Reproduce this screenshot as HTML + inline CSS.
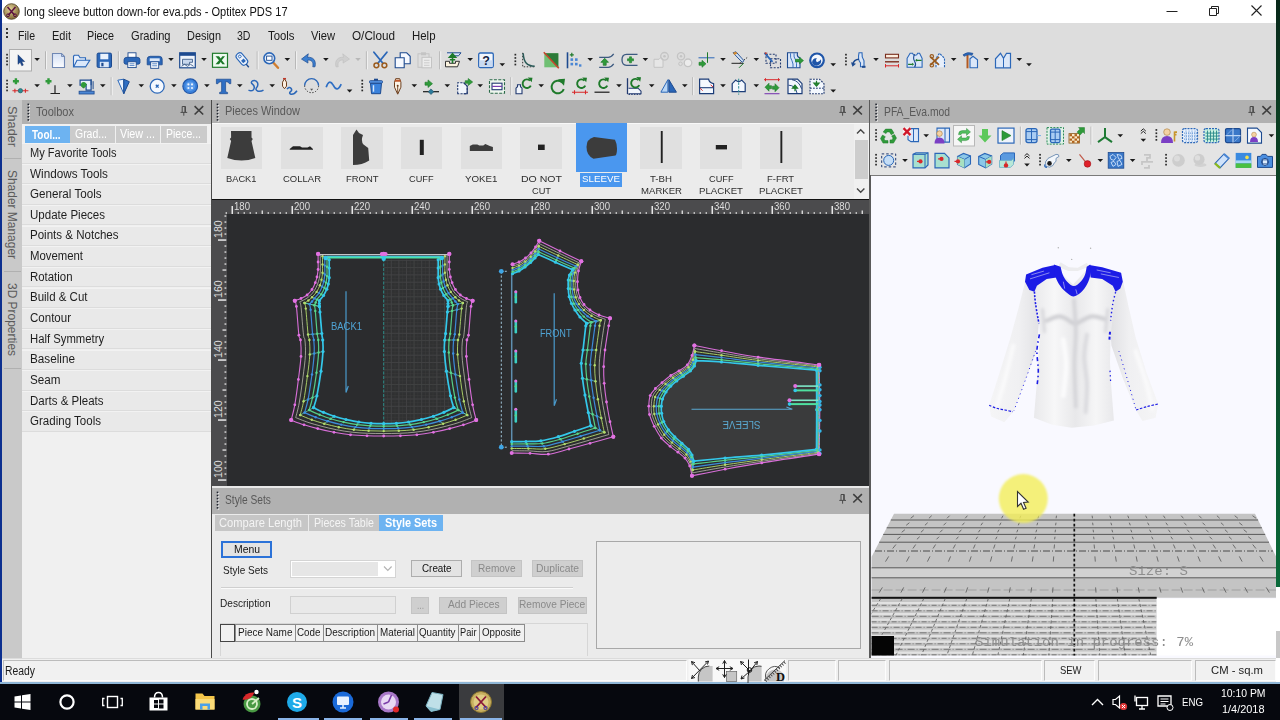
<!DOCTYPE html>
<html>
<head>
<meta charset="utf-8">
<title>Optitex PDS 17</title>
<style>
*{box-sizing:border-box;margin:0;padding:0}
html,body{width:1280px;height:720px;overflow:hidden;background:#fff}
body{font-family:"Liberation Sans",sans-serif;font-size:12px;color:#222;position:relative}
.a{position:absolute}
.t{position:absolute;white-space:nowrap;transform-origin:0 50%}
svg{position:absolute;left:0;top:0;overflow:visible}
</style>
</head>
<body>
<div class="a" style="left:0.0px;top:0.0px;width:1280.0px;height:23.0px;background:#ffffff;"></div>
<div class="a" style="left:0.0px;top:23.0px;width:1280.0px;height:77.0px;background:#dddddd;"></div>
<svg width="1280" height="720"><defs><radialGradient id="tg" cx=".4" cy=".35" r=".7"><stop offset="0" stop-color="#e2d29a"/><stop offset="1" stop-color="#7c6430"/></radialGradient></defs><circle cx="11.500" cy="11.500" r="7.800" fill="url(#tg)" stroke="#4a3a20" stroke-width=".8"/><path d="M7.500 7 L14.500 15 M15.500 7 L8.500 15" stroke="#5a1040" stroke-width="1.500"/><circle cx="8" cy="15.300" r="1.400" fill="none" stroke="#5a1040" stroke-width="1"/><circle cx="15" cy="15.300" r="1.400" fill="none" stroke="#5a1040" stroke-width="1"/></svg>
<span class="t" style="left:24.0px;top:5.1px;font-size:12px;line-height:14.4px;color:#111;transform:scaleX(0.921);">long sleeve button down-for eva.pds - Optitex PDS 17</span>
<svg width="1280" height="720"><path d="M1166.5 11.5 H1177.5" stroke="#222" stroke-width="1" fill="none"/><path d="M1209.5 8.5 h7 v7 h-7 z M1211.5 8.5 v-2 h7 v7 h-2" stroke="#222" stroke-width="1" fill="none"/><path d="M1251.5 5.5 l10 10 M1261.5 5.5 l-10 10" stroke="#222" stroke-width="1.1" fill="none"/></svg>
<span class="t" style="left:18.0px;top:27.7px;font-size:13px;line-height:15.6px;color:#1a1a1a;transform:scaleX(0.812);">File</span>
<span class="t" style="left:51.5px;top:27.7px;font-size:13px;line-height:15.6px;color:#1a1a1a;transform:scaleX(0.848);">Edit</span>
<span class="t" style="left:87.0px;top:27.7px;font-size:13px;line-height:15.6px;color:#1a1a1a;transform:scaleX(0.830);">Piece</span>
<span class="t" style="left:130.5px;top:27.7px;font-size:13px;line-height:15.6px;color:#1a1a1a;transform:scaleX(0.854);">Grading</span>
<span class="t" style="left:186.5px;top:27.7px;font-size:13px;line-height:15.6px;color:#1a1a1a;transform:scaleX(0.840);">Design</span>
<span class="t" style="left:237.0px;top:27.7px;font-size:13px;line-height:15.6px;color:#1a1a1a;transform:scaleX(0.812);">3D</span>
<span class="t" style="left:267.5px;top:27.7px;font-size:13px;line-height:15.6px;color:#1a1a1a;transform:scaleX(0.873);">Tools</span>
<span class="t" style="left:310.5px;top:27.7px;font-size:13px;line-height:15.6px;color:#1a1a1a;transform:scaleX(0.859);">View</span>
<span class="t" style="left:352.0px;top:27.7px;font-size:13px;line-height:15.6px;color:#1a1a1a;transform:scaleX(0.902);">O/Cloud</span>
<span class="t" style="left:411.5px;top:27.7px;font-size:13px;line-height:15.6px;color:#1a1a1a;transform:scaleX(0.879);">Help</span>
<svg width="1280" height="720"><g fill="#333"><rect x="6" y="28" width="2" height="2"/><rect x="6" y="32" width="2" height="2"/><rect x="6" y="36" width="2" height="2"/></g></svg>
<svg width="1280" height="720"><rect x="6.2" y="53.8" width="1.7" height="1.7" fill="#2a2a2a"/><rect x="6.2" y="57.1" width="1.7" height="1.7" fill="#2a2a2a"/><rect x="6.2" y="60.4" width="1.7" height="1.7" fill="#2a2a2a"/><rect x="6.2" y="63.7" width="1.7" height="1.7" fill="#2a2a2a"/><rect x="9.5" y="49.5" width="22" height="21.5" fill="#f4f4f4" stroke="#adadad"/><g transform="translate(11.5,51.3)"><path d="M6.500 3.500 L6.500 13 L8.700 10.900 L10.300 14.500 L11.800 13.800 L10.200 10.300 L13.200 10.200 Z" fill="#1d4a8f" stroke="#12306a" stroke-width=".5"/></g><path d="M34.3 58.1 h5.6 l-2.8 3 z" fill="#1a1a1a"/><path d="M45.5 51.3 v18" stroke="#b4b4b4" stroke-width="1"/><path d="M46.5 51.3 v18" stroke="#f2f2f2" stroke-width="1"/><g transform="translate(49.5,51.3)"><defs><linearGradient id="dg" x1="0" y1="0" x2="0" y2="1"><stop offset="0" stop-color="#d4e0f4"/><stop offset="1" stop-color="#fbfcff"/></linearGradient></defs><path d="M3 2.200 h9 l3 3 v11 h-12 z" fill="url(#dg)" stroke="#7088b4" stroke-width="1.100"/><path d="M12 2.200 v3 h3" fill="none" stroke="#7088b4" stroke-width=".9"/></g><g transform="translate(72.5,51.3)"><path d="M1 5 v10.5 h12 V6.5 H7.5 L6 4 H1.8 z" fill="#e8f0fc" stroke="#2b67b8" stroke-width="1.1"/><path d="M1.2 15.5 L4.5 9 H17.3 L13.2 15.5 z" fill="#dbe8fa" stroke="#2b67b8" stroke-width="1.1"/></g><g transform="translate(95.3,51.3)"><rect x="1.8" y="1.8" width="14.4" height="14.4" rx="1.3" fill="#2b67b8" stroke="#1d4a8f" stroke-width="1"/><rect x="5" y="2.5" width="8" height="5.5" fill="#eaf2fd"/><rect x="4.5" y="10.5" width="9" height="5.5" fill="#dbe7f8"/><rect x="6" y="11.5" width="2.2" height="3.5" fill="#1d4a8f"/></g><path d="M118.4 51.3 v18" stroke="#b4b4b4" stroke-width="1"/><path d="M119.4 51.3 v18" stroke="#f2f2f2" stroke-width="1"/><g transform="translate(123.0,51.3)"><rect x="5" y="1.5" width="8" height="5" fill="#fff" stroke="#1d4a8f" stroke-width=".9"/><path d="M1 8.5 q0 -2.5 3 -2.5 h10 q3 0 3 2.5 v3 q0 1.5 -3 1.5 h-10 q-3 0 -3 -1.5z" fill="#2b67b8" stroke="#1d4a8f" stroke-width=".8"/><rect x="4.8" y="10.5" width="8.4" height="5.8" fill="#fff" stroke="#1d4a8f" stroke-width=".9"/><path d="M6.5 12.5 h5 M6.5 14.3 h5" stroke="#2b67b8" stroke-width=".8"/></g><g transform="translate(145.7,52.3)"><path d="M1.5 7 q0 -3 3 -3 h9 q3 0 3 3 v5.5 h-15z" fill="#2b67b8" stroke="#1d4a8f" stroke-width=".8"/><rect x="4" y="6" width="10" height="3" fill="#dce8f8"/><rect x="5" y="9.5" width="8" height="6.5" fill="#fff" stroke="#1d4a8f" stroke-width=".9"/><path d="M6.5 11.5 h5 M6.5 13.5 h5" stroke="#2b67b8" stroke-width=".8"/></g><path d="M168.2 58.1 h5.6 l-2.8 3 z" fill="#1a1a1a"/><g transform="translate(178.5,51.3)"><rect x="1.2" y="1.5" width="15.6" height="15" fill="#eef3fb" stroke="#1d4a8f" stroke-width="1.2"/><rect x="1.2" y="1.5" width="15.6" height="3" fill="#1d4a8f"/><path d="M4 8 h10 v3 h-3 v2 h-7z" fill="#c9d8ee" stroke="#30507e" stroke-width=".8"/><path d="M3 15 l3 -2 l3 2 l3 -2 l3 2" stroke="#30507e" fill="none" stroke-width=".8"/></g><path d="M201.2 58.1 h5.6 l-2.8 3 z" fill="#1a1a1a"/><g transform="translate(211.0,51.3)"><rect x="1.5" y="2" width="15" height="14" fill="#eefaf0" stroke="#1e7a2a" stroke-width="1.2"/><path d="M4.5 5 L8 9 L4.5 13 H8 L9.7 10.8 L11.4 13 H14 L10.8 9 L14 5 H11.4 L9.7 7.2 L8 5z" fill="#1e7a2a"/></g><g transform="translate(234.0,51.3)"><g transform="rotate(-40 9 9)"><rect x="5.5" y="0.5" width="7" height="13.5" rx="3" fill="#eef4fd" stroke="#2b67b8" stroke-width="1.1"/><circle cx="9" cy="4" r="1.4" fill="none" stroke="#2b67b8" stroke-width=".9"/><rect x="7.3" y="8" width="3.4" height="3.4" fill="#2b67b8"/><path d="M9 14 v4" stroke="#1d4a8f" stroke-width="1.4"/></g></g><path d="M257.2 51.3 v18" stroke="#b4b4b4" stroke-width="1"/><path d="M258.2 51.3 v18" stroke="#f2f2f2" stroke-width="1"/><g transform="translate(262.0,51.3)"><path d="M10.5 10.5 L16 16.5" stroke="#d07d2e" stroke-width="2.4" stroke-linecap="round"/><circle cx="7.3" cy="7" r="5.4" fill="#e6effb" stroke="#2b67b8" stroke-width="1.6"/><rect x="4.6" y="4.8" width="5.4" height="4.2" fill="#fff" stroke="#1d4a8f" stroke-width=".9"/></g><path d="M284.5 58.1 h5.6 l-2.8 3 z" fill="#1a1a1a"/><path d="M295.6 51.3 v18" stroke="#b4b4b4" stroke-width="1"/><path d="M296.6 51.3 v18" stroke="#f2f2f2" stroke-width="1"/><g transform="translate(300.0,51.3)"><path d="M15 15.5 C16.5 9 13 5.5 7.5 6 L8.3 2.5 L1.5 7.8 L8 11.8 L7.7 8.8 C11.5 8.5 13.7 10.5 12.8 15.5z" fill="#3c7fd0" stroke="#1d4a8f" stroke-width=".7"/></g><path d="M323.1 58.1 h5.6 l-2.8 3 z" fill="#1a1a1a"/><g transform="translate(333.0,51.3)"><path d="M3 15.5 C1.5 9 5 5.5 10.5 6 L9.7 2.5 L16.5 7.8 L10 11.8 L10.3 8.8 C6.5 8.5 4.3 10.5 5.2 15.5z" fill="#cfcfcf" stroke="#bdbdbd" stroke-width=".6"/></g><path d="M355.2 58.1 h5.6 l-2.8 3 z" fill="#b8b8b8"/><path d="M366.4 51.3 v18" stroke="#b4b4b4" stroke-width="1"/><path d="M367.4 51.3 v18" stroke="#f2f2f2" stroke-width="1"/><g transform="translate(371.4,51.3)"><path d="M2.5 1 L11.5 12 M15.5 1 L6.5 12" stroke="#2b67b8" stroke-width="1.8" stroke-linecap="round"/><circle cx="5" cy="14" r="2.4" fill="none" stroke="#9a5a1c" stroke-width="1.5"/><circle cx="13" cy="14" r="2.4" fill="none" stroke="#9a5a1c" stroke-width="1.5"/></g><g transform="translate(393.7,51.3)"><path d="M6.5 1.5 h6.5 l3.5 3.5 v7.5 h-10z" fill="#f6f9ff" stroke="#1d4a8f" stroke-width="1.1"/><path d="M1.5 6.5 h9 v10 h-9z" fill="#f6f9ff" stroke="#1d4a8f" stroke-width="1.1"/></g><g transform="translate(416.0,51.3)"><rect x="2" y="2.5" width="11" height="13.5" fill="#dedede" stroke="#c4c4c4" stroke-width="1"/><rect x="5" y="1" width="5" height="3" fill="#c4c4c4"/><rect x="6" y="6" width="9.5" height="10.5" fill="#ececec" stroke="#c4c4c4" stroke-width="1"/><path d="M8 9 h5.5 M8 11.5 h5.5 M8 14 h5.5" stroke="#c4c4c4" stroke-width=".8"/></g><path d="M439.7 51.3 v18" stroke="#b4b4b4" stroke-width="1"/><path d="M440.7 51.3 v18" stroke="#f2f2f2" stroke-width="1"/><g transform="translate(444.0,51.3)"><path d="M3 1.5 h14 l-2.5 3 h-6 v4" fill="#dfe9f8" stroke="#1d4a8f" stroke-width="1"/><path d="M1.5 10 h4 v2 h6 v-2 h4 l-2 5.5 h-12z" fill="#fbf3df" stroke="#333" stroke-width="1"/><path d="M8.5 12 V4 M8.5 2.5 L5.5 6 h6z M5.8 8.5 h5.4" stroke="#1e7a2a" stroke-width="1.6" fill="#1e7a2a"/></g><path d="M467.4 58.1 h5.6 l-2.8 3 z" fill="#1a1a1a"/><g transform="translate(477.0,51.3)"><rect x="1.7" y="1.7" width="14.6" height="14.6" rx="1.5" fill="#f2f6fc" stroke="#2b67b8" stroke-width="1.3"/><rect x="2.5" y="9" width="13" height="6.6" fill="#c9daf2"/></g><text x="486" y="64.89999999999999" text-anchor="middle" font-family="Liberation Sans, sans-serif" font-weight="bold" font-size="12.5" fill="#14233f">?</text><path d="M499.5 63.3 h5.6 l-2.8 3 z" fill="#1a1a1a"/><rect x="514.5" y="53.8" width="1.7" height="1.7" fill="#2a2a2a"/><rect x="514.5" y="57.1" width="1.7" height="1.7" fill="#2a2a2a"/><rect x="514.5" y="60.4" width="1.7" height="1.7" fill="#2a2a2a"/><rect x="514.5" y="63.7" width="1.7" height="1.7" fill="#2a2a2a"/><g transform="translate(518.7,51.3)"><path d="M4 1.5 v14 h12" stroke="#333" stroke-width="1" stroke-dasharray="1.5 1.5" fill="none"/><path d="M4.5 2 C5 11 8 14.5 16 15" stroke="#2a5a58" stroke-width="1.5" fill="none"/></g><g transform="translate(542.3,51.3)"><rect x="2" y="2" width="14" height="14" fill="#6fbf73"/><path d="M2 2 h14 v14z" fill="#2c7a38"/><path d="M1.5 1 L16.5 17" stroke="#c8452c" stroke-width="1.6"/></g><g transform="translate(565.0,51.3)"><path d="M2.5 1 v16" stroke="#1d4a8f" stroke-width="1.6"/><g fill="#4a86d4"><rect x="5.5" y="7" width="2.6" height="2.6"/><rect x="10" y="7" width="2.6" height="2.6"/><rect x="5.5" y="11.5" width="2.6" height="2.6"/><rect x="10" y="11.5" width="2.6" height="2.6"/><rect x="14" y="13" width="2.4" height="2.4"/></g><path d="M6.8 1.5 v4 M4.8 3.5 h4" stroke="#1e7a2a" stroke-width="1.2"/></g><path d="M587.4 58.1 h5.6 l-2.8 3 z" fill="#1a1a1a"/><g transform="translate(597.7,51.3)"><path d="M1.5 6 h9 q3 0 5.5 -3.5 M1.5 16 h9 q3 0 5.5 -3.5" stroke="#3d5a80" stroke-width="1.2" fill="none"/><path d="M7 7 L3.2 11 h2.3 v3 h3 v-3 h2.3z" fill="#2f9a3a" stroke="#1e7a2a" stroke-width=".7"/></g><g transform="translate(620.5,51.3)"><path d="M17 3 h-11 q-4.5 0 -4.500 5.5 q0 5.5 4.5 5.500 h11" stroke="#3d5a80" stroke-width="1.3" fill="none"/><path d="M9 5.500 h2 v2 h2 v2 h-2 v2 h-2 v-2 h-2 v-2 h2z" fill="#2f9a3a" stroke="#1e7a2a" stroke-width=".6"/></g><path d="M642.6 58.1 h5.6 l-2.8 3 z" fill="#1a1a1a"/><g transform="translate(652.0,51.3)"><path d="M2 8 h5 l2 -2 l2 2 v8 h-9z" fill="#e6e6e6" stroke="#c4c4c4" stroke-width="1"/><circle cx="12.500" cy="5" r="3.800" fill="none" stroke="#c4c4c4" stroke-width="1.3"/><circle cx="12.500" cy="5" r="1.300" fill="#c4c4c4"/></g><g transform="translate(675.0,51.3)"><circle cx="6" cy="5" r="3.600" fill="none" stroke="#c4c4c4" stroke-width="1.300"/><circle cx="6" cy="5" r="1.200" fill="#c4c4c4"/><circle cx="13" cy="11.500" r="3.800" fill="#ececec" stroke="#c4c4c4" stroke-width="1.300"/><circle cx="5.500" cy="12.500" r="1.800" fill="none" stroke="#c4c4c4" stroke-width="1"/></g><g transform="translate(697.5,51.3)"><path d="M1 6.500 h16" stroke="#2b67b8" stroke-width="1"/><path d="M10 1 v10.500" stroke="#1e7a2a" stroke-width="1"/><path d="M1.500 11 h3 v-2 l4 3.500 l-4 3.500 v-2 h-3z" fill="#2f9a3a" stroke="#1e7a2a" stroke-width=".6"/></g><path d="M720.2 58.1 h5.6 l-2.8 3 z" fill="#1a1a1a"/><g transform="translate(730.5,51.3)"><path d="M1 12 h12" stroke="#222" stroke-width="1"/><path d="M9 12 l8 -6" stroke="#333" stroke-width=".9" stroke-dasharray="1.500 1.200"/><path d="M13 12 l-4.500 4.500" stroke="#1e7a2a" stroke-width="1"/><path d="M2.500 1.500 l3 -1 l8 9 l-1.800 1.500z" fill="#cfe0f5" stroke="#1d4a8f" stroke-width=".9"/><path d="M2.500 1.500 l3 -1 l1.200 1.800 l-2.700 1.500z" fill="#d68a2c"/></g><path d="M753.5 58.1 h5.6 l-2.8 3 z" fill="#1a1a1a"/><g transform="translate(763.5,51.3)"><rect x="2.500" y="3" width="10" height="9" fill="none" stroke="#223a70" stroke-width="1.100" stroke-dasharray="2 1.400"/><rect x="7" y="7.500" width="10" height="9" fill="none" stroke="#223a70" stroke-width="1.100" stroke-dasharray="2 1.400"/><path d="M1 1.500 l8 9" stroke="#2b67b8" stroke-width="1.800"/><path d="M1 1 l3 0.500 l-2 2z" fill="#c0392b"/></g><g transform="translate(786.0,51.3)"><path d="M1.500 1.500 h10 q-1 4 2.500 5 v10 h-12.500z" fill="#dbe7f8" stroke="#1d4a8f" stroke-width="1.100"/><path d="M4.500 2 q-0.500 5 1.500 7.500 q1.500 3 1 7 M8 2 q-0.500 4 1.500 6.500 q1.500 3 1 8" stroke="#2b67b8" stroke-width=".9" fill="none"/><path d="M9.500 8 h4 v-2 l4 3.300 l-4 3.300 v-2 h-4z" fill="#2f9a3a" stroke="#1e7a2a" stroke-width=".6"/></g><g transform="translate(808.0,51.3)"><circle cx="9" cy="9" r="6.800" fill="#f4f8fe" stroke="#1f55a8" stroke-width="2.200"/><path d="M4 11 q1 -5 5 -4 q-2 2 0 4 q3 -1 4 -3 q1 5 -4 6.500 q-4 0 -5 -3.500z" fill="#1f55a8"/></g><path d="M830.4 63.3 h5.6 l-2.8 3 z" fill="#1a1a1a"/><rect x="845.1" y="53.8" width="1.7" height="1.7" fill="#2a2a2a"/><rect x="845.1" y="57.1" width="1.7" height="1.7" fill="#2a2a2a"/><rect x="845.1" y="60.4" width="1.7" height="1.7" fill="#2a2a2a"/><rect x="845.1" y="63.7" width="1.7" height="1.7" fill="#2a2a2a"/><g transform="translate(850.0,51.3)"><path d="M9 1.500 h3 q-0.500 4 2 8 v6 h-3.500 v-4 q-3 -3 -1.500 -10z" fill="#dbe7f8" stroke="#2b67b8" stroke-width="1.100"/><path d="M9 8 q-5 0 -6.500 5.500" fill="none" stroke="#1d4a8f" stroke-width="1.600"/><path d="M1 11 l1.500 4.500 l3.500 -3z" fill="#1d4a8f"/><rect x="12" y="14.500" width="3.500" height="2" fill="#1d4a8f"/></g><path d="M873.2 58.1 h5.6 l-2.8 3 z" fill="#1a1a1a"/><g transform="translate(883.0,51.3)"><rect x="2.500" y="3" width="13" height="3.600" fill="#fbeee0" stroke="#7a2d1c" stroke-width="1.100"/><path d="M2 10.500 h14" stroke="#7a2d1c" stroke-width="1.400"/><path d="M2 14.500 h14 M2.500 12.800 v3.400 M15.500 12.800 v3.400" stroke="#d8282a" stroke-width="1"/></g><g transform="translate(905.6,51.3)"><path d="M1.500 16 v-9 l3 -5 h2.500 q0.500 2 2.500 2 q2 0 2.500 -2 h2 l2.500 5 v9z" fill="#dbe7f8" stroke="#2b67b8" stroke-width="1.100"/><path d="M9 3 q-2 4 0 7 q2 3 0 6" stroke="#1d4a8f" stroke-width="1.100" fill="none"/><path d="M2.500 13 h4 M11 9 h5" stroke="#1e7a2a" stroke-width="1.300"/><path d="M6.500 11.500 l2 1.500 l-2 1.500z M11.500 7.500 l-2 1.500 l2 1.500z" fill="#1e7a2a"/></g><g transform="translate(929.0,51.3)"><path d="M7 16 v-9 l3.500 -5 l5 5 v9" fill="#e7effb" stroke="#2b67b8" stroke-width="1.100" stroke-dasharray="2.200 1"/><path d="M1.500 5.500 L10 13.500 M1.500 13.500 L10 5.500" stroke="#9a5a1c" stroke-width="1.700"/><circle cx="2.800" cy="5" r="1.700" fill="none" stroke="#9a5a1c" stroke-width="1.200"/><circle cx="2.800" cy="14" r="1.700" fill="none" stroke="#9a5a1c" stroke-width="1.200"/></g><path d="M950.9 58.1 h5.6 l-2.8 3 z" fill="#1a1a1a"/><g transform="translate(962.0,51.3)"><path d="M8 16.500 v-9 l3 -2.500 l4.500 3.500 v8z" fill="#dbe7f8" stroke="#2b67b8" stroke-width="1.100"/><path d="M5.500 2 v15" stroke="#b35a22" stroke-width="2"/><path d="M1 3.500 q4 -3.500 10 -1.500 l-1 2 q-4 -1.500 -8 1z" fill="#2b67b8" stroke="#1d4a8f" stroke-width=".6"/></g><path d="M983.5 58.1 h5.6 l-2.8 3 z" fill="#1a1a1a"/><g transform="translate(994.0,51.3)"><path d="M1.500 16.500 v-9 l5 -5.500 l3 5 l3 -5 h4 v14.500z" fill="#dbe7f8" stroke="#2b67b8" stroke-width="1.200"/><path d="M9.500 7 v9.500" stroke="#2b67b8" stroke-width="1"/></g><path d="M1016.5 58.1 h5.6 l-2.8 3 z" fill="#1a1a1a"/><path d="M1026.2 63.3 h5.6 l-2.8 3 z" fill="#1a1a1a"/><rect x="6.2" y="79.7" width="1.7" height="1.7" fill="#2a2a2a"/><rect x="6.2" y="83.0" width="1.7" height="1.7" fill="#2a2a2a"/><rect x="6.2" y="86.3" width="1.7" height="1.7" fill="#2a2a2a"/><rect x="6.2" y="89.6" width="1.7" height="1.7" fill="#2a2a2a"/><g transform="translate(11.4,77.2)"><path d="M4.500 1 v6 M1.500 4 h6" stroke="#2f9a3a" stroke-width="2.400"/><path d="M1 13.500 h16 M3.500 11.500 v4 M14 11.500 v4" stroke="#d8282a" stroke-width="1.100"/><circle cx="9" cy="13.500" r="2.200" fill="#2d8c94" stroke="#1c5a60" stroke-width=".6"/></g><path d="M34.3 84.2 h5.6 l-2.8 3 z" fill="#1a1a1a"/><g transform="translate(44.0,77.2)"><path d="M4.500 1 v6 M1.500 4 h6" stroke="#2f9a3a" stroke-width="2.400"/><path d="M11 8 v8 M6.500 16.300 h9.500" stroke="#222" stroke-width="1.200"/></g><path d="M67.1 84.2 h5.6 l-2.8 3 z" fill="#1a1a1a"/><g transform="translate(77.6,77.2)"><path d="M2.500 3 h11 v10 h-5 v-5 h-6z" fill="#e6effb" stroke="#1d4a8f" stroke-width="1.200"/><rect x="1.500" y="14" width="15" height="2.800" fill="#4a86d4" stroke="#1d4a8f" stroke-width=".8"/><path d="M13.500 2 v6 M15.500 4 v8" stroke="#1d4a8f" stroke-width="1"/><path d="M4 9 l3 -3 l2 1 l-3 4z" fill="#2f9a3a" stroke="#1e7a2a" stroke-width=".8"/><circle cx="6" cy="7.500" r="2.600" fill="#2f9a3a"/></g><path d="M100.0 84.2 h5.6 l-2.8 3 z" fill="#1a1a1a"/><path d="M111.2 77.2 v18" stroke="#b4b4b4" stroke-width="1"/><path d="M112.2 77.2 v18" stroke="#f2f2f2" stroke-width="1"/><g transform="translate(114.8,77.2)"><path d="M3 3 L9 16.500 L9 2z" fill="#eaf2fd" stroke="#2b67b8" stroke-width="1"/><path d="M9 2 L9 16.500 L14.500 4.500z" fill="#2f6fc4" stroke="#1d4a8f" stroke-width="1"/></g><path d="M138.5 84.2 h5.6 l-2.8 3 z" fill="#1a1a1a"/><g transform="translate(148.2,77.2)"><circle cx="9" cy="9" r="7" fill="#f4f8fe" stroke="#2b67b8" stroke-width="1.300"/><path d="M7.600 7.600 l2.800 2.800 M10.400 7.600 l-2.800 2.800" stroke="#2b67b8" stroke-width="1.300"/></g><path d="M171.1 84.2 h5.6 l-2.8 3 z" fill="#1a1a1a"/><g transform="translate(181.2,77.2)"><circle cx="9" cy="9" r="7.300" fill="#3a82dc" stroke="#1f55a8" stroke-width="1.200"/><circle cx="9" cy="9" r="4.800" fill="#5b9bea"/><g fill="#e8f2ff"><circle cx="7.200" cy="7.200" r="1.100"/><circle cx="10.800" cy="7.200" r="1.100"/><circle cx="7.200" cy="10.800" r="1.100"/><circle cx="10.800" cy="10.800" r="1.100"/></g></g><path d="M204.1 84.2 h5.6 l-2.8 3 z" fill="#1a1a1a"/><g transform="translate(214.6,77.2)"><path d="M1.800 2 h14.400 v4.500 h-1.500 q-0.500 -2 -3 -2 h-0.700 v9.500 q0 1 2 1.200 v1.300 h-8 v-1.300 q2 -0.200 2 -1.200 v-9.500 h-0.700 q-2.500 0 -3 2 h-1.500z" fill="#2f6fc4" stroke="#1d4a8f" stroke-width=".7"/></g><path d="M237.0 84.2 h5.6 l-2.8 3 z" fill="#1a1a1a"/><g transform="translate(247.0,77.2)"><path d="M1.500 13 q3 1.500 5 -0.500 q2 -3 -1 -5.500 q-2.500 -2 0.500 -3.500 q3 -1 4.500 2 q1 3 -1 5 q-1.500 2.500 1.500 3.500 q3 0.500 5.500 -1" fill="none" stroke="#2b67b8" stroke-width="1.500"/></g><path d="M269.4 84.2 h5.6 l-2.8 3 z" fill="#1a1a1a"/><g transform="translate(280.0,77.2)"><path d="M4.500 1.500 l2 3.500 v4 l-2 2.500 l-2 -2.500 v-4z" fill="#fbeee0" stroke="#6b3d1c" stroke-width="1"/><path d="M3 1.500 h3" stroke="#c0392b" stroke-width="1.500"/><path d="M7 12 q2 -3 4 -1 q1.500 2 -0.500 3.500 q-2 1.500 0.500 2.500 q3 0.500 6 -3.500" fill="none" stroke="#2b67b8" stroke-width="1.500"/></g><g transform="translate(302.6,76.2)"><path d="M2 9.500 a7 7 0 0 1 14 0" fill="none" stroke="#2b67b8" stroke-width="1.300"/><path d="M2 9.500 a7 7 0 0 0 14 0" fill="none" stroke="#333" stroke-width="1" stroke-dasharray="1.300 1.600"/><path d="M7.500 12.500 h3 l-1.500 2z" fill="#555"/></g><g transform="translate(324.7,77.2)"><path d="M1.500 10 q3 -9 7 -2 q4 8 8 -1" fill="none" stroke="#2f6fc4" stroke-width="1.700"/></g><path d="M346.8 89.4 h5.6 l-2.8 3 z" fill="#1a1a1a"/><rect x="361.4" y="79.7" width="1.7" height="1.7" fill="#2a2a2a"/><rect x="361.4" y="83.0" width="1.7" height="1.7" fill="#2a2a2a"/><rect x="361.4" y="86.3" width="1.7" height="1.7" fill="#2a2a2a"/><rect x="361.4" y="89.6" width="1.7" height="1.7" fill="#2a2a2a"/><g transform="translate(367.0,77.2)"><path d="M3.500 6 h11 l-1 10.500 h-9z" fill="#3a82dc" stroke="#1d4a8f" stroke-width="1"/><rect x="2.500" y="3.500" width="13" height="2.400" rx=".8" fill="#5b9bea" stroke="#1d4a8f" stroke-width=".9"/><rect x="7" y="1.500" width="4" height="2" fill="#1d4a8f"/><path d="M6.500 8 v6.500" stroke="#d5e6fb" stroke-width="1.400"/></g><g transform="translate(388.7,77.2)"><path d="M9 17 l-3.200 -7 v-5 l1.200 -3.500 h4 l1.200 3.500 v5z" fill="#fbf3e6" stroke="#6b3d1c" stroke-width="1"/><path d="M6.500 2.500 h5 l0.500 2 h-6z" fill="#c0592b"/><path d="M9 9 v7" stroke="#6b3d1c" stroke-width=".9"/><circle cx="9" cy="8.500" r="1" fill="#6b3d1c"/></g><path d="M411.5 84.2 h5.6 l-2.8 3 z" fill="#1a1a1a"/><g transform="translate(422.0,77.2)"><path d="M1 14.500 h16" stroke="#1a1a1a" stroke-width="1.200"/><path d="M6.200 14.500 l2.800 -2.800 l2.800 2.800 l-2.800 2.800z" fill="#2d7c9c" stroke="#1c4a60" stroke-width=".6"/><path d="M3 5 h3 v-2.300 l4.500 3.800 l-4.500 3.800 v-2.300 h-3z" fill="#2f9a3a" stroke="#1e7a2a" stroke-width=".6"/></g><path d="M444.5 84.2 h5.6 l-2.8 3 z" fill="#1a1a1a"/><g transform="translate(455.7,77.2)"><path d="M2 16.500 v-11 h6 l3.500 3.500 v7.500z" fill="#f1f5fb" stroke="#223a70" stroke-width="1.100" stroke-dasharray="2.200 1.200"/><path d="M8 16.500 h3.500 v-7.500 l-3.500 -3.500" fill="none" stroke="#223a70" stroke-width="1.100"/><path d="M9.500 3.500 h3 v-2.200 l4.500 3.500 l-4.500 3.500 v-2.200 h-3z" fill="#2f9a3a" stroke="#1e7a2a" stroke-width=".6"/></g><path d="M477.4 84.2 h5.6 l-2.8 3 z" fill="#1a1a1a"/><g transform="translate(488.0,77.2)"><rect x="1.500" y="2.500" width="15" height="13.500" fill="#eef6ee" stroke="#2a6a48" stroke-width="1.100" stroke-dasharray="3 1.400"/><rect x="4" y="6" width="10" height="6.500" fill="#fff" stroke="#223a70" stroke-width="1.100"/><path d="M4 9.200 h10" stroke="#7a3db0" stroke-width="1.200"/></g><path d="M510.8 77.2 v18" stroke="#b4b4b4" stroke-width="1"/><path d="M511.8 77.2 v18" stroke="#f2f2f2" stroke-width="1"/><g transform="translate(514.0,77.2)"><path d="M2 16.500 v-5.500 l1.500 -1.500 v-2 h3 v2 l1.500 1.500 v5.500z" fill="#f1f5fb" stroke="#223a70" stroke-width="1.100"/><path d="M16.0 3.4 a4.300 4.300 0 1 0 0.800 5" fill="none" stroke="#1e7a2a" stroke-width="1.900"/><path d="M13.7 0.20000000000000018 l4.800 0.300 l-0.800 4.600z" fill="#1e7a2a"/></g><path d="M538.4 84.2 h5.6 l-2.8 3 z" fill="#1a1a1a"/><g transform="translate(548.0,77.2)"><path d="M14 5 a6.300 6.300 0 1 0 1.800 7" fill="none" stroke="#1e7a2a" stroke-width="2"/><path d="M10 2 l7 -0.500 l-1 7z" fill="#1e7a2a"/></g><g transform="translate(571.0,77.2)"><path d="M13.5 3.4 a4.300 4.300 0 1 0 0.800 5" fill="none" stroke="#1e7a2a" stroke-width="1.900"/><path d="M11.2 0.20000000000000018 l4.800 0.300 l-0.800 4.600z" fill="#1e7a2a"/><path d="M1 15 h16 M3.500 13 v4 M14.500 13 v4" stroke="#d8282a" stroke-width="1.100"/></g><g transform="translate(593.0,77.2)"><path d="M13.5 3.4 a4.300 4.300 0 1 0 0.800 5" fill="none" stroke="#1e7a2a" stroke-width="1.900"/><path d="M11.2 0.20000000000000018 l4.800 0.300 l-0.800 4.600z" fill="#1e7a2a"/><path d="M1.500 15 h15" stroke="#1a1a1a" stroke-width="1.200"/></g><path d="M616.2 84.2 h5.6 l-2.8 3 z" fill="#1a1a1a"/><g transform="translate(625.5,77.2)"><path d="M2 1 v16" stroke="#223a70" stroke-width="1.300"/><path d="M3 11 h9.500 l3 3 v2.500 h-12.500" fill="#f1f5fb" stroke="#223a70" stroke-width="1.100"/><path d="M3 17.200 h12" stroke="#223a70" stroke-width="1" stroke-dasharray="1.500 1.200"/><path d="M13.0 2.9 a4.300 4.300 0 1 0 0.800 5" fill="none" stroke="#1e7a2a" stroke-width="1.900"/><path d="M10.7 -0.2999999999999998 l4.800 0.300 l-0.800 4.600z" fill="#1e7a2a"/></g><path d="M648.9 84.2 h5.6 l-2.8 3 z" fill="#1a1a1a"/><g transform="translate(659.4,77.2)"><path d="M1.500 15 L8.500 2.500 V15z" fill="#b9d6f5" stroke="#2b67b8" stroke-width="1"/><path d="M9.500 15 V2.500 L17 15z" fill="#2a66b8" stroke="#1d4a8f" stroke-width="1"/></g><path d="M682.0 84.2 h5.6 l-2.8 3 z" fill="#1a1a1a"/><path d="M692.7 77.2 v18" stroke="#b4b4b4" stroke-width="1"/><path d="M693.7 77.2 v18" stroke="#f2f2f2" stroke-width="1"/><g transform="translate(697.6,77.2)"><path d="M2 2 h9 q0.500 3.500 5 4.500 v10 h-14z" fill="#f4f8fe" stroke="#1c3d78" stroke-width="1.200"/><path d="M2 10.500 h14" stroke="#1c3d78" stroke-width="1.100"/><path d="M2.500 11 l2.500 2.500 M15.500 10 l-2.500 -2.500" stroke="#d8282a" stroke-width="1"/></g><path d="M720.2 84.2 h5.6 l-2.8 3 z" fill="#1a1a1a"/><g transform="translate(729.7,77.2)"><path d="M2.500 14.500 v-8 l3.500 -3.500 q3 3 6 0 l3.500 3.500 v8z" fill="#f4f8fe" stroke="#1c3d78" stroke-width="1.200"/><path d="M9 1.500 v16" stroke="#2d8c94" stroke-width="1" stroke-dasharray="2.500 1.200"/></g><path d="M753.5 84.2 h5.6 l-2.8 3 z" fill="#1a1a1a"/><g transform="translate(763.0,77.2)"><path d="M1 2.500 h16 M2.500 1 v3 M15.500 1 v3" stroke="#d8282a" stroke-width="1"/><path d="M1.500 16.500 h15" stroke="#7a3db0" stroke-width="1.100"/><path d="M2 10 l4 -4 v2.500 h2.500 v3 h-2.500 v2.500z" fill="#2f9a3a" stroke="#1e7a2a" stroke-width=".6"/><path d="M16 9.500 l-4 4 v-2.500 h-2.500 v-3 h2.500 v-2.500z" fill="#2f9a3a" stroke="#1e7a2a" stroke-width=".6" transform="translate(0,1)"/></g><g transform="translate(786.0,77.2)"><path d="M2 2 h9.500 l4.500 4.500 v10 h-14z" fill="#f4f8fe" stroke="#1c3d78" stroke-width="1.200"/><path d="M2.500 8 q7 0 8.500 8 M6 2.500 q7 1 9.500 9" fill="none" stroke="#1c3d78" stroke-width=".9"/><path d="M9 14 v-4.500 M9 8 l-2.500 3 h5z" stroke="#1e7a2a" fill="#2f9a3a" stroke-width="1.200"/></g><g transform="translate(808.0,77.2)"><path d="M2 2 h9.500 l4.500 4.500 v10 h-14z" fill="#f4f8fe" stroke="#223a70" stroke-width="1.100" stroke-dasharray="1.800 1.200"/><path d="M2 11 h14" stroke="#223a70" stroke-width="1" stroke-dasharray="1.800 1.200"/><path d="M8.500 3.500 v3.500 M8.500 9 l-2.600 -3 h5.200z" stroke="#1e7a2a" fill="#2f9a3a" stroke-width="1.200"/></g><path d="M830.4 89.4 h5.6 l-2.8 3 z" fill="#1a1a1a"/></svg>
<div class="a" style="left:2.0px;top:100.0px;width:20.0px;height:558.0px;background:#c9c9c9;"></div>
<span class="t" style="left:19px;top:106px;font-size:12px;line-height:14px;color:#5a5a5a;transform-origin:0 0;transform:rotate(90deg) scaleX(1.060)">Shader</span>
<span class="t" style="left:19px;top:170px;font-size:12px;line-height:14px;color:#5a5a5a;transform-origin:0 0;transform:rotate(90deg) scaleX(0.996)">Shader Manager</span>
<span class="t" style="left:19px;top:283px;font-size:12px;line-height:14px;color:#5a5a5a;transform-origin:0 0;transform:rotate(90deg) scaleX(0.995)">3D Properties</span>
<div class="a" style="left:4.0px;top:158.0px;width:17.0px;height:1.0px;background:#b0b0b0;"></div>
<div class="a" style="left:4.0px;top:271.0px;width:17.0px;height:1.0px;background:#b0b0b0;"></div>
<div class="a" style="left:4.0px;top:368.0px;width:17.0px;height:1.0px;background:#b0b0b0;"></div>
<div class="a" style="left:22.0px;top:100.0px;width:189.0px;height:24.0px;background:#b1b1b1;"></div>
<div class="a" style="left:22.0px;top:124.0px;width:189.0px;height:534.0px;background:#f0f0f0;"></div>
<span class="t" style="left:36.3px;top:104.5px;font-size:12px;line-height:14.4px;color:#595959;transform:scaleX(0.919);">Toolbox</span>
<svg width="1280" height="720"><rect x="28.5" y="104.6" width="1.500" height="1.500" fill="#f2f2f2"/><rect x="27.5" y="103.6" width="1.600" height="1.600" fill="#20242e"/><rect x="28.5" y="107.7" width="1.500" height="1.500" fill="#f2f2f2"/><rect x="27.5" y="106.7" width="1.600" height="1.600" fill="#20242e"/><rect x="28.5" y="110.8" width="1.500" height="1.500" fill="#f2f2f2"/><rect x="27.5" y="109.8" width="1.600" height="1.600" fill="#20242e"/><rect x="28.5" y="113.9" width="1.500" height="1.500" fill="#f2f2f2"/><rect x="27.5" y="112.9" width="1.600" height="1.600" fill="#20242e"/><rect x="28.5" y="117.0" width="1.500" height="1.500" fill="#f2f2f2"/><rect x="27.5" y="116.0" width="1.600" height="1.600" fill="#20242e"/><rect x="28.5" y="120.1" width="1.500" height="1.500" fill="#f2f2f2"/><rect x="27.5" y="119.1" width="1.600" height="1.600" fill="#20242e"/><path d="M182.2 112.0 v-5.500 h3.300 v5.500 M184.9 106.7 v5.300 M180.5 112.4 h6.700 M183.8 112.4 v3.300" stroke="#4a4a4a" stroke-width="1" fill="none"/><path d="M194.6 106.1 l8.600 8.400 M203.2 106.1 l-8.600 8.400" stroke="#3e3e3e" stroke-width="1.600" fill="none"/></svg>
<div class="a" style="left:24.5px;top:126.0px;width:45.5px;height:17.0px;background:#6db3f1;"></div>
<span class="t" style="left:31.5px;top:127.5px;font-size:12px;line-height:14.4px;color:#fff;font-weight:bold;transform:scaleX(0.828);">Tool...</span>
<div class="a" style="left:70.0px;top:126.0px;width:45.0px;height:17.0px;background:#cbcbcb;"></div>
<span class="t" style="left:75.0px;top:127.3px;font-size:12px;line-height:14.4px;color:#fff;transform:scaleX(0.872);">Grad...</span>
<div class="a" style="left:115.5px;top:126.0px;width:44.5px;height:17.0px;background:#cbcbcb;"></div>
<span class="t" style="left:120.0px;top:127.3px;font-size:12px;line-height:14.4px;color:#fff;transform:scaleX(0.895);">View ...</span>
<div class="a" style="left:160.5px;top:126.0px;width:46.5px;height:17.0px;background:#cbcbcb;"></div>
<span class="t" style="left:166.0px;top:127.3px;font-size:12px;line-height:14.4px;color:#fff;transform:scaleX(0.875);">Piece...</span>
<div class="a" style="left:22.0px;top:143.0px;width:188.5px;height:20.6px;background:#e9e9e9;border-bottom:1px solid #dcdcdc;border-top:1px solid #f2f2f2;"></div>
<span class="t" style="left:30.0px;top:145.8px;font-size:12px;line-height:14.4px;color:#1e1e1e;transform:scaleX(0.922);">My Favorite Tools</span>
<div class="a" style="left:22.0px;top:163.7px;width:188.5px;height:20.6px;background:#e9e9e9;border-bottom:1px solid #dcdcdc;border-top:1px solid #f2f2f2;"></div>
<span class="t" style="left:30.0px;top:166.5px;font-size:12px;line-height:14.4px;color:#1e1e1e;transform:scaleX(0.977);">Windows Tools</span>
<div class="a" style="left:22.0px;top:184.3px;width:188.5px;height:20.6px;background:#e9e9e9;border-bottom:1px solid #dcdcdc;border-top:1px solid #f2f2f2;"></div>
<span class="t" style="left:30.0px;top:187.1px;font-size:12px;line-height:14.4px;color:#1e1e1e;transform:scaleX(0.969);">General Tools</span>
<div class="a" style="left:22.0px;top:204.9px;width:188.5px;height:20.6px;background:#e9e9e9;border-bottom:1px solid #dcdcdc;border-top:1px solid #f2f2f2;"></div>
<span class="t" style="left:30.0px;top:207.8px;font-size:12px;line-height:14.4px;color:#1e1e1e;transform:scaleX(0.961);">Update Pieces</span>
<div class="a" style="left:22.0px;top:225.6px;width:188.5px;height:20.6px;background:#e9e9e9;border-bottom:1px solid #dcdcdc;border-top:1px solid #f2f2f2;"></div>
<span class="t" style="left:30.0px;top:228.4px;font-size:12px;line-height:14.4px;color:#1e1e1e;transform:scaleX(0.962);">Points &amp; Notches</span>
<div class="a" style="left:22.0px;top:246.2px;width:188.5px;height:20.6px;background:#e9e9e9;border-bottom:1px solid #dcdcdc;border-top:1px solid #f2f2f2;"></div>
<span class="t" style="left:30.0px;top:249.1px;font-size:12px;line-height:14.4px;color:#1e1e1e;transform:scaleX(0.946);">Movement</span>
<div class="a" style="left:22.0px;top:266.9px;width:188.5px;height:20.6px;background:#e9e9e9;border-bottom:1px solid #dcdcdc;border-top:1px solid #f2f2f2;"></div>
<span class="t" style="left:30.0px;top:269.7px;font-size:12px;line-height:14.4px;color:#1e1e1e;transform:scaleX(0.951);">Rotation</span>
<div class="a" style="left:22.0px;top:287.5px;width:188.5px;height:20.6px;background:#e9e9e9;border-bottom:1px solid #dcdcdc;border-top:1px solid #f2f2f2;"></div>
<span class="t" style="left:30.0px;top:290.3px;font-size:12px;line-height:14.4px;color:#1e1e1e;transform:scaleX(0.958);">Build &amp; Cut</span>
<div class="a" style="left:22.0px;top:308.2px;width:188.5px;height:20.6px;background:#e9e9e9;border-bottom:1px solid #dcdcdc;border-top:1px solid #f2f2f2;"></div>
<span class="t" style="left:30.0px;top:311.0px;font-size:12px;line-height:14.4px;color:#1e1e1e;transform:scaleX(0.960);">Contour</span>
<div class="a" style="left:22.0px;top:328.9px;width:188.5px;height:20.6px;background:#e9e9e9;border-bottom:1px solid #dcdcdc;border-top:1px solid #f2f2f2;"></div>
<span class="t" style="left:30.0px;top:331.7px;font-size:12px;line-height:14.4px;color:#1e1e1e;transform:scaleX(0.941);">Half Symmetry</span>
<div class="a" style="left:22.0px;top:349.5px;width:188.5px;height:20.6px;background:#e9e9e9;border-bottom:1px solid #dcdcdc;border-top:1px solid #f2f2f2;"></div>
<span class="t" style="left:30.0px;top:352.3px;font-size:12px;line-height:14.4px;color:#1e1e1e;transform:scaleX(0.978);">Baseline</span>
<div class="a" style="left:22.0px;top:370.1px;width:188.5px;height:20.6px;background:#e9e9e9;border-bottom:1px solid #dcdcdc;border-top:1px solid #f2f2f2;"></div>
<span class="t" style="left:30.0px;top:372.9px;font-size:12px;line-height:14.4px;color:#1e1e1e;transform:scaleX(0.973);">Seam</span>
<div class="a" style="left:22.0px;top:390.8px;width:188.5px;height:20.6px;background:#e9e9e9;border-bottom:1px solid #dcdcdc;border-top:1px solid #f2f2f2;"></div>
<span class="t" style="left:30.0px;top:393.6px;font-size:12px;line-height:14.4px;color:#1e1e1e;transform:scaleX(0.958);">Darts &amp; Pleats</span>
<div class="a" style="left:22.0px;top:411.4px;width:188.5px;height:20.6px;background:#e9e9e9;border-bottom:1px solid #dcdcdc;border-top:1px solid #f2f2f2;"></div>
<span class="t" style="left:30.0px;top:414.2px;font-size:12px;line-height:14.4px;color:#1e1e1e;transform:scaleX(0.962);">Grading Tools</span>
<div class="a" style="left:211.0px;top:100.0px;width:1.0px;height:558.0px;background:#4a4a4a;"></div>
<div class="a" style="left:212.0px;top:100.0px;width:657.0px;height:24.0px;background:#b1b1b1;"></div>
<span class="t" style="left:225.0px;top:104.3px;font-size:12px;line-height:14.4px;color:#595959;transform:scaleX(0.914);">Pieces Window</span>
<svg width="1280" height="720"><rect x="217.7" y="104.6" width="1.500" height="1.500" fill="#f2f2f2"/><rect x="216.7" y="103.6" width="1.600" height="1.600" fill="#20242e"/><rect x="217.7" y="107.7" width="1.500" height="1.500" fill="#f2f2f2"/><rect x="216.7" y="106.7" width="1.600" height="1.600" fill="#20242e"/><rect x="217.7" y="110.8" width="1.500" height="1.500" fill="#f2f2f2"/><rect x="216.7" y="109.8" width="1.600" height="1.600" fill="#20242e"/><rect x="217.7" y="113.9" width="1.500" height="1.500" fill="#f2f2f2"/><rect x="216.7" y="112.9" width="1.600" height="1.600" fill="#20242e"/><rect x="217.7" y="117.0" width="1.500" height="1.500" fill="#f2f2f2"/><rect x="216.7" y="116.0" width="1.600" height="1.600" fill="#20242e"/><rect x="217.7" y="120.1" width="1.500" height="1.500" fill="#f2f2f2"/><rect x="216.7" y="119.1" width="1.600" height="1.600" fill="#20242e"/><path d="M841.0 112.0 v-5.500 h3.300 v5.500 M843.7 106.7 v5.300 M839.3 112.4 h6.700 M842.6 112.4 v3.300" stroke="#4a4a4a" stroke-width="1" fill="none"/><path d="M853.3 106.1 l8.600 8.400 M861.9 106.1 l-8.600 8.400" stroke="#3e3e3e" stroke-width="1.600" fill="none"/></svg>
<div class="a" style="left:212.0px;top:122.5px;width:657.0px;height:76.5px;background:#ebebeb;"></div>
<div class="a" style="left:212.0px;top:122.5px;width:657.0px;height:1.0px;background:#f8f8f8;"></div>
<div class="a" style="left:220.6px;top:126.5px;width:41.5px;height:42.0px;background:#e0e0e0;"></div>
<span class="t" style="left:226.2px;top:173.8px;font-size:9px;line-height:10.8px;color:#2e2e2e;transform:scaleX(1.033);">BACK1</span>
<div class="a" style="left:281.0px;top:126.5px;width:41.5px;height:42.0px;background:#e0e0e0;"></div>
<span class="t" style="left:282.8px;top:173.8px;font-size:9px;line-height:10.8px;color:#2e2e2e;transform:scaleX(1.055);">COLLAR</span>
<div class="a" style="left:341.0px;top:126.5px;width:41.5px;height:42.0px;background:#e0e0e0;"></div>
<span class="t" style="left:345.6px;top:173.8px;font-size:9px;line-height:10.8px;color:#2e2e2e;transform:scaleX(1.049);">FRONT</span>
<div class="a" style="left:400.7px;top:126.5px;width:41.5px;height:42.0px;background:#e0e0e0;"></div>
<span class="t" style="left:409.2px;top:173.8px;font-size:9px;line-height:10.8px;color:#2e2e2e;transform:scaleX(1.021);">CUFF</span>
<div class="a" style="left:460.5px;top:126.5px;width:41.5px;height:42.0px;background:#e0e0e0;"></div>
<span class="t" style="left:465.1px;top:173.8px;font-size:9px;line-height:10.8px;color:#2e2e2e;transform:scaleX(1.083);">YOKE1</span>
<div class="a" style="left:520.2px;top:126.5px;width:41.5px;height:42.0px;background:#e0e0e0;"></div>
<span class="t" style="left:520.5px;top:173.8px;font-size:9px;line-height:10.8px;color:#2e2e2e;transform:scaleX(1.172);">DO NOT</span>
<span class="t" style="left:531.5px;top:185.8px;font-size:9px;line-height:10.8px;color:#2e2e2e;transform:scaleX(1.027);">CUT</span>
<div class="a" style="left:576.4px;top:123.4px;width:50.5px;height:49.0px;background:#4a97ef;"></div>
<div class="a" style="left:580.4px;top:173.0px;width:41.5px;height:13.5px;background:#4a97ef;"></div>
<span class="t" style="left:581.8px;top:174.0px;font-size:9px;line-height:10.8px;color:#fff;transform:scaleX(1.085);">SLEEVE</span>
<div class="a" style="left:640.4px;top:126.5px;width:41.5px;height:42.0px;background:#e0e0e0;"></div>
<span class="t" style="left:650.2px;top:173.8px;font-size:9px;line-height:10.8px;color:#2e2e2e;transform:scaleX(1.073);">T-BH</span>
<span class="t" style="left:640.7px;top:185.8px;font-size:9px;line-height:10.8px;color:#2e2e2e;transform:scaleX(1.065);">MARKER</span>
<div class="a" style="left:700.0px;top:126.5px;width:41.5px;height:42.0px;background:#e0e0e0;"></div>
<span class="t" style="left:708.5px;top:173.8px;font-size:9px;line-height:10.8px;color:#2e2e2e;transform:scaleX(1.021);">CUFF</span>
<span class="t" style="left:698.8px;top:185.8px;font-size:9px;line-height:10.8px;color:#2e2e2e;transform:scaleX(1.073);">PLACKET</span>
<div class="a" style="left:760.0px;top:126.5px;width:41.5px;height:42.0px;background:#e0e0e0;"></div>
<span class="t" style="left:767.3px;top:173.8px;font-size:9px;line-height:10.8px;color:#2e2e2e;transform:scaleX(1.046);">F-FRT</span>
<span class="t" style="left:758.8px;top:185.8px;font-size:9px;line-height:10.8px;color:#2e2e2e;transform:scaleX(1.073);">PLACKET</span>
<svg width="1280" height="720">
<path d="M231 131 h20.500 v6.500 l1.300 1.500 l-1.300 2 l3.800 17 q-13.500 5 -28 0 l3.800 -17 l-1.300 -2 l1.300 -1.500z" fill="#3c3c3c"/>
<path d="M289.700 149 l3.300 -2.800 h7 l2 1.300 h5.500 l2.500 -1.300 l3 2.800 v.800 h-23.300z" fill="#222"/>
<path d="M353 135 l3.500 -5.500 l2.500 3.500 l4 2 q-2.500 6 0.500 9.500 l4.700 3.500 l1 12.500 q-7 4.500 -16.200 4.500z" fill="#3c3c3c"/>
<rect x="419.800" y="139.800" width="4" height="15.200" fill="#222"/>
<path d="M469.800 151 v-5 l3 -1.500 h4.500 l2 1 h4 l2 -1.500 l4.500 2 l3.100 1 v4z" fill="#3c3c3c"/>
<rect x="538" y="144.600" width="6.700" height="5.400" fill="#222"/>
<path d="M586.500 147 q0 -8 7.500 -10 l21 2.800 q2 4 2 8.700 q0 5.500 -1.500 7 l-22 3.200 q-7 -3.200 -7 -11.700z" fill="#3c3c3c"/>
<rect x="660.800" y="131" width="1.900" height="32" fill="#222"/>
<rect x="715.800" y="145" width="11.200" height="4.400" fill="#222"/>
<rect x="780.400" y="131" width="1.900" height="32" fill="#222"/>
</svg>
<div class="a" style="left:853.5px;top:123.5px;width:15.0px;height:75.5px;background:#f0f0f0;"></div>
<div class="a" style="left:855.0px;top:139.8px;width:12.5px;height:39.5px;background:#cdcdcd;"></div>
<svg width="1280" height="720"><path d="M857 133.500 l3.700 -3.700 l3.700 3.700 M857 188.500 l3.700 3.700 l3.700 -3.700" stroke="#444" stroke-width="1.400" fill="none"/></svg>
<div class="a" style="left:212.0px;top:198.5px;width:657.0px;height:288.0px;background:#2b2c2e;"></div>
<div class="a" style="left:212.0px;top:198.5px;width:657.0px;height:1.0px;background:#111;"></div>
<div class="a" style="left:212.0px;top:199.5px;width:657.0px;height:14.5px;background:#4b4b4d;"></div>
<div class="a" style="left:212.0px;top:199.5px;width:14.5px;height:286.0px;background:#4b4b4d;"></div>
<div class="a" style="left:212.0px;top:485.5px;width:657.0px;height:2.0px;background:#e8e8e8;"></div>
<svg width="1280" height="720"><g fill="#e6e6e6"><rect x="225.6" y="212.200" width="1.300" height="1.600"/><rect x="231.5" y="206" width="1.500" height="8"/><rect x="237.6" y="212.200" width="1.300" height="1.600"/><rect x="243.6" y="212.200" width="1.300" height="1.600"/><rect x="249.6" y="212.200" width="1.300" height="1.600"/><rect x="255.6" y="212.200" width="1.300" height="1.600"/><rect x="261.6" y="210.500" width="1.300" height="3.500"/><rect x="267.6" y="212.200" width="1.300" height="1.600"/><rect x="273.6" y="212.200" width="1.300" height="1.600"/><rect x="279.6" y="212.200" width="1.300" height="1.600"/><rect x="285.6" y="212.200" width="1.300" height="1.600"/><rect x="291.5" y="206" width="1.500" height="8"/><rect x="297.6" y="212.200" width="1.300" height="1.600"/><rect x="303.6" y="212.200" width="1.300" height="1.600"/><rect x="309.6" y="212.200" width="1.300" height="1.600"/><rect x="315.6" y="212.200" width="1.300" height="1.600"/><rect x="321.6" y="210.500" width="1.300" height="3.500"/><rect x="327.6" y="212.200" width="1.300" height="1.600"/><rect x="333.6" y="212.200" width="1.300" height="1.600"/><rect x="339.6" y="212.200" width="1.300" height="1.600"/><rect x="345.6" y="212.200" width="1.300" height="1.600"/><rect x="351.5" y="206" width="1.500" height="8"/><rect x="357.6" y="212.200" width="1.300" height="1.600"/><rect x="363.6" y="212.200" width="1.300" height="1.600"/><rect x="369.6" y="212.200" width="1.300" height="1.600"/><rect x="375.6" y="212.200" width="1.300" height="1.600"/><rect x="381.6" y="210.500" width="1.300" height="3.500"/><rect x="387.6" y="212.200" width="1.300" height="1.600"/><rect x="393.6" y="212.200" width="1.300" height="1.600"/><rect x="399.6" y="212.200" width="1.300" height="1.600"/><rect x="405.6" y="212.200" width="1.300" height="1.600"/><rect x="411.5" y="206" width="1.500" height="8"/><rect x="417.6" y="212.200" width="1.300" height="1.600"/><rect x="423.6" y="212.200" width="1.300" height="1.600"/><rect x="429.6" y="212.200" width="1.300" height="1.600"/><rect x="435.6" y="212.200" width="1.300" height="1.600"/><rect x="441.6" y="210.500" width="1.300" height="3.500"/><rect x="447.6" y="212.200" width="1.300" height="1.600"/><rect x="453.6" y="212.200" width="1.300" height="1.600"/><rect x="459.6" y="212.200" width="1.300" height="1.600"/><rect x="465.6" y="212.200" width="1.300" height="1.600"/><rect x="471.5" y="206" width="1.500" height="8"/><rect x="477.6" y="212.200" width="1.300" height="1.600"/><rect x="483.6" y="212.200" width="1.300" height="1.600"/><rect x="489.6" y="212.200" width="1.300" height="1.600"/><rect x="495.6" y="212.200" width="1.300" height="1.600"/><rect x="501.6" y="210.500" width="1.300" height="3.500"/><rect x="507.6" y="212.200" width="1.300" height="1.600"/><rect x="513.6" y="212.200" width="1.300" height="1.600"/><rect x="519.6" y="212.200" width="1.300" height="1.600"/><rect x="525.6" y="212.200" width="1.300" height="1.600"/><rect x="531.5" y="206" width="1.500" height="8"/><rect x="537.6" y="212.200" width="1.300" height="1.600"/><rect x="543.6" y="212.200" width="1.300" height="1.600"/><rect x="549.6" y="212.200" width="1.300" height="1.600"/><rect x="555.6" y="212.200" width="1.300" height="1.600"/><rect x="561.6" y="210.500" width="1.300" height="3.500"/><rect x="567.6" y="212.200" width="1.300" height="1.600"/><rect x="573.6" y="212.200" width="1.300" height="1.600"/><rect x="579.6" y="212.200" width="1.300" height="1.600"/><rect x="585.6" y="212.200" width="1.300" height="1.600"/><rect x="591.5" y="206" width="1.500" height="8"/><rect x="597.6" y="212.200" width="1.300" height="1.600"/><rect x="603.6" y="212.200" width="1.300" height="1.600"/><rect x="609.6" y="212.200" width="1.300" height="1.600"/><rect x="615.6" y="212.200" width="1.300" height="1.600"/><rect x="621.6" y="210.500" width="1.300" height="3.500"/><rect x="627.6" y="212.200" width="1.300" height="1.600"/><rect x="633.6" y="212.200" width="1.300" height="1.600"/><rect x="639.6" y="212.200" width="1.300" height="1.600"/><rect x="645.6" y="212.200" width="1.300" height="1.600"/><rect x="651.5" y="206" width="1.500" height="8"/><rect x="657.6" y="212.200" width="1.300" height="1.600"/><rect x="663.6" y="212.200" width="1.300" height="1.600"/><rect x="669.6" y="212.200" width="1.300" height="1.600"/><rect x="675.6" y="212.200" width="1.300" height="1.600"/><rect x="681.6" y="210.500" width="1.300" height="3.500"/><rect x="687.6" y="212.200" width="1.300" height="1.600"/><rect x="693.6" y="212.200" width="1.300" height="1.600"/><rect x="699.6" y="212.200" width="1.300" height="1.600"/><rect x="705.6" y="212.200" width="1.300" height="1.600"/><rect x="711.5" y="206" width="1.500" height="8"/><rect x="717.6" y="212.200" width="1.300" height="1.600"/><rect x="723.6" y="212.200" width="1.300" height="1.600"/><rect x="729.6" y="212.200" width="1.300" height="1.600"/><rect x="735.6" y="212.200" width="1.300" height="1.600"/><rect x="741.6" y="210.500" width="1.300" height="3.500"/><rect x="747.6" y="212.200" width="1.300" height="1.600"/><rect x="753.6" y="212.200" width="1.300" height="1.600"/><rect x="759.6" y="212.200" width="1.300" height="1.600"/><rect x="765.6" y="212.200" width="1.300" height="1.600"/><rect x="771.5" y="206" width="1.500" height="8"/><rect x="777.6" y="212.200" width="1.300" height="1.600"/><rect x="783.6" y="212.200" width="1.300" height="1.600"/><rect x="789.6" y="212.200" width="1.300" height="1.600"/><rect x="795.6" y="212.200" width="1.300" height="1.600"/><rect x="801.6" y="210.500" width="1.300" height="3.500"/><rect x="807.6" y="212.200" width="1.300" height="1.600"/><rect x="813.6" y="212.200" width="1.300" height="1.600"/><rect x="819.6" y="212.200" width="1.300" height="1.600"/><rect x="825.6" y="212.200" width="1.300" height="1.600"/><rect x="831.5" y="206" width="1.500" height="8"/><rect x="837.6" y="212.200" width="1.300" height="1.600"/><rect x="843.6" y="212.200" width="1.300" height="1.600"/><rect x="849.6" y="212.200" width="1.300" height="1.600"/><rect x="855.6" y="212.200" width="1.300" height="1.600"/><rect x="861.6" y="210.500" width="1.300" height="3.500"/><rect x="224.500" y="215.4" width="1.800" height="1.300"/><rect x="224.500" y="221.4" width="1.800" height="1.300"/><rect x="224.500" y="227.4" width="1.800" height="1.300"/><rect x="224.500" y="233.4" width="1.800" height="1.300"/><rect x="218" y="239.3" width="8.300" height="1.500"/><rect x="224.500" y="245.4" width="1.800" height="1.300"/><rect x="224.500" y="251.4" width="1.800" height="1.300"/><rect x="224.500" y="257.4" width="1.800" height="1.300"/><rect x="224.500" y="263.4" width="1.800" height="1.300"/><rect x="222.500" y="269.4" width="3.800" height="1.300"/><rect x="224.500" y="275.4" width="1.800" height="1.300"/><rect x="224.500" y="281.4" width="1.800" height="1.300"/><rect x="224.500" y="287.4" width="1.800" height="1.300"/><rect x="224.500" y="293.4" width="1.800" height="1.300"/><rect x="218" y="299.3" width="8.300" height="1.500"/><rect x="224.500" y="305.4" width="1.800" height="1.300"/><rect x="224.500" y="311.4" width="1.800" height="1.300"/><rect x="224.500" y="317.4" width="1.800" height="1.300"/><rect x="224.500" y="323.4" width="1.800" height="1.300"/><rect x="222.500" y="329.4" width="3.800" height="1.300"/><rect x="224.500" y="335.4" width="1.800" height="1.300"/><rect x="224.500" y="341.4" width="1.800" height="1.300"/><rect x="224.500" y="347.4" width="1.800" height="1.300"/><rect x="224.500" y="353.4" width="1.800" height="1.300"/><rect x="218" y="359.3" width="8.300" height="1.500"/><rect x="224.500" y="365.4" width="1.800" height="1.300"/><rect x="224.500" y="371.4" width="1.800" height="1.300"/><rect x="224.500" y="377.4" width="1.800" height="1.300"/><rect x="224.500" y="383.4" width="1.800" height="1.300"/><rect x="222.500" y="389.4" width="3.800" height="1.300"/><rect x="224.500" y="395.4" width="1.800" height="1.300"/><rect x="224.500" y="401.4" width="1.800" height="1.300"/><rect x="224.500" y="407.4" width="1.800" height="1.300"/><rect x="224.500" y="413.4" width="1.800" height="1.300"/><rect x="218" y="419.3" width="8.300" height="1.500"/><rect x="224.500" y="425.4" width="1.800" height="1.300"/><rect x="224.500" y="431.4" width="1.800" height="1.300"/><rect x="224.500" y="437.4" width="1.800" height="1.300"/><rect x="224.500" y="443.4" width="1.800" height="1.300"/><rect x="222.500" y="449.4" width="3.800" height="1.300"/><rect x="224.500" y="455.4" width="1.800" height="1.300"/><rect x="224.500" y="461.4" width="1.800" height="1.300"/><rect x="224.500" y="467.4" width="1.800" height="1.300"/><rect x="224.500" y="473.4" width="1.800" height="1.300"/><rect x="218" y="479.3" width="8.300" height="1.500"/></g></svg>
<span class="t" style="left:234.3px;top:201.0px;font-size:10px;line-height:12.0px;color:#dedede;transform:scaleX(0.959);">180</span>
<span class="t" style="left:294.3px;top:201.0px;font-size:10px;line-height:12.0px;color:#dedede;transform:scaleX(0.959);">200</span>
<span class="t" style="left:354.3px;top:201.0px;font-size:10px;line-height:12.0px;color:#dedede;transform:scaleX(0.959);">220</span>
<span class="t" style="left:414.3px;top:201.0px;font-size:10px;line-height:12.0px;color:#dedede;transform:scaleX(0.959);">240</span>
<span class="t" style="left:474.3px;top:201.0px;font-size:10px;line-height:12.0px;color:#dedede;transform:scaleX(0.959);">260</span>
<span class="t" style="left:534.3px;top:201.0px;font-size:10px;line-height:12.0px;color:#dedede;transform:scaleX(0.959);">280</span>
<span class="t" style="left:594.3px;top:201.0px;font-size:10px;line-height:12.0px;color:#dedede;transform:scaleX(0.959);">300</span>
<span class="t" style="left:654.3px;top:201.0px;font-size:10px;line-height:12.0px;color:#dedede;transform:scaleX(0.959);">320</span>
<span class="t" style="left:714.3px;top:201.0px;font-size:10px;line-height:12.0px;color:#dedede;transform:scaleX(0.959);">340</span>
<span class="t" style="left:774.3px;top:201.0px;font-size:10px;line-height:12.0px;color:#dedede;transform:scaleX(0.959);">360</span>
<span class="t" style="left:834.3px;top:201.0px;font-size:10px;line-height:12.0px;color:#dedede;transform:scaleX(0.959);">380</span>
<span class="t" style="left:213.500px;top:238px;font-size:10px;line-height:10px;color:#dedede;transform-origin:0 0;transform:rotate(-90deg) scaleX(1.06)">180</span>
<span class="t" style="left:213.500px;top:298px;font-size:10px;line-height:10px;color:#dedede;transform-origin:0 0;transform:rotate(-90deg) scaleX(1.06)">160</span>
<span class="t" style="left:213.500px;top:358px;font-size:10px;line-height:10px;color:#dedede;transform-origin:0 0;transform:rotate(-90deg) scaleX(1.06)">140</span>
<span class="t" style="left:213.500px;top:418px;font-size:10px;line-height:10px;color:#dedede;transform-origin:0 0;transform:rotate(-90deg) scaleX(1.06)">120</span>
<span class="t" style="left:213.500px;top:478px;font-size:10px;line-height:10px;color:#dedede;transform-origin:0 0;transform:rotate(-90deg) scaleX(1.06)">100</span>
<svg width="1280" height="720"><clipPath id="bk"><path d="M383.700 259.700 L438.200 259.700 438.2 259.7 C438.2 261.1 438.2 265.0 438.2 268.0 C438.2 271.0 438.1 275.0 438.2 277.7 C438.3 280.4 438.7 282.1 439.1 284.0 C439.5 285.9 439.8 287.3 440.6 289.2 C441.4 291.1 442.7 293.6 443.9 295.5 C445.1 297.4 447.3 299.4 448.0 300.7 C448.7 302.0 448.0 302.6 448.0 303.5 C448.0 304.4 448.0 305.9 448.0 306.4 L448.0 306.4 C447.9 307.3 447.8 307.5 447.4 312.0 C447.0 316.5 446.0 328.8 445.6 333.5 C445.1 338.2 444.9 337.0 444.7 340.0 C444.5 343.0 444.1 346.3 444.4 351.5 C444.7 356.7 445.4 363.8 446.4 371.2 C447.4 378.6 449.3 389.7 450.5 395.8 C451.7 401.9 453.2 405.6 453.8 407.6 L453.8 407.6 C452.1 408.4 447.3 410.9 443.9 412.3 C440.5 413.8 437.0 415.1 433.3 416.3 C429.5 417.5 425.5 418.6 421.4 419.5 C417.3 420.4 412.8 421.4 408.6 422.0 C404.4 422.6 400.5 423.0 396.4 423.3 C392.2 423.6 385.8 423.6 383.7 423.7 z"/></clipPath><g clip-path="url(#bk)"><rect x="383" y="255" width="75" height="172" fill="#303132"/><path d="M383.7 255 v172" stroke="#4e4f50" stroke-width=".6"/><path d="M391.3 255 v172" stroke="#4e4f50" stroke-width=".6"/><path d="M398.9 255 v172" stroke="#4e4f50" stroke-width=".6"/><path d="M406.5 255 v172" stroke="#4e4f50" stroke-width=".6"/><path d="M414.1 255 v172" stroke="#4e4f50" stroke-width=".6"/><path d="M421.7 255 v172" stroke="#4e4f50" stroke-width=".6"/><path d="M429.3 255 v172" stroke="#4e4f50" stroke-width=".6"/><path d="M436.9 255 v172" stroke="#4e4f50" stroke-width=".6"/><path d="M444.5 255 v172" stroke="#4e4f50" stroke-width=".6"/><path d="M452.1 255 v172" stroke="#4e4f50" stroke-width=".6"/><path d="M459.7 255 v172" stroke="#4e4f50" stroke-width=".6"/><path d="M383 260.3 h76" stroke="#4e4f50" stroke-width=".6"/><path d="M383 267.6 h76" stroke="#4e4f50" stroke-width=".6"/><path d="M383 274.9 h76" stroke="#4e4f50" stroke-width=".6"/><path d="M383 282.2 h76" stroke="#4e4f50" stroke-width=".6"/><path d="M383 289.5 h76" stroke="#4e4f50" stroke-width=".6"/><path d="M383 296.8 h76" stroke="#4e4f50" stroke-width=".6"/><path d="M383 304.1 h76" stroke="#4e4f50" stroke-width=".6"/><path d="M383 311.4 h76" stroke="#4e4f50" stroke-width=".6"/><path d="M383 318.7 h76" stroke="#4e4f50" stroke-width=".6"/><path d="M383 326.0 h76" stroke="#4e4f50" stroke-width=".6"/><path d="M383 333.3 h76" stroke="#4e4f50" stroke-width=".6"/><path d="M383 340.6 h76" stroke="#4e4f50" stroke-width=".6"/><path d="M383 347.9 h76" stroke="#4e4f50" stroke-width=".6"/><path d="M383 355.2 h76" stroke="#4e4f50" stroke-width=".6"/><path d="M383 362.5 h76" stroke="#4e4f50" stroke-width=".6"/><path d="M383 369.8 h76" stroke="#4e4f50" stroke-width=".6"/><path d="M383 377.1 h76" stroke="#4e4f50" stroke-width=".6"/><path d="M383 384.4 h76" stroke="#4e4f50" stroke-width=".6"/><path d="M383 391.7 h76" stroke="#4e4f50" stroke-width=".6"/><path d="M383 399.0 h76" stroke="#4e4f50" stroke-width=".6"/><path d="M383 406.3 h76" stroke="#4e4f50" stroke-width=".6"/><path d="M383 413.6 h76" stroke="#4e4f50" stroke-width=".6"/><path d="M383 420.9 h76" stroke="#4e4f50" stroke-width=".6"/><path d="M383 428.2 h76" stroke="#4e4f50" stroke-width=".6"/><path d="M383.7 255 v172" stroke="#3e3f40" stroke-width=".4"/><path d="M387.5 255 v172" stroke="#3e3f40" stroke-width=".4"/><path d="M391.3 255 v172" stroke="#3e3f40" stroke-width=".4"/><path d="M395.1 255 v172" stroke="#3e3f40" stroke-width=".4"/><path d="M398.9 255 v172" stroke="#3e3f40" stroke-width=".4"/><path d="M402.7 255 v172" stroke="#3e3f40" stroke-width=".4"/><path d="M406.5 255 v172" stroke="#3e3f40" stroke-width=".4"/><path d="M410.3 255 v172" stroke="#3e3f40" stroke-width=".4"/><path d="M414.1 255 v172" stroke="#3e3f40" stroke-width=".4"/><path d="M417.9 255 v172" stroke="#3e3f40" stroke-width=".4"/><path d="M421.7 255 v172" stroke="#3e3f40" stroke-width=".4"/><path d="M425.5 255 v172" stroke="#3e3f40" stroke-width=".4"/><path d="M429.3 255 v172" stroke="#3e3f40" stroke-width=".4"/><path d="M433.1 255 v172" stroke="#3e3f40" stroke-width=".4"/><path d="M436.9 255 v172" stroke="#3e3f40" stroke-width=".4"/><path d="M440.7 255 v172" stroke="#3e3f40" stroke-width=".4"/><path d="M444.5 255 v172" stroke="#3e3f40" stroke-width=".4"/><path d="M448.3 255 v172" stroke="#3e3f40" stroke-width=".4"/><path d="M452.1 255 v172" stroke="#3e3f40" stroke-width=".4"/><path d="M455.9 255 v172" stroke="#3e3f40" stroke-width=".4"/><path d="M459.7 255 v172" stroke="#3e3f40" stroke-width=".4"/><path d="M463.5 255 v172" stroke="#3e3f40" stroke-width=".4"/><path d="M383 260.3 h76" stroke="#3e3f40" stroke-width=".4"/><path d="M383 263.9 h76" stroke="#3e3f40" stroke-width=".4"/><path d="M383 267.6 h76" stroke="#3e3f40" stroke-width=".4"/><path d="M383 271.2 h76" stroke="#3e3f40" stroke-width=".4"/><path d="M383 274.9 h76" stroke="#3e3f40" stroke-width=".4"/><path d="M383 278.6 h76" stroke="#3e3f40" stroke-width=".4"/><path d="M383 282.2 h76" stroke="#3e3f40" stroke-width=".4"/><path d="M383 285.9 h76" stroke="#3e3f40" stroke-width=".4"/><path d="M383 289.5 h76" stroke="#3e3f40" stroke-width=".4"/><path d="M383 293.2 h76" stroke="#3e3f40" stroke-width=".4"/><path d="M383 296.8 h76" stroke="#3e3f40" stroke-width=".4"/><path d="M383 300.4 h76" stroke="#3e3f40" stroke-width=".4"/><path d="M383 304.1 h76" stroke="#3e3f40" stroke-width=".4"/><path d="M383 307.8 h76" stroke="#3e3f40" stroke-width=".4"/><path d="M383 311.4 h76" stroke="#3e3f40" stroke-width=".4"/><path d="M383 315.1 h76" stroke="#3e3f40" stroke-width=".4"/><path d="M383 318.7 h76" stroke="#3e3f40" stroke-width=".4"/><path d="M383 322.4 h76" stroke="#3e3f40" stroke-width=".4"/><path d="M383 326.0 h76" stroke="#3e3f40" stroke-width=".4"/><path d="M383 329.6 h76" stroke="#3e3f40" stroke-width=".4"/><path d="M383 333.3 h76" stroke="#3e3f40" stroke-width=".4"/><path d="M383 336.9 h76" stroke="#3e3f40" stroke-width=".4"/><path d="M383 340.6 h76" stroke="#3e3f40" stroke-width=".4"/><path d="M383 344.2 h76" stroke="#3e3f40" stroke-width=".4"/><path d="M383 347.9 h76" stroke="#3e3f40" stroke-width=".4"/><path d="M383 351.6 h76" stroke="#3e3f40" stroke-width=".4"/><path d="M383 355.2 h76" stroke="#3e3f40" stroke-width=".4"/><path d="M383 358.9 h76" stroke="#3e3f40" stroke-width=".4"/><path d="M383 362.5 h76" stroke="#3e3f40" stroke-width=".4"/><path d="M383 366.1 h76" stroke="#3e3f40" stroke-width=".4"/><path d="M383 369.8 h76" stroke="#3e3f40" stroke-width=".4"/><path d="M383 373.4 h76" stroke="#3e3f40" stroke-width=".4"/><path d="M383 377.1 h76" stroke="#3e3f40" stroke-width=".4"/><path d="M383 380.8 h76" stroke="#3e3f40" stroke-width=".4"/><path d="M383 384.4 h76" stroke="#3e3f40" stroke-width=".4"/><path d="M383 388.1 h76" stroke="#3e3f40" stroke-width=".4"/><path d="M383 391.7 h76" stroke="#3e3f40" stroke-width=".4"/><path d="M383 395.4 h76" stroke="#3e3f40" stroke-width=".4"/><path d="M383 399.0 h76" stroke="#3e3f40" stroke-width=".4"/><path d="M383 402.6 h76" stroke="#3e3f40" stroke-width=".4"/><path d="M383 406.3 h76" stroke="#3e3f40" stroke-width=".4"/><path d="M383 410.0 h76" stroke="#3e3f40" stroke-width=".4"/><path d="M383 413.6 h76" stroke="#3e3f40" stroke-width=".4"/><path d="M383 417.2 h76" stroke="#3e3f40" stroke-width=".4"/><path d="M383 420.9 h76" stroke="#3e3f40" stroke-width=".4"/><path d="M383 424.6 h76" stroke="#3e3f40" stroke-width=".4"/><path d="M383 428.2 h76" stroke="#3e3f40" stroke-width=".4"/></g><path d="M383.700 259 V424" stroke="#2c8a86" stroke-width="1" stroke-dasharray="3 1.500"/><path d="M318.1 253.9 C318.1 255.2 318.1 259.4 318.1 262.0 C318.1 264.6 318.3 267.0 318.1 269.5 C317.9 272.0 317.5 274.8 317.0 277.0 C316.5 279.2 316.1 280.6 315.3 282.7 C314.5 284.8 313.4 287.4 312.0 289.5 C310.6 291.6 308.9 293.5 307.1 295.0 C305.3 296.5 303.1 297.6 301.0 298.5 C298.9 299.4 295.8 300.3 294.8 300.7" fill="none" stroke="#e272e2" stroke-width="1.1" stroke-opacity="0.95"/><path d="M294.8 300.7 C295.1 301.6 295.7 300.6 296.4 306.4 C297.1 312.1 298.2 329.6 298.9 335.2 C299.6 340.8 300.1 336.5 300.5 340.0 C300.9 343.5 301.4 349.8 301.0 356.4 C300.6 363.0 299.4 371.3 298.4 379.4 C297.4 387.5 296.0 398.0 294.8 404.8 C293.6 411.6 291.8 417.6 291.2 420.1" fill="none" stroke="#e272e2" stroke-width="1.1" stroke-opacity="0.95"/><path d="M291.2 420.1 C293.3 420.9 299.6 423.4 304.0 424.8 C308.4 426.2 312.7 427.4 317.7 428.6 C322.7 429.9 328.5 431.3 334.0 432.3 C339.5 433.3 345.0 434.2 350.5 434.8 C356.0 435.4 361.5 435.6 367.0 435.8 C372.5 436.0 378.1 436.0 383.7 436.0 C389.3 436.0 394.9 436.0 400.4 435.8 C405.9 435.6 411.4 435.4 416.9 434.8 C422.4 434.2 427.9 433.3 433.4 432.3 C438.9 431.3 444.7 429.9 449.7 428.6 C454.7 427.4 459.0 426.2 463.4 424.8 C467.8 423.4 474.1 420.9 476.2 420.1" fill="none" stroke="#e272e2" stroke-width="1.1" stroke-opacity="0.95"/><path d="M476.2 420.1 C475.6 417.6 473.8 411.6 472.6 404.8 C471.4 398.0 470.0 387.5 469.0 379.4 C468.0 371.3 466.8 363.0 466.4 356.4 C466.0 349.8 466.5 343.5 466.9 340.0 C467.2 336.5 467.8 340.8 468.5 335.2 C469.2 329.6 470.3 312.1 471.0 306.4 C471.7 300.6 472.3 301.6 472.6 300.7" fill="none" stroke="#e272e2" stroke-width="1.1" stroke-opacity="0.95"/><path d="M472.6 300.7 C471.6 300.3 468.4 299.4 466.4 298.5 C464.3 297.6 462.1 296.5 460.3 295.0 C458.5 293.5 456.8 291.6 455.4 289.5 C454.0 287.4 452.9 284.8 452.1 282.7 C451.3 280.6 450.9 279.2 450.4 277.0 C449.9 274.8 449.5 272.0 449.3 269.5 C449.1 267.0 449.3 264.6 449.3 262.0 C449.3 259.4 449.3 255.2 449.3 253.9" fill="none" stroke="#e272e2" stroke-width="1.1" stroke-opacity="0.95"/><path d="M320.3 255.1 C320.3 256.4 320.3 260.5 320.3 263.2 C320.3 265.9 320.5 268.6 320.3 271.1 C320.1 273.7 319.7 276.3 319.3 278.4 C318.8 280.5 318.4 281.9 317.6 284.0 C316.8 286.1 315.6 288.7 314.3 290.7 C313.0 292.7 311.2 294.7 309.6 296.1 C308.0 297.6 306.3 298.6 304.7 299.5 C303.0 300.4 300.5 301.4 299.7 301.8" fill="none" stroke="#c9c9b8" stroke-width="0.9" stroke-opacity="0.8"/><path d="M299.7 301.8 C300.0 302.8 300.5 302.0 301.1 307.5 C301.7 313.0 302.8 329.4 303.5 334.9 C304.1 340.3 304.6 336.6 304.9 340.0 C305.3 343.4 305.7 349.1 305.4 355.4 C305.1 361.7 303.9 369.8 302.9 377.8 C301.9 385.7 300.4 396.4 299.2 403.0 C298.0 409.6 296.3 415.2 295.7 417.6" fill="none" stroke="#c9c9b8" stroke-width="0.9" stroke-opacity="0.8"/><path d="M295.7 417.6 C297.7 418.4 303.7 420.9 307.9 422.3 C312.1 423.7 316.2 424.9 321.0 426.1 C325.7 427.4 331.2 428.7 336.4 429.7 C341.6 430.8 346.9 431.6 352.2 432.2 C357.4 432.8 362.5 433.1 367.8 433.3 C373.1 433.5 378.4 433.5 383.7 433.5 C389.0 433.5 394.3 433.5 399.6 433.3 C404.9 433.1 410.0 432.8 415.2 432.2 C420.5 431.6 425.8 430.8 431.0 429.7 C436.2 428.7 441.7 427.4 446.4 426.1 C451.2 424.9 455.3 423.7 459.5 422.3 C463.7 420.9 469.7 418.4 471.7 417.6" fill="none" stroke="#c9c9b8" stroke-width="0.9" stroke-opacity="0.8"/><path d="M471.7 417.6 C471.1 415.2 469.4 409.6 468.2 403.0 C467.0 396.4 465.5 385.7 464.5 377.8 C463.5 369.8 462.3 361.7 462.0 355.4 C461.7 349.1 462.1 343.4 462.5 340.0 C462.8 336.6 463.3 340.3 463.9 334.9 C464.6 329.4 465.7 313.0 466.3 307.5 C466.9 302.0 467.4 302.8 467.7 301.8" fill="none" stroke="#c9c9b8" stroke-width="0.9" stroke-opacity="0.8"/><path d="M467.7 301.8 C466.9 301.4 464.4 300.4 462.7 299.5 C461.1 298.6 459.4 297.6 457.8 296.1 C456.2 294.7 454.4 292.7 453.1 290.7 C451.8 288.7 450.6 286.1 449.8 284.0 C449.0 281.9 448.6 280.5 448.1 278.4 C447.7 276.3 447.3 273.7 447.1 271.1 C446.9 268.6 447.1 265.9 447.1 263.2 C447.1 260.5 447.1 256.4 447.1 255.1" fill="none" stroke="#c9c9b8" stroke-width="0.9" stroke-opacity="0.8"/><path d="M322.5 256.2 C322.5 257.6 322.5 261.6 322.5 264.4 C322.5 267.2 322.7 270.2 322.5 272.8 C322.4 275.3 322.0 277.7 321.5 279.8 C321.1 281.9 320.7 283.3 319.9 285.3 C319.1 287.3 317.9 289.9 316.6 291.9 C315.3 293.9 313.4 295.8 312.0 297.3 C310.6 298.7 309.6 299.6 308.4 300.5 C307.1 301.4 305.3 302.6 304.6 303.0" fill="none" stroke="#b4dc6c" stroke-width="1.0" stroke-opacity="0.9"/><path d="M304.6 303.0 C304.8 303.9 305.3 303.4 305.8 308.6 C306.4 313.9 307.5 329.3 308.1 334.5 C308.6 339.7 309.1 336.7 309.4 340.0 C309.7 343.3 310.1 348.4 309.8 354.4 C309.5 360.5 308.5 368.3 307.4 376.1 C306.4 383.9 304.9 394.7 303.6 401.2 C302.4 407.7 300.7 412.8 300.2 415.1" fill="none" stroke="#b4dc6c" stroke-width="1.0" stroke-opacity="0.9"/><path d="M300.2 415.1 C302.1 415.9 307.8 418.4 311.8 419.8 C315.8 421.2 319.8 422.4 324.3 423.7 C328.8 424.9 333.9 426.2 338.8 427.2 C343.7 428.2 348.9 429.1 353.8 429.7 C358.8 430.3 363.6 430.6 368.6 430.8 C373.6 431.0 378.7 431.1 383.7 431.1 C388.7 431.1 393.8 431.0 398.8 430.8 C403.8 430.6 408.6 430.3 413.6 429.7 C418.5 429.1 423.7 428.2 428.6 427.2 C433.5 426.2 438.6 424.9 443.1 423.7 C447.6 422.4 451.6 421.2 455.6 419.8 C459.6 418.4 465.3 415.9 467.2 415.1" fill="none" stroke="#b4dc6c" stroke-width="1.0" stroke-opacity="0.9"/><path d="M467.2 415.1 C466.7 412.8 465.0 407.7 463.8 401.2 C462.5 394.7 461.0 383.9 460.0 376.1 C458.9 368.3 457.9 360.5 457.6 354.4 C457.3 348.4 457.7 343.3 458.0 340.0 C458.3 336.7 458.8 339.7 459.3 334.5 C459.9 329.3 461.0 313.9 461.6 308.6 C462.1 303.4 462.6 303.9 462.8 303.0" fill="none" stroke="#b4dc6c" stroke-width="1.0" stroke-opacity="0.9"/><path d="M462.8 303.0 C462.1 302.6 460.3 301.4 459.0 300.5 C457.8 299.6 456.8 298.7 455.4 297.3 C454.0 295.8 452.1 293.9 450.8 291.9 C449.5 289.9 448.3 287.3 447.5 285.3 C446.7 283.3 446.3 281.9 445.9 279.8 C445.4 277.7 445.0 275.3 444.9 272.8 C444.7 270.2 444.9 267.2 444.9 264.4 C444.9 261.6 444.9 257.6 444.9 256.2" fill="none" stroke="#b4dc6c" stroke-width="1.0" stroke-opacity="0.9"/><path d="M324.8 257.4 C324.8 258.8 324.8 262.8 324.8 265.6 C324.8 268.4 324.9 271.8 324.8 274.4 C324.6 277.0 324.2 279.2 323.8 281.2 C323.4 283.2 323.0 284.6 322.2 286.6 C321.4 288.6 320.2 291.1 318.9 293.1 C317.6 295.1 315.6 297.0 314.5 298.4 C313.3 299.8 312.9 300.6 312.0 301.5 C311.2 302.4 310.0 303.7 309.6 304.1" fill="none" stroke="#3d8fe0" stroke-width="1.2" stroke-opacity="0.95"/><path d="M309.6 304.1 C309.7 305.1 310.0 304.8 310.6 309.8 C311.1 314.8 312.1 329.1 312.6 334.2 C313.2 339.2 313.6 336.8 313.8 340.0 C314.1 343.2 314.5 347.7 314.2 353.5 C313.9 359.2 313.0 366.8 312.0 374.5 C310.9 382.1 309.3 393.0 308.1 399.4 C306.8 405.8 305.2 410.4 304.6 412.6" fill="none" stroke="#3d8fe0" stroke-width="1.2" stroke-opacity="0.95"/><path d="M304.6 412.6 C306.5 413.4 311.9 415.9 315.7 417.3 C319.5 418.7 323.3 420.0 327.5 421.2 C331.8 422.4 336.5 423.6 341.2 424.6 C345.9 425.6 350.8 426.5 355.5 427.1 C360.2 427.7 364.7 428.1 369.4 428.3 C374.1 428.6 378.9 428.6 383.7 428.6 C388.5 428.6 393.3 428.6 398.0 428.3 C402.7 428.1 407.2 427.7 411.9 427.1 C416.6 426.5 421.5 425.6 426.2 424.6 C430.9 423.6 435.6 422.4 439.9 421.2 C444.1 420.0 447.9 418.7 451.7 417.3 C455.5 415.9 460.9 413.4 462.8 412.6" fill="none" stroke="#3d8fe0" stroke-width="1.2" stroke-opacity="0.95"/><path d="M462.8 412.6 C462.2 410.4 460.6 405.8 459.3 399.4 C458.1 393.0 456.5 382.1 455.4 374.5 C454.4 366.8 453.5 359.2 453.2 353.5 C452.9 347.7 453.3 343.2 453.6 340.0 C453.8 336.8 454.2 339.2 454.8 334.2 C455.3 329.1 456.3 314.8 456.8 309.8 C457.4 304.8 457.7 305.1 457.8 304.1" fill="none" stroke="#3d8fe0" stroke-width="1.2" stroke-opacity="0.95"/><path d="M457.8 304.1 C457.4 303.7 456.2 302.4 455.4 301.5 C454.5 300.6 454.1 299.8 452.9 298.4 C451.8 297.0 449.8 295.1 448.5 293.1 C447.2 291.1 446.0 288.6 445.2 286.6 C444.4 284.6 444.0 283.2 443.6 281.2 C443.2 279.2 442.8 277.0 442.6 274.4 C442.5 271.8 442.6 268.4 442.6 265.6 C442.6 262.8 442.6 258.8 442.6 257.4" fill="none" stroke="#3d8fe0" stroke-width="1.2" stroke-opacity="0.95"/><path d="M327.0 258.5 C327.0 259.9 327.0 263.9 327.0 266.8 C327.0 269.7 327.1 273.4 327.0 276.1 C326.8 278.7 326.5 280.6 326.0 282.6 C325.6 284.6 325.3 285.9 324.5 287.9 C323.7 289.8 322.5 292.4 321.2 294.3 C319.9 296.2 317.9 298.2 316.9 299.6 C316.0 300.9 316.1 301.6 315.7 302.5 C315.3 303.4 314.7 304.8 314.5 305.3" fill="none" stroke="#58d68c" stroke-width="1.2" stroke-opacity="0.95"/><path d="M314.5 305.3 C314.6 306.2 314.8 306.1 315.3 310.9 C315.7 315.6 316.7 329.0 317.2 333.8 C317.7 338.7 318.0 336.9 318.3 340.0 C318.5 343.1 318.9 347.0 318.6 352.5 C318.3 358.0 317.5 365.3 316.5 372.8 C315.5 380.4 313.7 391.4 312.5 397.6 C311.3 403.8 309.7 408.0 309.1 410.1" fill="none" stroke="#58d68c" stroke-width="1.2" stroke-opacity="0.95"/><path d="M309.1 410.1 C310.9 410.9 316.0 413.4 319.6 414.8 C323.2 416.2 326.8 417.6 330.8 418.8 C334.8 420.0 339.2 421.1 343.6 422.1 C348.0 423.0 352.7 423.9 357.1 424.6 C361.6 425.2 365.8 425.5 370.2 425.8 C374.6 426.1 379.2 426.2 383.7 426.2 C388.2 426.2 392.8 426.1 397.2 425.8 C401.6 425.5 405.8 425.2 410.3 424.6 C414.7 423.9 419.4 423.0 423.8 422.1 C428.2 421.1 432.6 420.0 436.6 418.8 C440.6 417.6 444.2 416.2 447.8 414.8 C451.4 413.4 456.5 410.9 458.3 410.1" fill="none" stroke="#58d68c" stroke-width="1.2" stroke-opacity="0.95"/><path d="M458.3 410.1 C457.7 408.0 456.1 403.8 454.9 397.6 C453.7 391.4 451.9 380.4 450.9 372.8 C449.9 365.3 449.1 358.0 448.8 352.5 C448.5 347.0 448.9 343.1 449.1 340.0 C449.4 336.9 449.7 338.7 450.2 333.8 C450.7 329.0 451.7 315.6 452.1 310.9 C452.6 306.1 452.8 306.2 452.9 305.3" fill="none" stroke="#58d68c" stroke-width="1.2" stroke-opacity="0.95"/><path d="M452.9 305.3 C452.7 304.8 452.1 303.4 451.7 302.5 C451.3 301.6 451.4 300.9 450.5 299.6 C449.5 298.2 447.5 296.2 446.2 294.3 C444.9 292.4 443.7 289.8 442.9 287.9 C442.1 285.9 441.8 284.6 441.4 282.6 C440.9 280.6 440.6 278.7 440.4 276.1 C440.3 273.4 440.4 269.7 440.4 266.8 C440.4 263.9 440.4 259.9 440.4 258.5" fill="none" stroke="#58d68c" stroke-width="1.2" stroke-opacity="0.95"/><path d="M329.2 259.7 C329.2 261.1 329.2 265.0 329.2 268.0 C329.2 271.0 329.3 275.0 329.2 277.7 C329.1 280.4 328.7 282.1 328.3 284.0 C327.9 285.9 327.6 287.3 326.8 289.2 C326.0 291.1 324.7 293.6 323.5 295.5 C322.3 297.4 320.1 299.4 319.4 300.7 C318.7 302.0 319.4 302.6 319.4 303.5 C319.4 304.4 319.4 305.9 319.4 306.4" fill="none" stroke="#34c8ea" stroke-width="1.7" stroke-opacity="1"/><path d="M319.4 306.4 C319.5 307.3 319.6 307.5 320.0 312.0 C320.4 316.5 321.4 328.8 321.8 333.5 C322.2 338.2 322.5 337.0 322.7 340.0 C322.9 343.0 323.3 346.3 323.0 351.5 C322.7 356.7 322.0 363.8 321.0 371.2 C320.0 378.6 318.1 389.7 316.9 395.8 C315.7 401.9 314.2 405.6 313.6 407.6" fill="none" stroke="#34c8ea" stroke-width="1.7" stroke-opacity="1"/><path d="M313.6 407.6 C315.2 408.4 320.1 410.9 323.5 412.3 C326.9 413.8 330.4 415.1 334.1 416.3 C337.9 417.5 341.9 418.6 346.0 419.5 C350.1 420.4 354.6 421.4 358.8 422.0 C363.0 422.6 366.9 423.0 371.0 423.3 C375.1 423.6 379.5 423.7 383.7 423.7 C387.9 423.7 392.2 423.6 396.4 423.3 C400.5 423.0 404.4 422.6 408.6 422.0 C412.8 421.4 417.3 420.4 421.4 419.5 C425.5 418.6 429.5 417.5 433.3 416.3 C437.0 415.1 440.5 413.8 443.9 412.3 C447.3 410.9 452.1 408.4 453.8 407.6" fill="none" stroke="#34c8ea" stroke-width="1.7" stroke-opacity="1"/><path d="M453.8 407.6 C453.2 405.6 451.7 401.9 450.5 395.8 C449.3 389.7 447.4 378.6 446.4 371.2 C445.4 363.8 444.7 356.7 444.4 351.5 C444.1 346.3 444.5 343.0 444.7 340.0 C444.9 337.0 445.1 338.2 445.6 333.5 C446.0 328.8 447.0 316.5 447.4 312.0 C447.8 307.5 447.9 307.3 448.0 306.4" fill="none" stroke="#34c8ea" stroke-width="1.7" stroke-opacity="1"/><path d="M448.0 306.4 C448.0 305.9 448.0 304.4 448.0 303.5 C448.0 302.6 448.7 302.0 448.0 300.7 C447.3 299.4 445.1 297.4 443.9 295.5 C442.7 293.6 441.4 291.1 440.6 289.2 C439.8 287.3 439.5 285.9 439.1 284.0 C438.7 282.1 438.3 280.4 438.2 277.7 C438.1 275.0 438.2 271.0 438.2 268.0 C438.2 265.0 438.2 261.1 438.2 259.7" fill="none" stroke="#34c8ea" stroke-width="1.7" stroke-opacity="1"/><path d="M322.0 255.9 L329.2 259.7" stroke="#5fe0b8" stroke-width=".9" stroke-opacity=".75"/><path d="M322.0 272.4 L329.2 277.7" stroke="#5fe0b8" stroke-width=".9" stroke-opacity=".75"/><path d="M319.3 285.0 L326.8 289.2" stroke="#5fe0b8" stroke-width=".9" stroke-opacity=".75"/><path d="M311.4 297.0 L319.4 300.7" stroke="#5fe0b8" stroke-width=".9" stroke-opacity=".75"/><path d="M303.4 302.7 L319.4 306.4" stroke="#5fe0b8" stroke-width=".9" stroke-opacity=".75"/><path d="M303.4 302.7 L319.4 306.4" stroke="#5fe0b8" stroke-width=".9" stroke-opacity=".75"/><path d="M306.9 334.6 L321.8 333.5" stroke="#5fe0b8" stroke-width=".9" stroke-opacity=".75"/><path d="M308.7 354.7 L323.0 351.5" stroke="#5fe0b8" stroke-width=".9" stroke-opacity=".75"/><path d="M302.5 401.7 L316.9 395.8" stroke="#5fe0b8" stroke-width=".9" stroke-opacity=".75"/><path d="M299.0 415.7 L313.6 407.6" stroke="#5fe0b8" stroke-width=".9" stroke-opacity=".75"/><path d="M323.4 424.3 L334.1 416.3" stroke="#5fe0b8" stroke-width=".9" stroke-opacity=".75"/><path d="M353.4 430.3 L358.8 422.0" stroke="#5fe0b8" stroke-width=".9" stroke-opacity=".75"/><path d="M383.7 431.7 L383.7 423.7" stroke="#5fe0b8" stroke-width=".9" stroke-opacity=".75"/><path d="M414.0 430.3 L408.6 422.0" stroke="#5fe0b8" stroke-width=".9" stroke-opacity=".75"/><path d="M444.0 424.3 L433.3 416.3" stroke="#5fe0b8" stroke-width=".9" stroke-opacity=".75"/><path d="M468.4 415.7 L453.8 407.6" stroke="#5fe0b8" stroke-width=".9" stroke-opacity=".75"/><path d="M468.4 415.7 L453.8 407.6" stroke="#5fe0b8" stroke-width=".9" stroke-opacity=".75"/><path d="M461.1 376.5 L446.4 371.2" stroke="#5fe0b8" stroke-width=".9" stroke-opacity=".75"/><path d="M459.1 340.0 L444.7 340.0" stroke="#5fe0b8" stroke-width=".9" stroke-opacity=".75"/><path d="M462.7 308.4 L447.4 312.0" stroke="#5fe0b8" stroke-width=".9" stroke-opacity=".75"/><path d="M464.0 302.7 L448.0 306.4" stroke="#5fe0b8" stroke-width=".9" stroke-opacity=".75"/><path d="M456.0 297.0 L448.0 300.7" stroke="#5fe0b8" stroke-width=".9" stroke-opacity=".75"/><path d="M448.1 285.0 L440.6 289.2" stroke="#5fe0b8" stroke-width=".9" stroke-opacity=".75"/><path d="M445.4 272.4 L438.2 277.7" stroke="#5fe0b8" stroke-width=".9" stroke-opacity=".75"/><path d="M445.4 255.9 L438.2 259.7" stroke="#5fe0b8" stroke-width=".9" stroke-opacity=".75"/><circle cx="329.2" cy="259.7" r="1.6" fill="#34c8ea"/><circle cx="329.2" cy="268.0" r="1.6" fill="#34c8ea"/><circle cx="329.2" cy="277.7" r="1.6" fill="#34c8ea"/><circle cx="328.3" cy="284.0" r="1.6" fill="#34c8ea"/><circle cx="326.8" cy="289.2" r="1.6" fill="#34c8ea"/><circle cx="323.5" cy="295.5" r="1.6" fill="#34c8ea"/><circle cx="319.4" cy="300.7" r="1.6" fill="#34c8ea"/><circle cx="319.4" cy="303.5" r="1.6" fill="#34c8ea"/><circle cx="319.4" cy="306.4" r="1.6" fill="#34c8ea"/><circle cx="319.4" cy="306.4" r="1.6" fill="#34c8ea"/><circle cx="320.0" cy="312.0" r="1.6" fill="#34c8ea"/><circle cx="321.8" cy="333.5" r="1.6" fill="#34c8ea"/><circle cx="322.7" cy="340.0" r="1.6" fill="#34c8ea"/><circle cx="323.0" cy="351.5" r="1.6" fill="#34c8ea"/><circle cx="321.0" cy="371.2" r="1.6" fill="#34c8ea"/><circle cx="316.9" cy="395.8" r="1.6" fill="#34c8ea"/><circle cx="313.6" cy="407.6" r="1.6" fill="#34c8ea"/><circle cx="313.6" cy="407.6" r="1.6" fill="#34c8ea"/><circle cx="323.5" cy="412.3" r="1.6" fill="#34c8ea"/><circle cx="334.1" cy="416.3" r="1.6" fill="#34c8ea"/><circle cx="346.0" cy="419.5" r="1.6" fill="#34c8ea"/><circle cx="358.8" cy="422.0" r="1.6" fill="#34c8ea"/><circle cx="371.0" cy="423.3" r="1.6" fill="#34c8ea"/><circle cx="383.7" cy="423.7" r="1.6" fill="#34c8ea"/><circle cx="396.4" cy="423.3" r="1.6" fill="#34c8ea"/><circle cx="408.6" cy="422.0" r="1.6" fill="#34c8ea"/><circle cx="421.4" cy="419.5" r="1.6" fill="#34c8ea"/><circle cx="433.3" cy="416.3" r="1.6" fill="#34c8ea"/><circle cx="443.9" cy="412.3" r="1.6" fill="#34c8ea"/><circle cx="453.8" cy="407.6" r="1.6" fill="#34c8ea"/><circle cx="453.8" cy="407.6" r="1.6" fill="#34c8ea"/><circle cx="450.5" cy="395.8" r="1.6" fill="#34c8ea"/><circle cx="446.4" cy="371.2" r="1.6" fill="#34c8ea"/><circle cx="444.4" cy="351.5" r="1.6" fill="#34c8ea"/><circle cx="444.7" cy="340.0" r="1.6" fill="#34c8ea"/><circle cx="445.6" cy="333.5" r="1.6" fill="#34c8ea"/><circle cx="447.4" cy="312.0" r="1.6" fill="#34c8ea"/><circle cx="448.0" cy="306.4" r="1.6" fill="#34c8ea"/><circle cx="448.0" cy="306.4" r="1.6" fill="#34c8ea"/><circle cx="448.0" cy="303.5" r="1.6" fill="#34c8ea"/><circle cx="448.0" cy="300.7" r="1.6" fill="#34c8ea"/><circle cx="443.9" cy="295.5" r="1.6" fill="#34c8ea"/><circle cx="440.6" cy="289.2" r="1.6" fill="#34c8ea"/><circle cx="439.1" cy="284.0" r="1.6" fill="#34c8ea"/><circle cx="438.2" cy="277.7" r="1.6" fill="#34c8ea"/><circle cx="438.2" cy="268.0" r="1.6" fill="#34c8ea"/><circle cx="438.2" cy="259.7" r="1.6" fill="#34c8ea"/><circle cx="324.8" cy="257.4" r="1.2" fill="#3d8fe0"/><circle cx="324.8" cy="265.6" r="1.2" fill="#3d8fe0"/><circle cx="324.8" cy="274.4" r="1.2" fill="#3d8fe0"/><circle cx="323.8" cy="281.2" r="1.2" fill="#3d8fe0"/><circle cx="322.2" cy="286.6" r="1.2" fill="#3d8fe0"/><circle cx="318.9" cy="293.1" r="1.2" fill="#3d8fe0"/><circle cx="314.5" cy="298.4" r="1.2" fill="#3d8fe0"/><circle cx="312.0" cy="301.5" r="1.2" fill="#3d8fe0"/><circle cx="309.6" cy="304.1" r="1.2" fill="#3d8fe0"/><circle cx="309.6" cy="304.1" r="1.2" fill="#3d8fe0"/><circle cx="310.6" cy="309.8" r="1.2" fill="#3d8fe0"/><circle cx="312.6" cy="334.2" r="1.2" fill="#3d8fe0"/><circle cx="313.8" cy="340.0" r="1.2" fill="#3d8fe0"/><circle cx="314.2" cy="353.5" r="1.2" fill="#3d8fe0"/><circle cx="312.0" cy="374.5" r="1.2" fill="#3d8fe0"/><circle cx="308.1" cy="399.4" r="1.2" fill="#3d8fe0"/><circle cx="304.6" cy="412.6" r="1.2" fill="#3d8fe0"/><circle cx="304.6" cy="412.6" r="1.2" fill="#3d8fe0"/><circle cx="315.7" cy="417.3" r="1.2" fill="#3d8fe0"/><circle cx="327.5" cy="421.2" r="1.2" fill="#3d8fe0"/><circle cx="341.2" cy="424.6" r="1.2" fill="#3d8fe0"/><circle cx="355.5" cy="427.1" r="1.2" fill="#3d8fe0"/><circle cx="369.4" cy="428.3" r="1.2" fill="#3d8fe0"/><circle cx="383.7" cy="428.6" r="1.2" fill="#3d8fe0"/><circle cx="398.0" cy="428.3" r="1.2" fill="#3d8fe0"/><circle cx="411.9" cy="427.1" r="1.2" fill="#3d8fe0"/><circle cx="426.2" cy="424.6" r="1.2" fill="#3d8fe0"/><circle cx="439.9" cy="421.2" r="1.2" fill="#3d8fe0"/><circle cx="451.7" cy="417.3" r="1.2" fill="#3d8fe0"/><circle cx="462.8" cy="412.6" r="1.2" fill="#3d8fe0"/><circle cx="462.8" cy="412.6" r="1.2" fill="#3d8fe0"/><circle cx="459.3" cy="399.4" r="1.2" fill="#3d8fe0"/><circle cx="455.4" cy="374.5" r="1.2" fill="#3d8fe0"/><circle cx="453.2" cy="353.5" r="1.2" fill="#3d8fe0"/><circle cx="453.6" cy="340.0" r="1.2" fill="#3d8fe0"/><circle cx="454.8" cy="334.2" r="1.2" fill="#3d8fe0"/><circle cx="456.8" cy="309.8" r="1.2" fill="#3d8fe0"/><circle cx="457.8" cy="304.1" r="1.2" fill="#3d8fe0"/><circle cx="457.8" cy="304.1" r="1.2" fill="#3d8fe0"/><circle cx="455.4" cy="301.5" r="1.2" fill="#3d8fe0"/><circle cx="452.9" cy="298.4" r="1.2" fill="#3d8fe0"/><circle cx="448.5" cy="293.1" r="1.2" fill="#3d8fe0"/><circle cx="445.2" cy="286.6" r="1.2" fill="#3d8fe0"/><circle cx="443.6" cy="281.2" r="1.2" fill="#3d8fe0"/><circle cx="442.6" cy="274.4" r="1.2" fill="#3d8fe0"/><circle cx="442.6" cy="265.6" r="1.2" fill="#3d8fe0"/><circle cx="442.6" cy="257.4" r="1.2" fill="#3d8fe0"/><circle cx="322.5" cy="256.2" r="1.2" fill="#b4dc6c"/><circle cx="322.5" cy="264.4" r="1.2" fill="#b4dc6c"/><circle cx="322.5" cy="272.8" r="1.2" fill="#b4dc6c"/><circle cx="321.5" cy="279.8" r="1.2" fill="#b4dc6c"/><circle cx="319.9" cy="285.3" r="1.2" fill="#b4dc6c"/><circle cx="316.6" cy="291.9" r="1.2" fill="#b4dc6c"/><circle cx="312.0" cy="297.3" r="1.2" fill="#b4dc6c"/><circle cx="308.4" cy="300.5" r="1.2" fill="#b4dc6c"/><circle cx="304.6" cy="303.0" r="1.2" fill="#b4dc6c"/><circle cx="304.6" cy="303.0" r="1.2" fill="#b4dc6c"/><circle cx="305.8" cy="308.6" r="1.2" fill="#b4dc6c"/><circle cx="308.1" cy="334.5" r="1.2" fill="#b4dc6c"/><circle cx="309.4" cy="340.0" r="1.2" fill="#b4dc6c"/><circle cx="309.8" cy="354.4" r="1.2" fill="#b4dc6c"/><circle cx="307.4" cy="376.1" r="1.2" fill="#b4dc6c"/><circle cx="303.6" cy="401.2" r="1.2" fill="#b4dc6c"/><circle cx="300.2" cy="415.1" r="1.2" fill="#b4dc6c"/><circle cx="300.2" cy="415.1" r="1.2" fill="#b4dc6c"/><circle cx="311.8" cy="419.8" r="1.2" fill="#b4dc6c"/><circle cx="324.3" cy="423.7" r="1.2" fill="#b4dc6c"/><circle cx="338.8" cy="427.2" r="1.2" fill="#b4dc6c"/><circle cx="353.8" cy="429.7" r="1.2" fill="#b4dc6c"/><circle cx="368.6" cy="430.8" r="1.2" fill="#b4dc6c"/><circle cx="383.7" cy="431.1" r="1.2" fill="#b4dc6c"/><circle cx="398.8" cy="430.8" r="1.2" fill="#b4dc6c"/><circle cx="413.6" cy="429.7" r="1.2" fill="#b4dc6c"/><circle cx="428.6" cy="427.2" r="1.2" fill="#b4dc6c"/><circle cx="443.1" cy="423.7" r="1.2" fill="#b4dc6c"/><circle cx="455.6" cy="419.8" r="1.2" fill="#b4dc6c"/><circle cx="467.2" cy="415.1" r="1.2" fill="#b4dc6c"/><circle cx="467.2" cy="415.1" r="1.2" fill="#b4dc6c"/><circle cx="463.8" cy="401.2" r="1.2" fill="#b4dc6c"/><circle cx="460.0" cy="376.1" r="1.2" fill="#b4dc6c"/><circle cx="457.6" cy="354.4" r="1.2" fill="#b4dc6c"/><circle cx="458.0" cy="340.0" r="1.2" fill="#b4dc6c"/><circle cx="459.3" cy="334.5" r="1.2" fill="#b4dc6c"/><circle cx="461.6" cy="308.6" r="1.2" fill="#b4dc6c"/><circle cx="462.8" cy="303.0" r="1.2" fill="#b4dc6c"/><circle cx="462.8" cy="303.0" r="1.2" fill="#b4dc6c"/><circle cx="459.0" cy="300.5" r="1.2" fill="#b4dc6c"/><circle cx="455.4" cy="297.3" r="1.2" fill="#b4dc6c"/><circle cx="450.8" cy="291.9" r="1.2" fill="#b4dc6c"/><circle cx="447.5" cy="285.3" r="1.2" fill="#b4dc6c"/><circle cx="445.9" cy="279.8" r="1.2" fill="#b4dc6c"/><circle cx="444.9" cy="272.8" r="1.2" fill="#b4dc6c"/><circle cx="444.9" cy="264.4" r="1.2" fill="#b4dc6c"/><circle cx="444.9" cy="256.2" r="1.2" fill="#b4dc6c"/><circle cx="327.0" cy="258.5" r="1.2" fill="#58d68c"/><circle cx="327.0" cy="266.8" r="1.2" fill="#58d68c"/><circle cx="327.0" cy="276.1" r="1.2" fill="#58d68c"/><circle cx="326.0" cy="282.6" r="1.2" fill="#58d68c"/><circle cx="324.5" cy="287.9" r="1.2" fill="#58d68c"/><circle cx="321.2" cy="294.3" r="1.2" fill="#58d68c"/><circle cx="316.9" cy="299.6" r="1.2" fill="#58d68c"/><circle cx="315.7" cy="302.5" r="1.2" fill="#58d68c"/><circle cx="314.5" cy="305.3" r="1.2" fill="#58d68c"/><circle cx="314.5" cy="305.3" r="1.2" fill="#58d68c"/><circle cx="315.3" cy="310.9" r="1.2" fill="#58d68c"/><circle cx="317.2" cy="333.8" r="1.2" fill="#58d68c"/><circle cx="318.3" cy="340.0" r="1.2" fill="#58d68c"/><circle cx="318.6" cy="352.5" r="1.2" fill="#58d68c"/><circle cx="316.5" cy="372.8" r="1.2" fill="#58d68c"/><circle cx="312.5" cy="397.6" r="1.2" fill="#58d68c"/><circle cx="309.1" cy="410.1" r="1.2" fill="#58d68c"/><circle cx="309.1" cy="410.1" r="1.2" fill="#58d68c"/><circle cx="319.6" cy="414.8" r="1.2" fill="#58d68c"/><circle cx="330.8" cy="418.8" r="1.2" fill="#58d68c"/><circle cx="343.6" cy="422.1" r="1.2" fill="#58d68c"/><circle cx="357.1" cy="424.6" r="1.2" fill="#58d68c"/><circle cx="370.2" cy="425.8" r="1.2" fill="#58d68c"/><circle cx="383.7" cy="426.2" r="1.2" fill="#58d68c"/><circle cx="397.2" cy="425.8" r="1.2" fill="#58d68c"/><circle cx="410.3" cy="424.6" r="1.2" fill="#58d68c"/><circle cx="423.8" cy="422.1" r="1.2" fill="#58d68c"/><circle cx="436.6" cy="418.8" r="1.2" fill="#58d68c"/><circle cx="447.8" cy="414.8" r="1.2" fill="#58d68c"/><circle cx="458.3" cy="410.1" r="1.2" fill="#58d68c"/><circle cx="458.3" cy="410.1" r="1.2" fill="#58d68c"/><circle cx="454.9" cy="397.6" r="1.2" fill="#58d68c"/><circle cx="450.9" cy="372.8" r="1.2" fill="#58d68c"/><circle cx="448.8" cy="352.5" r="1.2" fill="#58d68c"/><circle cx="449.1" cy="340.0" r="1.2" fill="#58d68c"/><circle cx="450.2" cy="333.8" r="1.2" fill="#58d68c"/><circle cx="452.1" cy="310.9" r="1.2" fill="#58d68c"/><circle cx="452.9" cy="305.3" r="1.2" fill="#58d68c"/><circle cx="452.9" cy="305.3" r="1.2" fill="#58d68c"/><circle cx="451.7" cy="302.5" r="1.2" fill="#58d68c"/><circle cx="450.5" cy="299.6" r="1.2" fill="#58d68c"/><circle cx="446.2" cy="294.3" r="1.2" fill="#58d68c"/><circle cx="442.9" cy="287.9" r="1.2" fill="#58d68c"/><circle cx="441.4" cy="282.6" r="1.2" fill="#58d68c"/><circle cx="440.4" cy="276.1" r="1.2" fill="#58d68c"/><circle cx="440.4" cy="266.8" r="1.2" fill="#58d68c"/><circle cx="440.4" cy="258.5" r="1.2" fill="#58d68c"/><circle cx="318.1" cy="253.9" r="2.0" fill="#e272e2"/><circle cx="318.1" cy="262.0" r="1.4" fill="#e272e2"/><circle cx="318.1" cy="269.5" r="1.4" fill="#e272e2"/><circle cx="317.0" cy="277.0" r="1.4" fill="#e272e2"/><circle cx="315.3" cy="282.7" r="1.4" fill="#e272e2"/><circle cx="312.0" cy="289.5" r="1.4" fill="#e272e2"/><circle cx="307.1" cy="295.0" r="1.4" fill="#e272e2"/><circle cx="301.0" cy="298.5" r="1.4" fill="#e272e2"/><circle cx="294.8" cy="300.7" r="2.0" fill="#e272e2"/><circle cx="294.8" cy="300.7" r="2.0" fill="#e272e2"/><circle cx="296.4" cy="306.4" r="1.4" fill="#e272e2"/><circle cx="298.9" cy="335.2" r="1.4" fill="#e272e2"/><circle cx="300.5" cy="340.0" r="1.4" fill="#e272e2"/><circle cx="301.0" cy="356.4" r="1.4" fill="#e272e2"/><circle cx="298.4" cy="379.4" r="1.4" fill="#e272e2"/><circle cx="294.8" cy="404.8" r="1.4" fill="#e272e2"/><circle cx="291.2" cy="420.1" r="2.0" fill="#e272e2"/><circle cx="291.2" cy="420.1" r="2.0" fill="#e272e2"/><circle cx="304.0" cy="424.8" r="1.4" fill="#e272e2"/><circle cx="317.7" cy="428.6" r="1.4" fill="#e272e2"/><circle cx="334.0" cy="432.3" r="1.4" fill="#e272e2"/><circle cx="350.5" cy="434.8" r="1.4" fill="#e272e2"/><circle cx="367.0" cy="435.8" r="1.4" fill="#e272e2"/><circle cx="383.7" cy="436.0" r="1.4" fill="#e272e2"/><circle cx="400.4" cy="435.8" r="1.4" fill="#e272e2"/><circle cx="416.9" cy="434.8" r="1.4" fill="#e272e2"/><circle cx="433.4" cy="432.3" r="1.4" fill="#e272e2"/><circle cx="449.7" cy="428.6" r="1.4" fill="#e272e2"/><circle cx="463.4" cy="424.8" r="1.4" fill="#e272e2"/><circle cx="476.2" cy="420.1" r="2.0" fill="#e272e2"/><circle cx="476.2" cy="420.1" r="2.0" fill="#e272e2"/><circle cx="472.6" cy="404.8" r="1.4" fill="#e272e2"/><circle cx="469.0" cy="379.4" r="1.4" fill="#e272e2"/><circle cx="466.4" cy="356.4" r="1.4" fill="#e272e2"/><circle cx="466.9" cy="340.0" r="1.4" fill="#e272e2"/><circle cx="468.5" cy="335.2" r="1.4" fill="#e272e2"/><circle cx="471.0" cy="306.4" r="1.4" fill="#e272e2"/><circle cx="472.6" cy="300.7" r="2.0" fill="#e272e2"/><circle cx="472.6" cy="300.7" r="2.0" fill="#e272e2"/><circle cx="466.4" cy="298.5" r="1.4" fill="#e272e2"/><circle cx="460.3" cy="295.0" r="1.4" fill="#e272e2"/><circle cx="455.4" cy="289.5" r="1.4" fill="#e272e2"/><circle cx="452.1" cy="282.7" r="1.4" fill="#e272e2"/><circle cx="450.4" cy="277.0" r="1.4" fill="#e272e2"/><circle cx="449.3" cy="269.5" r="1.4" fill="#e272e2"/><circle cx="449.3" cy="262.0" r="1.4" fill="#e272e2"/><circle cx="449.3" cy="253.9" r="2.0" fill="#e272e2"/><path d="M318.500 254.600 H449" stroke="#c4c4c8" stroke-width="1.400"/><path d="M326 257.400 H441.500" stroke="#4fe0a8" stroke-width="2.400"/><path d="M327 256.300 H440.500" stroke="#3fd0e8" stroke-width="1"/><circle cx="318.1" cy="253.900" r="2.100" fill="#e272e2"/><circle cx="383.7" cy="253.900" r="2.100" fill="#e272e2"/><circle cx="449.3" cy="253.900" r="2.100" fill="#e272e2"/><circle cx="381.800" cy="253.900" r="2" fill="#e272e2"/><circle cx="385.600" cy="253.900" r="2" fill="#e272e2"/><circle cx="383.700" cy="258.800" r="2.200" fill="#34c8ea"/><circle cx="325.6" cy="258" r="2.300" fill="#34c8ea"/><circle cx="441.8" cy="258" r="2.300" fill="#34c8ea"/><path d="M346 291.200 V392.500 M346 392.500 l2.300 -6.500" stroke="#4a9acb" stroke-width="1.200" fill="none"/><path d="M501.300 271.300 V447.200" stroke="#9fc4d8" stroke-width="1" stroke-dasharray="2.200 2"/><path d="M501.300 271.300 H508 M501.300 447.200 H508" stroke="#9fc4d8" stroke-width="1" stroke-dasharray="2 1.500"/><path d="M511.700 274 V443" stroke="#5f8fb0" stroke-width="1.500"/><path d="M512.5 264.2 C513.6 263.8 516.8 263.0 519.0 262.0 C521.2 261.0 523.5 259.5 525.5 258.0 C527.5 256.5 529.3 254.8 531.0 253.0 C532.7 251.2 534.1 249.0 535.5 247.0 C536.9 245.0 538.6 241.8 539.2 240.8" fill="none" stroke="#e272e2" stroke-width="1.1" stroke-opacity="0.95"/><path d="M539.2 240.8 C542.7 242.5 553.0 247.6 560.0 251.0 C567.0 254.4 577.8 259.6 581.3 261.3" fill="none" stroke="#e272e2" stroke-width="1.1" stroke-opacity="0.95"/><path d="M581.3 261.3 C580.8 262.9 579.1 267.6 578.5 271.0 C577.9 274.4 577.6 278.5 577.5 281.7 C577.4 284.9 577.6 287.4 578.0 290.0 C578.4 292.6 579.0 295.1 580.0 297.5 C581.0 299.9 582.3 302.4 584.0 304.5 C585.7 306.6 587.5 308.2 590.0 310.0 C592.5 311.8 595.7 313.6 599.0 315.0 C602.3 316.4 608.2 317.8 610.0 318.3" fill="none" stroke="#e272e2" stroke-width="1.1" stroke-opacity="0.95"/><path d="M610.0 318.3 C609.8 319.6 609.5 320.5 608.7 325.8 C607.9 331.1 605.8 343.2 605.0 350.0 C604.2 356.8 603.8 361.1 603.7 366.7 C603.6 372.2 603.7 377.4 604.2 383.3 C604.7 389.2 605.5 395.6 606.5 402.0 C607.5 408.4 608.9 415.9 610.0 421.7 C611.1 427.5 612.8 434.2 613.3 436.7" fill="none" stroke="#e272e2" stroke-width="1.1" stroke-opacity="0.95"/><path d="M613.3 436.7 C609.4 437.8 597.4 441.2 590.0 443.3 C582.6 445.4 576.0 447.2 569.0 449.0 C562.0 450.8 554.8 453.5 548.3 454.2 C541.8 454.9 536.1 453.5 530.0 453.3 C523.9 453.1 514.8 453.1 511.7 453.0" fill="none" stroke="#e272e2" stroke-width="1.1" stroke-opacity="0.95"/><path d="M512.5 266.1 C513.6 265.7 516.9 264.9 519.0 263.8 C521.1 262.8 523.4 261.3 525.4 259.8 C527.4 258.3 529.2 256.7 530.9 254.9 C532.6 253.1 534.0 251.1 535.4 249.2 C536.8 247.3 538.4 244.5 539.0 243.5" fill="none" stroke="#c9c9b8" stroke-width="0.9" stroke-opacity="0.8"/><path d="M539.0 243.5 C542.4 245.2 552.3 250.0 559.1 253.2 C565.9 256.5 576.1 261.4 579.5 263.0" fill="none" stroke="#c9c9b8" stroke-width="0.9" stroke-opacity="0.8"/><path d="M579.5 263.0 C579.1 264.5 577.3 268.7 576.7 271.8 C576.1 274.9 575.8 278.4 575.7 281.4 C575.6 284.3 575.7 287.0 576.1 289.7 C576.4 292.4 576.9 294.9 577.8 297.3 C578.7 299.8 580.0 302.2 581.5 304.3 C583.0 306.4 584.7 308.1 587.0 310.0 C589.3 311.9 592.1 313.8 595.2 315.4 C598.3 316.9 603.7 318.6 605.3 319.3" fill="none" stroke="#c9c9b8" stroke-width="0.9" stroke-opacity="0.8"/><path d="M605.3 319.3 C605.1 320.4 604.9 320.7 604.1 325.8 C603.3 330.9 601.4 343.3 600.6 350.0 C599.8 356.7 599.3 360.6 599.2 366.0 C599.1 371.4 599.4 376.5 599.9 382.3 C600.4 388.1 601.2 394.3 602.2 400.6 C603.2 406.9 604.6 414.2 605.7 419.9 C606.8 425.5 608.3 432.1 608.8 434.5" fill="none" stroke="#c9c9b8" stroke-width="0.9" stroke-opacity="0.8"/><path d="M608.8 434.5 C605.1 435.6 593.9 438.9 586.9 440.9 C579.9 442.9 573.5 444.8 566.9 446.5 C560.2 448.3 553.1 450.8 546.8 451.5 C540.5 452.3 535.1 451.1 529.2 450.9 C523.4 450.8 514.6 450.8 511.7 450.7" fill="none" stroke="#c9c9b8" stroke-width="0.9" stroke-opacity="0.8"/><path d="M512.5 268.0 C513.6 267.6 516.9 266.7 519.0 265.6 C521.1 264.5 523.3 263.1 525.3 261.6 C527.3 260.1 529.1 258.5 530.8 256.8 C532.5 255.1 534.0 253.2 535.3 251.4 C536.6 249.6 538.2 247.1 538.8 246.3" fill="none" stroke="#b4dc6c" stroke-width="1.0" stroke-opacity="0.9"/><path d="M538.8 246.3 C542.1 247.8 551.7 252.4 558.2 255.5 C564.7 258.5 574.5 263.1 577.8 264.7" fill="none" stroke="#b4dc6c" stroke-width="1.0" stroke-opacity="0.9"/><path d="M577.8 264.7 C577.3 266.0 575.6 269.9 574.9 272.6 C574.2 275.3 573.9 278.2 573.8 281.0 C573.7 283.8 573.8 286.7 574.1 289.4 C574.4 292.1 574.9 294.7 575.7 297.2 C576.5 299.6 577.6 302.0 579.0 304.1 C580.4 306.2 581.9 308.1 584.0 310.0 C586.1 311.9 588.6 314.1 591.4 315.8 C594.2 317.5 599.1 319.6 600.7 320.3" fill="none" stroke="#b4dc6c" stroke-width="1.0" stroke-opacity="0.9"/><path d="M600.7 320.3 C600.5 321.2 600.3 320.9 599.5 325.8 C598.8 330.8 597.0 343.4 596.2 350.0 C595.4 356.6 594.9 360.1 594.7 365.3 C594.6 370.6 595.0 375.7 595.5 381.3 C596.0 386.9 596.9 393.1 597.9 399.2 C598.9 405.3 600.3 412.5 601.3 418.0 C602.4 423.5 603.8 430.0 604.3 432.3" fill="none" stroke="#b4dc6c" stroke-width="1.0" stroke-opacity="0.9"/><path d="M604.3 432.3 C600.9 433.4 590.4 436.5 583.8 438.5 C577.2 440.5 571.1 442.4 564.7 444.1 C558.3 445.8 551.4 448.1 545.3 448.8 C539.2 449.6 534.0 448.6 528.4 448.6 C522.8 448.5 514.5 448.5 511.7 448.5" fill="none" stroke="#b4dc6c" stroke-width="1.0" stroke-opacity="0.9"/><path d="M512.5 269.9 C513.6 269.5 516.9 268.5 519.0 267.4 C521.1 266.3 523.2 264.8 525.2 263.4 C527.2 261.9 529.0 260.3 530.7 258.7 C532.4 257.1 533.9 255.2 535.2 253.6 C536.5 252.0 538.1 249.8 538.7 249.0" fill="none" stroke="#3d8fe0" stroke-width="1.2" stroke-opacity="0.95"/><path d="M538.7 249.0 C541.8 250.5 551.1 254.8 557.3 257.7 C563.5 260.6 572.9 264.9 576.0 266.3" fill="none" stroke="#3d8fe0" stroke-width="1.2" stroke-opacity="0.95"/><path d="M576.0 266.3 C575.5 267.5 573.8 271.0 573.1 273.4 C572.4 275.8 572.1 278.1 572.0 280.7 C571.8 283.3 571.9 286.4 572.2 289.1 C572.4 291.8 572.8 294.6 573.5 297.0 C574.2 299.5 575.3 301.7 576.5 303.9 C577.7 306.1 579.1 307.9 581.0 310.0 C582.9 312.1 585.1 314.3 587.6 316.2 C590.1 318.1 594.6 320.4 596.0 321.3" fill="none" stroke="#3d8fe0" stroke-width="1.2" stroke-opacity="0.95"/><path d="M596.0 321.3 C595.8 322.1 595.7 321.0 595.0 325.8 C594.3 330.6 592.6 343.5 591.8 350.0 C591.0 356.5 590.4 359.6 590.3 364.7 C590.2 369.7 590.6 374.8 591.2 380.3 C591.7 385.8 592.6 391.8 593.6 397.8 C594.6 403.8 595.9 410.8 597.0 416.2 C598.0 421.6 599.3 427.8 599.8 430.2" fill="none" stroke="#3d8fe0" stroke-width="1.2" stroke-opacity="0.95"/><path d="M599.8 430.2 C596.6 431.2 586.9 434.2 580.7 436.1 C574.5 438.0 568.7 439.9 562.6 441.6 C556.4 443.3 549.6 445.4 543.8 446.2 C538.0 446.9 533.0 446.2 527.6 446.2 C522.2 446.2 514.4 446.2 511.7 446.2" fill="none" stroke="#3d8fe0" stroke-width="1.2" stroke-opacity="0.95"/><path d="M512.5 271.8 C513.6 271.4 516.9 270.3 519.0 269.2 C521.1 268.1 523.2 266.6 525.1 265.2 C527.0 263.8 528.9 262.2 530.6 260.6 C532.3 259.0 533.8 257.3 535.1 255.8 C536.4 254.3 537.9 252.4 538.5 251.8" fill="none" stroke="#58d68c" stroke-width="1.2" stroke-opacity="0.95"/><path d="M538.5 251.8 C541.5 253.1 550.4 257.2 556.4 260.0 C562.4 262.7 571.3 266.7 574.3 268.0" fill="none" stroke="#58d68c" stroke-width="1.2" stroke-opacity="0.95"/><path d="M574.3 268.0 C573.8 269.0 572.0 272.1 571.3 274.2 C570.6 276.3 570.3 277.9 570.1 280.3 C570.0 282.8 570.0 286.0 570.2 288.8 C570.4 291.6 570.7 294.4 571.4 296.9 C572.0 299.3 572.9 301.5 574.0 303.7 C575.1 305.9 576.4 307.9 578.0 310.0 C579.6 312.1 581.6 314.6 583.8 316.6 C586.0 318.7 590.1 321.4 591.4 322.3" fill="none" stroke="#58d68c" stroke-width="1.2" stroke-opacity="0.95"/><path d="M591.4 322.3 C591.2 322.9 591.0 321.2 590.4 325.8 C589.7 330.4 588.2 343.6 587.4 350.0 C586.6 356.4 585.9 359.1 585.8 364.0 C585.7 368.9 586.3 373.9 586.8 379.3 C587.4 384.7 588.3 390.6 589.3 396.4 C590.3 402.2 591.6 409.1 592.6 414.3 C593.6 419.6 594.9 425.7 595.3 428.0" fill="none" stroke="#58d68c" stroke-width="1.2" stroke-opacity="0.95"/><path d="M595.3 428.0 C592.3 428.9 583.4 431.8 577.6 433.7 C571.8 435.6 566.3 437.5 560.4 439.2 C554.6 440.8 547.9 442.7 542.3 443.5 C536.7 444.3 531.9 443.8 526.8 443.9 C521.7 443.9 514.2 443.9 511.7 444.0" fill="none" stroke="#58d68c" stroke-width="1.2" stroke-opacity="0.95"/><path d="M512.5 273.7 C513.6 273.2 516.9 272.1 519.0 271.0 C521.1 269.9 523.1 268.4 525.0 267.0 C526.9 265.6 528.8 264.0 530.5 262.5 C532.2 261.0 533.7 259.3 535.0 258.0 C536.3 256.7 537.8 255.1 538.3 254.5" fill="none" stroke="#34c8ea" stroke-width="1.7" stroke-opacity="1"/><path d="M538.3 254.5 C541.2 255.8 549.8 259.7 555.5 262.2 C561.2 264.7 569.7 268.4 572.5 269.7" fill="none" stroke="#34c8ea" stroke-width="1.7" stroke-opacity="1"/><path d="M572.5 269.7 C572.0 270.6 570.2 273.3 569.5 275.0 C568.8 276.7 568.5 277.8 568.3 280.0 C568.1 282.2 568.1 285.7 568.3 288.5 C568.4 291.3 568.7 294.2 569.2 296.7 C569.7 299.2 570.5 301.3 571.5 303.5 C572.5 305.7 573.6 307.8 575.0 310.0 C576.4 312.2 578.0 314.8 580.0 317.0 C582.0 319.2 585.6 322.2 586.7 323.3" fill="none" stroke="#34c8ea" stroke-width="1.7" stroke-opacity="1"/><path d="M586.7 323.3 C586.6 323.7 586.4 321.4 585.8 325.8 C585.2 330.2 583.8 343.8 583.0 350.0 C582.2 356.2 581.4 358.6 581.3 363.3 C581.2 368.0 581.9 373.0 582.5 378.3 C583.1 383.6 584.0 389.3 585.0 395.0 C586.0 400.7 587.3 407.4 588.3 412.5 C589.3 417.6 590.4 423.6 590.8 425.8" fill="none" stroke="#34c8ea" stroke-width="1.7" stroke-opacity="1"/><path d="M590.8 425.8 C588.1 426.7 579.9 429.5 574.5 431.3 C569.1 433.1 563.9 435.1 558.3 436.7 C552.7 438.3 546.2 440.0 540.8 440.8 C535.4 441.6 530.9 441.4 526.0 441.5 C521.1 441.6 514.1 441.7 511.7 441.7" fill="none" stroke="#34c8ea" stroke-width="1.7" stroke-opacity="1"/><path d="M512.5 267.5 L512.5 273.7" stroke="#5fe0b8" stroke-width=".9" stroke-opacity=".75"/><path d="M525.3 261.1 L525.0 267.0" stroke="#5fe0b8" stroke-width=".9" stroke-opacity=".75"/><path d="M535.3 250.8 L535.0 258.0" stroke="#5fe0b8" stroke-width=".9" stroke-opacity=".75"/><path d="M538.9 245.6 L538.3 254.5" stroke="#5fe0b8" stroke-width=".9" stroke-opacity=".75"/><path d="M578.2 264.2 L572.5 269.7" stroke="#5fe0b8" stroke-width=".9" stroke-opacity=".75"/><path d="M578.2 264.2 L572.5 269.7" stroke="#5fe0b8" stroke-width=".9" stroke-opacity=".75"/><path d="M574.3 281.1 L568.3 280.0" stroke="#5fe0b8" stroke-width=".9" stroke-opacity=".75"/><path d="M576.2 297.2 L569.2 296.7" stroke="#5fe0b8" stroke-width=".9" stroke-opacity=".75"/><path d="M584.8 310.0 L575.0 310.0" stroke="#5fe0b8" stroke-width=".9" stroke-opacity=".75"/><path d="M601.8 320.1 L586.7 323.3" stroke="#5fe0b8" stroke-width=".9" stroke-opacity=".75"/><path d="M601.8 320.1 L586.7 323.3" stroke="#5fe0b8" stroke-width=".9" stroke-opacity=".75"/><path d="M597.3 350.0 L583.0 350.0" stroke="#5fe0b8" stroke-width=".9" stroke-opacity=".75"/><path d="M596.6 381.6 L582.5 378.3" stroke="#5fe0b8" stroke-width=".9" stroke-opacity=".75"/><path d="M602.4 418.5 L588.3 412.5" stroke="#5fe0b8" stroke-width=".9" stroke-opacity=".75"/><path d="M605.4 432.9 L590.8 425.8" stroke="#5fe0b8" stroke-width=".9" stroke-opacity=".75"/><path d="M565.3 444.7 L558.3 436.7" stroke="#5fe0b8" stroke-width=".9" stroke-opacity=".75"/><path d="M528.6 449.2 L526.0 441.5" stroke="#5fe0b8" stroke-width=".9" stroke-opacity=".75"/><circle cx="512.5" cy="273.7" r="1.6" fill="#34c8ea"/><circle cx="519.0" cy="271.0" r="1.6" fill="#34c8ea"/><circle cx="525.0" cy="267.0" r="1.6" fill="#34c8ea"/><circle cx="530.5" cy="262.5" r="1.6" fill="#34c8ea"/><circle cx="535.0" cy="258.0" r="1.6" fill="#34c8ea"/><circle cx="538.3" cy="254.5" r="1.6" fill="#34c8ea"/><circle cx="538.3" cy="254.5" r="1.6" fill="#34c8ea"/><circle cx="555.5" cy="262.2" r="1.6" fill="#34c8ea"/><circle cx="572.5" cy="269.7" r="1.6" fill="#34c8ea"/><circle cx="572.5" cy="269.7" r="1.6" fill="#34c8ea"/><circle cx="569.5" cy="275.0" r="1.6" fill="#34c8ea"/><circle cx="568.3" cy="280.0" r="1.6" fill="#34c8ea"/><circle cx="568.3" cy="288.5" r="1.6" fill="#34c8ea"/><circle cx="569.2" cy="296.7" r="1.6" fill="#34c8ea"/><circle cx="571.5" cy="303.5" r="1.6" fill="#34c8ea"/><circle cx="575.0" cy="310.0" r="1.6" fill="#34c8ea"/><circle cx="580.0" cy="317.0" r="1.6" fill="#34c8ea"/><circle cx="586.7" cy="323.3" r="1.6" fill="#34c8ea"/><circle cx="586.7" cy="323.3" r="1.6" fill="#34c8ea"/><circle cx="585.8" cy="325.8" r="1.6" fill="#34c8ea"/><circle cx="583.0" cy="350.0" r="1.6" fill="#34c8ea"/><circle cx="581.3" cy="363.3" r="1.6" fill="#34c8ea"/><circle cx="582.5" cy="378.3" r="1.6" fill="#34c8ea"/><circle cx="585.0" cy="395.0" r="1.6" fill="#34c8ea"/><circle cx="588.3" cy="412.5" r="1.6" fill="#34c8ea"/><circle cx="590.8" cy="425.8" r="1.6" fill="#34c8ea"/><circle cx="590.8" cy="425.8" r="1.6" fill="#34c8ea"/><circle cx="574.5" cy="431.3" r="1.6" fill="#34c8ea"/><circle cx="558.3" cy="436.7" r="1.6" fill="#34c8ea"/><circle cx="540.8" cy="440.8" r="1.6" fill="#34c8ea"/><circle cx="526.0" cy="441.5" r="1.6" fill="#34c8ea"/><circle cx="511.7" cy="441.7" r="1.6" fill="#34c8ea"/><circle cx="512.5" cy="269.9" r="1.2" fill="#3d8fe0"/><circle cx="519.0" cy="267.4" r="1.2" fill="#3d8fe0"/><circle cx="525.2" cy="263.4" r="1.2" fill="#3d8fe0"/><circle cx="530.7" cy="258.7" r="1.2" fill="#3d8fe0"/><circle cx="535.2" cy="253.6" r="1.2" fill="#3d8fe0"/><circle cx="538.7" cy="249.0" r="1.2" fill="#3d8fe0"/><circle cx="538.7" cy="249.0" r="1.2" fill="#3d8fe0"/><circle cx="557.3" cy="257.7" r="1.2" fill="#3d8fe0"/><circle cx="576.0" cy="266.3" r="1.2" fill="#3d8fe0"/><circle cx="576.0" cy="266.3" r="1.2" fill="#3d8fe0"/><circle cx="573.1" cy="273.4" r="1.2" fill="#3d8fe0"/><circle cx="572.0" cy="280.7" r="1.2" fill="#3d8fe0"/><circle cx="572.2" cy="289.1" r="1.2" fill="#3d8fe0"/><circle cx="573.5" cy="297.0" r="1.2" fill="#3d8fe0"/><circle cx="576.5" cy="303.9" r="1.2" fill="#3d8fe0"/><circle cx="581.0" cy="310.0" r="1.2" fill="#3d8fe0"/><circle cx="587.6" cy="316.2" r="1.2" fill="#3d8fe0"/><circle cx="596.0" cy="321.3" r="1.2" fill="#3d8fe0"/><circle cx="596.0" cy="321.3" r="1.2" fill="#3d8fe0"/><circle cx="595.0" cy="325.8" r="1.2" fill="#3d8fe0"/><circle cx="591.8" cy="350.0" r="1.2" fill="#3d8fe0"/><circle cx="590.3" cy="364.7" r="1.2" fill="#3d8fe0"/><circle cx="591.2" cy="380.3" r="1.2" fill="#3d8fe0"/><circle cx="593.6" cy="397.8" r="1.2" fill="#3d8fe0"/><circle cx="597.0" cy="416.2" r="1.2" fill="#3d8fe0"/><circle cx="599.8" cy="430.2" r="1.2" fill="#3d8fe0"/><circle cx="599.8" cy="430.2" r="1.2" fill="#3d8fe0"/><circle cx="580.7" cy="436.1" r="1.2" fill="#3d8fe0"/><circle cx="562.6" cy="441.6" r="1.2" fill="#3d8fe0"/><circle cx="543.8" cy="446.2" r="1.2" fill="#3d8fe0"/><circle cx="527.6" cy="446.2" r="1.2" fill="#3d8fe0"/><circle cx="511.7" cy="446.2" r="1.2" fill="#3d8fe0"/><circle cx="512.5" cy="268.0" r="1.2" fill="#b4dc6c"/><circle cx="519.0" cy="265.6" r="1.2" fill="#b4dc6c"/><circle cx="525.3" cy="261.6" r="1.2" fill="#b4dc6c"/><circle cx="530.8" cy="256.8" r="1.2" fill="#b4dc6c"/><circle cx="535.3" cy="251.4" r="1.2" fill="#b4dc6c"/><circle cx="538.8" cy="246.3" r="1.2" fill="#b4dc6c"/><circle cx="538.8" cy="246.3" r="1.2" fill="#b4dc6c"/><circle cx="558.2" cy="255.5" r="1.2" fill="#b4dc6c"/><circle cx="577.8" cy="264.7" r="1.2" fill="#b4dc6c"/><circle cx="577.8" cy="264.7" r="1.2" fill="#b4dc6c"/><circle cx="574.9" cy="272.6" r="1.2" fill="#b4dc6c"/><circle cx="573.8" cy="281.0" r="1.2" fill="#b4dc6c"/><circle cx="574.1" cy="289.4" r="1.2" fill="#b4dc6c"/><circle cx="575.7" cy="297.2" r="1.2" fill="#b4dc6c"/><circle cx="579.0" cy="304.1" r="1.2" fill="#b4dc6c"/><circle cx="584.0" cy="310.0" r="1.2" fill="#b4dc6c"/><circle cx="591.4" cy="315.8" r="1.2" fill="#b4dc6c"/><circle cx="600.7" cy="320.3" r="1.2" fill="#b4dc6c"/><circle cx="600.7" cy="320.3" r="1.2" fill="#b4dc6c"/><circle cx="599.5" cy="325.8" r="1.2" fill="#b4dc6c"/><circle cx="596.2" cy="350.0" r="1.2" fill="#b4dc6c"/><circle cx="594.7" cy="365.3" r="1.2" fill="#b4dc6c"/><circle cx="595.5" cy="381.3" r="1.2" fill="#b4dc6c"/><circle cx="597.9" cy="399.2" r="1.2" fill="#b4dc6c"/><circle cx="601.3" cy="418.0" r="1.2" fill="#b4dc6c"/><circle cx="604.3" cy="432.3" r="1.2" fill="#b4dc6c"/><circle cx="604.3" cy="432.3" r="1.2" fill="#b4dc6c"/><circle cx="583.8" cy="438.5" r="1.2" fill="#b4dc6c"/><circle cx="564.7" cy="444.1" r="1.2" fill="#b4dc6c"/><circle cx="545.3" cy="448.8" r="1.2" fill="#b4dc6c"/><circle cx="528.4" cy="448.6" r="1.2" fill="#b4dc6c"/><circle cx="511.7" cy="448.5" r="1.2" fill="#b4dc6c"/><circle cx="512.5" cy="271.8" r="1.2" fill="#58d68c"/><circle cx="519.0" cy="269.2" r="1.2" fill="#58d68c"/><circle cx="525.1" cy="265.2" r="1.2" fill="#58d68c"/><circle cx="530.6" cy="260.6" r="1.2" fill="#58d68c"/><circle cx="535.1" cy="255.8" r="1.2" fill="#58d68c"/><circle cx="538.5" cy="251.8" r="1.2" fill="#58d68c"/><circle cx="538.5" cy="251.8" r="1.2" fill="#58d68c"/><circle cx="556.4" cy="260.0" r="1.2" fill="#58d68c"/><circle cx="574.3" cy="268.0" r="1.2" fill="#58d68c"/><circle cx="574.3" cy="268.0" r="1.2" fill="#58d68c"/><circle cx="571.3" cy="274.2" r="1.2" fill="#58d68c"/><circle cx="570.1" cy="280.3" r="1.2" fill="#58d68c"/><circle cx="570.2" cy="288.8" r="1.2" fill="#58d68c"/><circle cx="571.4" cy="296.9" r="1.2" fill="#58d68c"/><circle cx="574.0" cy="303.7" r="1.2" fill="#58d68c"/><circle cx="578.0" cy="310.0" r="1.2" fill="#58d68c"/><circle cx="583.8" cy="316.6" r="1.2" fill="#58d68c"/><circle cx="591.4" cy="322.3" r="1.2" fill="#58d68c"/><circle cx="591.4" cy="322.3" r="1.2" fill="#58d68c"/><circle cx="590.4" cy="325.8" r="1.2" fill="#58d68c"/><circle cx="587.4" cy="350.0" r="1.2" fill="#58d68c"/><circle cx="585.8" cy="364.0" r="1.2" fill="#58d68c"/><circle cx="586.8" cy="379.3" r="1.2" fill="#58d68c"/><circle cx="589.3" cy="396.4" r="1.2" fill="#58d68c"/><circle cx="592.6" cy="414.3" r="1.2" fill="#58d68c"/><circle cx="595.3" cy="428.0" r="1.2" fill="#58d68c"/><circle cx="595.3" cy="428.0" r="1.2" fill="#58d68c"/><circle cx="577.6" cy="433.7" r="1.2" fill="#58d68c"/><circle cx="560.4" cy="439.2" r="1.2" fill="#58d68c"/><circle cx="542.3" cy="443.5" r="1.2" fill="#58d68c"/><circle cx="526.8" cy="443.9" r="1.2" fill="#58d68c"/><circle cx="511.7" cy="444.0" r="1.2" fill="#58d68c"/><circle cx="512.5" cy="264.2" r="2.0" fill="#e272e2"/><circle cx="519.0" cy="262.0" r="1.4" fill="#e272e2"/><circle cx="525.5" cy="258.0" r="1.4" fill="#e272e2"/><circle cx="531.0" cy="253.0" r="1.4" fill="#e272e2"/><circle cx="535.5" cy="247.0" r="1.4" fill="#e272e2"/><circle cx="539.2" cy="240.8" r="2.0" fill="#e272e2"/><circle cx="539.2" cy="240.8" r="2.0" fill="#e272e2"/><circle cx="560.0" cy="251.0" r="1.4" fill="#e272e2"/><circle cx="581.3" cy="261.3" r="2.0" fill="#e272e2"/><circle cx="581.3" cy="261.3" r="2.0" fill="#e272e2"/><circle cx="578.5" cy="271.0" r="1.4" fill="#e272e2"/><circle cx="577.5" cy="281.7" r="1.4" fill="#e272e2"/><circle cx="578.0" cy="290.0" r="1.4" fill="#e272e2"/><circle cx="580.0" cy="297.5" r="1.4" fill="#e272e2"/><circle cx="584.0" cy="304.5" r="1.4" fill="#e272e2"/><circle cx="590.0" cy="310.0" r="1.4" fill="#e272e2"/><circle cx="599.0" cy="315.0" r="1.4" fill="#e272e2"/><circle cx="610.0" cy="318.3" r="2.0" fill="#e272e2"/><circle cx="610.0" cy="318.3" r="2.0" fill="#e272e2"/><circle cx="608.7" cy="325.8" r="1.4" fill="#e272e2"/><circle cx="605.0" cy="350.0" r="1.4" fill="#e272e2"/><circle cx="603.7" cy="366.7" r="1.4" fill="#e272e2"/><circle cx="604.2" cy="383.3" r="1.4" fill="#e272e2"/><circle cx="606.5" cy="402.0" r="1.4" fill="#e272e2"/><circle cx="610.0" cy="421.7" r="1.4" fill="#e272e2"/><circle cx="613.3" cy="436.7" r="2.0" fill="#e272e2"/><circle cx="613.3" cy="436.7" r="2.0" fill="#e272e2"/><circle cx="590.0" cy="443.3" r="1.4" fill="#e272e2"/><circle cx="569.0" cy="449.0" r="1.4" fill="#e272e2"/><circle cx="548.3" cy="454.2" r="1.4" fill="#e272e2"/><circle cx="530.0" cy="453.3" r="1.4" fill="#e272e2"/><circle cx="511.7" cy="453.0" r="2.0" fill="#e272e2"/><circle cx="501.300" cy="271.300" r="2.400" fill="#3fa6e6"/><circle cx="501.300" cy="447.200" r="2.400" fill="#3fa6e6"/><path d="M515.800 291.8 V302.3" stroke="#3ccfc4" stroke-width="2.600" stroke-linecap="round"/><circle cx="515.800" cy="291.8" r="1.500" fill="#e272e2"/><circle cx="515.800" cy="297.1" r="1.200" fill="#58d68c"/><path d="M515.800 321.0 V332.3" stroke="#3ccfc4" stroke-width="2.600" stroke-linecap="round"/><circle cx="515.800" cy="321.0" r="1.500" fill="#e272e2"/><circle cx="515.800" cy="326.6" r="1.200" fill="#58d68c"/><path d="M515.800 351.0 V362.3" stroke="#3ccfc4" stroke-width="2.600" stroke-linecap="round"/><circle cx="515.800" cy="351.0" r="1.500" fill="#e272e2"/><circle cx="515.800" cy="356.6" r="1.200" fill="#58d68c"/><path d="M515.800 381.0 V391.5" stroke="#3ccfc4" stroke-width="2.600" stroke-linecap="round"/><circle cx="515.800" cy="381.0" r="1.500" fill="#e272e2"/><circle cx="515.800" cy="386.2" r="1.200" fill="#58d68c"/><path d="M515.800 409.3 V421.5" stroke="#3ccfc4" stroke-width="2.600" stroke-linecap="round"/><circle cx="515.800" cy="409.3" r="1.500" fill="#e272e2"/><circle cx="515.800" cy="415.4" r="1.200" fill="#58d68c"/><path d="M554.200 293.300 V405.800 M554.200 405.800 l2.300 -6.500" stroke="#4a9acb" stroke-width="1.200" fill="none"/><path d="M696.0 360.6 C700.3 360.9 711.2 361.2 721.5 362.0 C731.9 362.8 742.3 364.0 758.1 365.3 C774.0 366.7 806.7 369.3 816.5 370.1 L816.5 370.1 C816.5 376.7 816.7 396.5 816.7 409.7 C816.7 423.0 816.5 442.8 816.5 449.4 L816.5 449.4 C807.3 450.3 776.9 453.6 761.7 455.1 C746.4 456.5 736.4 457.1 725.1 458.1 C713.7 459.2 698.9 460.7 693.7 461.2 L693.7 461.2 C693.4 460.2 692.9 457.0 692.0 455.1 C691.2 453.1 690.2 451.4 688.5 449.4 C686.8 447.4 684.1 445.3 681.9 443.3 C679.6 441.2 677.0 439.1 674.8 436.9 C672.5 434.6 670.3 432.4 668.4 429.8 C666.6 427.2 664.8 424.3 663.7 421.5 C662.5 418.8 662.0 415.8 661.6 413.3 C661.2 410.7 661.2 408.5 661.3 406.2 C661.5 403.8 661.7 401.5 662.5 399.1 C663.3 396.7 664.7 394.2 666.0 392.0 C667.4 389.9 669.0 388.0 670.8 386.1 C672.5 384.3 674.6 382.6 676.7 380.9 C678.8 379.3 681.0 377.9 683.3 376.2 C685.6 374.5 688.5 372.5 690.4 370.8 C692.2 369.1 693.4 367.7 694.4 366.0 C695.3 364.4 695.8 361.5 696.0 360.6z" fill="#3a3b3c"/><path d="M694.4 345.5 C698.9 346.4 710.9 348.8 721.5 350.7 C732.2 352.6 741.9 354.7 758.1 357.1 C774.4 359.4 808.9 363.6 819.1 364.9" fill="none" stroke="#e272e2" stroke-width="1.1" stroke-opacity="0.95"/><path d="M819.1 364.9 C819.2 372.3 819.8 394.9 819.8 409.7 C819.8 424.6 819.2 446.7 819.1 454.1" fill="none" stroke="#e272e2" stroke-width="1.1" stroke-opacity="0.95"/><path d="M819.1 454.1 C809.5 455.6 777.3 460.3 761.7 462.9 C746.0 465.4 736.7 467.1 725.1 469.2 C713.5 471.4 697.5 474.7 692.0 475.8" fill="none" stroke="#e272e2" stroke-width="1.1" stroke-opacity="0.95"/><path d="M692.0 475.8 C691.6 474.2 690.8 468.9 689.7 465.9 C688.5 463.0 686.9 460.4 684.9 458.1 C683.0 455.9 680.3 454.2 677.9 452.2 C675.4 450.3 672.8 448.7 670.1 446.3 C667.3 444.0 664.0 441.4 661.3 438.1 C658.7 434.7 656.2 430.2 654.2 426.3 C652.3 422.3 650.4 417.8 649.5 414.5 C648.6 411.1 648.7 409.3 648.8 406.2 C648.9 403.0 649.1 398.5 650.2 395.6 C651.3 392.6 653.5 390.6 655.4 388.5 C657.4 386.3 659.5 384.7 662.0 382.6 C664.6 380.4 667.9 377.5 670.8 375.5 C673.6 373.5 676.3 372.5 679.0 370.8 C681.8 369.0 685.1 367.4 687.3 364.9 C689.5 362.3 690.8 358.6 692.0 355.4 C693.2 352.2 694.0 347.2 694.4 345.5" fill="none" stroke="#e272e2" stroke-width="1.1" stroke-opacity="0.95"/><path d="M694.7 348.5 C699.2 349.3 711.0 351.3 721.5 353.0 C732.1 354.7 742.0 356.6 758.1 358.7 C774.3 360.9 808.5 364.7 818.5 365.9" fill="none" stroke="#c9c9b8" stroke-width="0.9" stroke-opacity="0.8"/><path d="M818.5 365.9 C818.6 373.2 819.1 395.2 819.1 409.7 C819.1 424.3 818.6 445.9 818.5 453.2" fill="none" stroke="#c9c9b8" stroke-width="0.9" stroke-opacity="0.8"/><path d="M818.5 453.2 C809.1 454.5 777.3 459.0 761.7 461.3 C746.1 463.6 736.6 465.1 725.1 467.0 C713.5 468.9 697.8 471.9 692.3 472.9" fill="none" stroke="#c9c9b8" stroke-width="0.9" stroke-opacity="0.8"/><path d="M692.3 472.9 C692.0 471.4 691.2 466.5 690.1 463.8 C689.0 461.0 687.6 458.6 685.6 456.4 C683.7 454.2 681.1 452.4 678.7 450.4 C676.2 448.4 673.7 446.8 671.0 444.4 C668.4 442.1 665.2 439.6 662.7 436.4 C660.3 433.2 657.9 429.0 656.1 425.3 C654.3 421.6 652.7 417.4 651.9 414.2 C651.1 411.0 651.2 409.2 651.3 406.2 C651.4 403.2 651.6 399.1 652.7 396.3 C653.7 393.4 655.7 391.3 657.5 389.2 C659.4 387.0 661.4 385.4 663.8 383.3 C666.2 381.2 669.3 378.5 671.9 376.6 C674.6 374.7 677.2 373.6 679.9 371.9 C682.5 370.1 685.8 368.4 687.9 366.0 C690.0 363.7 691.4 360.5 692.5 357.5 C693.6 354.6 694.3 350.0 694.7 348.5" fill="none" stroke="#c9c9b8" stroke-width="0.9" stroke-opacity="0.8"/><path d="M695.0 351.5 C699.5 352.2 711.0 353.8 721.5 355.2 C732.1 356.7 742.1 358.4 758.1 360.4 C774.2 362.3 808.0 365.8 818.0 366.9" fill="none" stroke="#b4dc6c" stroke-width="1.0" stroke-opacity="0.9"/><path d="M818.0 366.9 C818.1 374.1 818.5 395.5 818.5 409.7 C818.5 423.9 818.1 445.1 818.0 452.2" fill="none" stroke="#b4dc6c" stroke-width="1.0" stroke-opacity="0.9"/><path d="M818.0 452.2 C808.6 453.5 777.2 457.6 761.7 459.7 C746.2 461.8 736.6 463.1 725.1 464.8 C713.6 466.5 698.1 469.1 692.7 470.0" fill="none" stroke="#b4dc6c" stroke-width="1.0" stroke-opacity="0.9"/><path d="M692.7 470.0 C692.3 468.6 691.7 464.1 690.6 461.6 C689.5 459.0 688.2 456.8 686.4 454.6 C684.5 452.5 681.9 450.7 679.5 448.6 C677.1 446.6 674.5 444.9 671.9 442.6 C669.4 440.2 666.5 437.8 664.2 434.8 C661.8 431.7 659.7 427.8 658.0 424.4 C656.4 420.9 655.0 417.0 654.3 414.0 C653.6 410.9 653.7 409.0 653.8 406.2 C653.9 403.4 654.2 399.7 655.1 397.0 C656.1 394.3 657.9 392.1 659.7 389.9 C661.4 387.7 663.3 386.0 665.5 384.0 C667.8 382.0 670.6 379.5 673.1 377.7 C675.7 375.8 678.2 374.7 680.7 372.9 C683.3 371.2 686.5 369.4 688.5 367.2 C690.6 365.0 691.9 362.3 693.0 359.7 C694.0 357.1 694.7 352.9 695.0 351.5" fill="none" stroke="#b4dc6c" stroke-width="1.0" stroke-opacity="0.9"/><path d="M695.4 354.6 C699.7 355.1 711.1 356.3 721.5 357.5 C732.0 358.7 742.1 360.3 758.1 362.0 C774.1 363.8 807.6 367.0 817.5 368.0" fill="none" stroke="#3d8fe0" stroke-width="1.2" stroke-opacity="0.95"/><path d="M817.5 368.0 C817.6 374.9 817.9 395.8 817.9 409.7 C817.9 423.6 817.6 444.4 817.5 451.3" fill="none" stroke="#3d8fe0" stroke-width="1.2" stroke-opacity="0.95"/><path d="M817.5 451.3 C808.2 452.4 777.1 456.3 761.7 458.2 C746.3 460.1 736.5 461.1 725.1 462.6 C713.6 464.1 698.4 466.3 693.0 467.1" fill="none" stroke="#3d8fe0" stroke-width="1.2" stroke-opacity="0.95"/><path d="M693.0 467.1 C692.7 465.8 692.1 461.8 691.1 459.4 C690.1 457.0 688.9 455.0 687.1 452.9 C685.3 450.8 682.6 448.9 680.3 446.8 C677.9 444.8 675.3 443.0 672.9 440.7 C670.4 438.4 667.7 436.0 665.6 433.1 C663.4 430.2 661.4 426.7 659.9 423.4 C658.4 420.2 657.3 416.6 656.7 413.7 C656.1 410.9 656.2 408.9 656.3 406.2 C656.5 403.5 656.7 400.3 657.6 397.7 C658.5 395.1 660.2 392.8 661.8 390.6 C663.4 388.4 665.2 386.7 667.3 384.7 C669.4 382.7 671.9 380.5 674.3 378.7 C676.7 377.0 679.1 375.7 681.6 374.0 C684.1 372.3 687.2 370.4 689.1 368.4 C691.1 366.4 692.4 364.1 693.4 361.8 C694.5 359.5 695.0 355.8 695.4 354.6" fill="none" stroke="#3d8fe0" stroke-width="1.2" stroke-opacity="0.95"/><path d="M695.7 357.6 C700.0 358.0 711.1 358.7 721.5 359.8 C731.9 360.8 742.2 362.1 758.1 363.7 C774.0 365.2 807.2 368.1 817.0 369.0" fill="none" stroke="#58d68c" stroke-width="1.2" stroke-opacity="0.95"/><path d="M817.0 369.0 C817.0 375.8 817.3 396.2 817.3 409.7 C817.3 423.3 817.0 443.6 817.0 450.3" fill="none" stroke="#58d68c" stroke-width="1.2" stroke-opacity="0.95"/><path d="M817.0 450.3 C807.8 451.4 777.0 455.0 761.7 456.6 C746.4 458.3 736.5 459.1 725.1 460.4 C713.7 461.6 698.6 463.5 693.3 464.1" fill="none" stroke="#58d68c" stroke-width="1.2" stroke-opacity="0.95"/><path d="M693.3 464.1 C693.0 463.0 692.5 459.4 691.5 457.2 C690.6 455.1 689.5 453.2 687.8 451.1 C686.0 449.1 683.4 447.1 681.1 445.1 C678.7 443.0 676.2 441.0 673.8 438.8 C671.5 436.5 669.0 434.2 667.0 431.5 C665.0 428.7 663.1 425.5 661.8 422.5 C660.5 419.5 659.6 416.2 659.1 413.5 C658.7 410.8 658.7 408.7 658.8 406.2 C659.0 403.7 659.2 400.9 660.0 398.4 C660.9 395.9 662.4 393.5 663.9 391.3 C665.4 389.1 667.1 387.3 669.0 385.4 C670.9 383.5 673.3 381.6 675.5 379.8 C677.7 378.1 680.1 376.8 682.4 375.1 C684.8 373.4 687.8 371.5 689.8 369.6 C691.7 367.7 692.9 365.9 693.9 363.9 C694.9 361.9 695.4 358.6 695.7 357.6" fill="none" stroke="#58d68c" stroke-width="1.2" stroke-opacity="0.95"/><path d="M696.0 360.6 C700.3 360.9 711.2 361.2 721.5 362.0 C731.9 362.8 742.3 364.0 758.1 365.3 C774.0 366.7 806.7 369.3 816.5 370.1" fill="none" stroke="#34c8ea" stroke-width="1.7" stroke-opacity="1"/><path d="M816.5 370.1 C816.5 376.7 816.7 396.5 816.7 409.7 C816.7 423.0 816.5 442.8 816.5 449.4" fill="none" stroke="#34c8ea" stroke-width="1.7" stroke-opacity="1"/><path d="M816.5 449.4 C807.3 450.3 776.9 453.6 761.7 455.1 C746.4 456.5 736.4 457.1 725.1 458.1 C713.7 459.2 698.9 460.7 693.7 461.2" fill="none" stroke="#34c8ea" stroke-width="1.7" stroke-opacity="1"/><path d="M693.7 461.2 C693.4 460.2 692.9 457.0 692.0 455.1 C691.2 453.1 690.2 451.4 688.5 449.4 C686.8 447.4 684.1 445.3 681.9 443.3 C679.6 441.2 677.0 439.1 674.8 436.9 C672.5 434.6 670.3 432.4 668.4 429.8 C666.6 427.2 664.8 424.3 663.7 421.5 C662.5 418.8 662.0 415.8 661.6 413.3 C661.2 410.7 661.2 408.5 661.3 406.2 C661.5 403.8 661.7 401.5 662.5 399.1 C663.3 396.7 664.7 394.2 666.0 392.0 C667.4 389.9 669.0 388.0 670.8 386.1 C672.5 384.3 674.6 382.6 676.7 380.9 C678.8 379.3 681.0 377.9 683.3 376.2 C685.6 374.5 688.5 372.5 690.4 370.8 C692.2 369.1 693.4 367.7 694.4 366.0 C695.3 364.4 695.8 361.5 696.0 360.6" fill="none" stroke="#34c8ea" stroke-width="1.7" stroke-opacity="1"/><path d="M695.0 350.8 L696.0 360.6" stroke="#5fe0b8" stroke-width=".9" stroke-opacity=".75"/><path d="M758.1 360.0 L758.1 365.3" stroke="#5fe0b8" stroke-width=".9" stroke-opacity=".75"/><path d="M818.1 366.7 L816.5 370.1" stroke="#5fe0b8" stroke-width=".9" stroke-opacity=".75"/><path d="M818.1 452.5 L816.5 449.4" stroke="#5fe0b8" stroke-width=".9" stroke-opacity=".75"/><path d="M818.1 452.5 L816.5 449.4" stroke="#5fe0b8" stroke-width=".9" stroke-opacity=".75"/><path d="M725.1 465.3 L725.1 458.1" stroke="#5fe0b8" stroke-width=".9" stroke-opacity=".75"/><path d="M692.6 470.7 L693.7 461.2" stroke="#5fe0b8" stroke-width=".9" stroke-opacity=".75"/><path d="M686.2 455.1 L688.5 449.4" stroke="#5fe0b8" stroke-width=".9" stroke-opacity=".75"/><path d="M671.7 443.0 L674.8 436.9" stroke="#5fe0b8" stroke-width=".9" stroke-opacity=".75"/><path d="M657.5 424.6 L663.7 421.5" stroke="#5fe0b8" stroke-width=".9" stroke-opacity=".75"/><path d="M653.2 406.2 L661.3 406.2" stroke="#5fe0b8" stroke-width=".9" stroke-opacity=".75"/><path d="M659.1 389.7 L666.0 392.0" stroke="#5fe0b8" stroke-width=".9" stroke-opacity=".75"/><path d="M672.8 377.4 L676.7 380.9" stroke="#5fe0b8" stroke-width=".9" stroke-opacity=".75"/><path d="M688.4 366.9 L690.4 370.8" stroke="#5fe0b8" stroke-width=".9" stroke-opacity=".75"/><path d="M695.0 350.8 L696.0 360.6" stroke="#5fe0b8" stroke-width=".9" stroke-opacity=".75"/><circle cx="696.0" cy="360.6" r="1.6" fill="#34c8ea"/><circle cx="721.5" cy="362.0" r="1.6" fill="#34c8ea"/><circle cx="758.1" cy="365.3" r="1.6" fill="#34c8ea"/><circle cx="816.5" cy="370.1" r="1.6" fill="#34c8ea"/><circle cx="816.5" cy="370.1" r="1.6" fill="#34c8ea"/><circle cx="816.7" cy="409.7" r="1.6" fill="#34c8ea"/><circle cx="816.5" cy="449.4" r="1.6" fill="#34c8ea"/><circle cx="816.5" cy="449.4" r="1.6" fill="#34c8ea"/><circle cx="761.7" cy="455.1" r="1.6" fill="#34c8ea"/><circle cx="725.1" cy="458.1" r="1.6" fill="#34c8ea"/><circle cx="693.7" cy="461.2" r="1.6" fill="#34c8ea"/><circle cx="693.7" cy="461.2" r="1.6" fill="#34c8ea"/><circle cx="692.0" cy="455.1" r="1.6" fill="#34c8ea"/><circle cx="688.5" cy="449.4" r="1.6" fill="#34c8ea"/><circle cx="681.9" cy="443.3" r="1.6" fill="#34c8ea"/><circle cx="674.8" cy="436.9" r="1.6" fill="#34c8ea"/><circle cx="668.4" cy="429.8" r="1.6" fill="#34c8ea"/><circle cx="663.7" cy="421.5" r="1.6" fill="#34c8ea"/><circle cx="661.6" cy="413.3" r="1.6" fill="#34c8ea"/><circle cx="661.3" cy="406.2" r="1.6" fill="#34c8ea"/><circle cx="662.5" cy="399.1" r="1.6" fill="#34c8ea"/><circle cx="666.0" cy="392.0" r="1.6" fill="#34c8ea"/><circle cx="670.8" cy="386.1" r="1.6" fill="#34c8ea"/><circle cx="676.7" cy="380.9" r="1.6" fill="#34c8ea"/><circle cx="683.3" cy="376.2" r="1.6" fill="#34c8ea"/><circle cx="690.4" cy="370.8" r="1.6" fill="#34c8ea"/><circle cx="694.4" cy="366.0" r="1.6" fill="#34c8ea"/><circle cx="696.0" cy="360.6" r="1.6" fill="#34c8ea"/><circle cx="695.4" cy="354.6" r="1.2" fill="#3d8fe0"/><circle cx="721.5" cy="357.5" r="1.2" fill="#3d8fe0"/><circle cx="758.1" cy="362.0" r="1.2" fill="#3d8fe0"/><circle cx="817.5" cy="368.0" r="1.2" fill="#3d8fe0"/><circle cx="817.5" cy="368.0" r="1.2" fill="#3d8fe0"/><circle cx="817.9" cy="409.7" r="1.2" fill="#3d8fe0"/><circle cx="817.5" cy="451.3" r="1.2" fill="#3d8fe0"/><circle cx="817.5" cy="451.3" r="1.2" fill="#3d8fe0"/><circle cx="761.7" cy="458.2" r="1.2" fill="#3d8fe0"/><circle cx="725.1" cy="462.6" r="1.2" fill="#3d8fe0"/><circle cx="693.0" cy="467.1" r="1.2" fill="#3d8fe0"/><circle cx="693.0" cy="467.1" r="1.2" fill="#3d8fe0"/><circle cx="691.1" cy="459.4" r="1.2" fill="#3d8fe0"/><circle cx="687.1" cy="452.9" r="1.2" fill="#3d8fe0"/><circle cx="680.3" cy="446.8" r="1.2" fill="#3d8fe0"/><circle cx="672.9" cy="440.7" r="1.2" fill="#3d8fe0"/><circle cx="665.6" cy="433.1" r="1.2" fill="#3d8fe0"/><circle cx="659.9" cy="423.4" r="1.2" fill="#3d8fe0"/><circle cx="656.7" cy="413.7" r="1.2" fill="#3d8fe0"/><circle cx="656.3" cy="406.2" r="1.2" fill="#3d8fe0"/><circle cx="657.6" cy="397.7" r="1.2" fill="#3d8fe0"/><circle cx="661.8" cy="390.6" r="1.2" fill="#3d8fe0"/><circle cx="667.3" cy="384.7" r="1.2" fill="#3d8fe0"/><circle cx="674.3" cy="378.7" r="1.2" fill="#3d8fe0"/><circle cx="681.6" cy="374.0" r="1.2" fill="#3d8fe0"/><circle cx="689.1" cy="368.4" r="1.2" fill="#3d8fe0"/><circle cx="693.4" cy="361.8" r="1.2" fill="#3d8fe0"/><circle cx="695.4" cy="354.6" r="1.2" fill="#3d8fe0"/><circle cx="695.0" cy="351.5" r="1.2" fill="#b4dc6c"/><circle cx="721.5" cy="355.2" r="1.2" fill="#b4dc6c"/><circle cx="758.1" cy="360.4" r="1.2" fill="#b4dc6c"/><circle cx="818.0" cy="366.9" r="1.2" fill="#b4dc6c"/><circle cx="818.0" cy="366.9" r="1.2" fill="#b4dc6c"/><circle cx="818.5" cy="409.7" r="1.2" fill="#b4dc6c"/><circle cx="818.0" cy="452.2" r="1.2" fill="#b4dc6c"/><circle cx="818.0" cy="452.2" r="1.2" fill="#b4dc6c"/><circle cx="761.7" cy="459.7" r="1.2" fill="#b4dc6c"/><circle cx="725.1" cy="464.8" r="1.2" fill="#b4dc6c"/><circle cx="692.7" cy="470.0" r="1.2" fill="#b4dc6c"/><circle cx="692.7" cy="470.0" r="1.2" fill="#b4dc6c"/><circle cx="690.6" cy="461.6" r="1.2" fill="#b4dc6c"/><circle cx="686.4" cy="454.6" r="1.2" fill="#b4dc6c"/><circle cx="679.5" cy="448.6" r="1.2" fill="#b4dc6c"/><circle cx="671.9" cy="442.6" r="1.2" fill="#b4dc6c"/><circle cx="664.2" cy="434.8" r="1.2" fill="#b4dc6c"/><circle cx="658.0" cy="424.4" r="1.2" fill="#b4dc6c"/><circle cx="654.3" cy="414.0" r="1.2" fill="#b4dc6c"/><circle cx="653.8" cy="406.2" r="1.2" fill="#b4dc6c"/><circle cx="655.1" cy="397.0" r="1.2" fill="#b4dc6c"/><circle cx="659.7" cy="389.9" r="1.2" fill="#b4dc6c"/><circle cx="665.5" cy="384.0" r="1.2" fill="#b4dc6c"/><circle cx="673.1" cy="377.7" r="1.2" fill="#b4dc6c"/><circle cx="680.7" cy="372.9" r="1.2" fill="#b4dc6c"/><circle cx="688.5" cy="367.2" r="1.2" fill="#b4dc6c"/><circle cx="693.0" cy="359.7" r="1.2" fill="#b4dc6c"/><circle cx="695.0" cy="351.5" r="1.2" fill="#b4dc6c"/><circle cx="695.7" cy="357.6" r="1.2" fill="#58d68c"/><circle cx="721.5" cy="359.8" r="1.2" fill="#58d68c"/><circle cx="758.1" cy="363.7" r="1.2" fill="#58d68c"/><circle cx="817.0" cy="369.0" r="1.2" fill="#58d68c"/><circle cx="817.0" cy="369.0" r="1.2" fill="#58d68c"/><circle cx="817.3" cy="409.7" r="1.2" fill="#58d68c"/><circle cx="817.0" cy="450.3" r="1.2" fill="#58d68c"/><circle cx="817.0" cy="450.3" r="1.2" fill="#58d68c"/><circle cx="761.7" cy="456.6" r="1.2" fill="#58d68c"/><circle cx="725.1" cy="460.4" r="1.2" fill="#58d68c"/><circle cx="693.3" cy="464.1" r="1.2" fill="#58d68c"/><circle cx="693.3" cy="464.1" r="1.2" fill="#58d68c"/><circle cx="691.5" cy="457.2" r="1.2" fill="#58d68c"/><circle cx="687.8" cy="451.1" r="1.2" fill="#58d68c"/><circle cx="681.1" cy="445.1" r="1.2" fill="#58d68c"/><circle cx="673.8" cy="438.8" r="1.2" fill="#58d68c"/><circle cx="667.0" cy="431.5" r="1.2" fill="#58d68c"/><circle cx="661.8" cy="422.5" r="1.2" fill="#58d68c"/><circle cx="659.1" cy="413.5" r="1.2" fill="#58d68c"/><circle cx="658.8" cy="406.2" r="1.2" fill="#58d68c"/><circle cx="660.0" cy="398.4" r="1.2" fill="#58d68c"/><circle cx="663.9" cy="391.3" r="1.2" fill="#58d68c"/><circle cx="669.0" cy="385.4" r="1.2" fill="#58d68c"/><circle cx="675.5" cy="379.8" r="1.2" fill="#58d68c"/><circle cx="682.4" cy="375.1" r="1.2" fill="#58d68c"/><circle cx="689.8" cy="369.6" r="1.2" fill="#58d68c"/><circle cx="693.9" cy="363.9" r="1.2" fill="#58d68c"/><circle cx="695.7" cy="357.6" r="1.2" fill="#58d68c"/><circle cx="694.4" cy="345.5" r="2.0" fill="#e272e2"/><circle cx="721.5" cy="350.7" r="1.4" fill="#e272e2"/><circle cx="758.1" cy="357.1" r="1.4" fill="#e272e2"/><circle cx="819.1" cy="364.9" r="2.0" fill="#e272e2"/><circle cx="819.1" cy="364.9" r="2.0" fill="#e272e2"/><circle cx="819.8" cy="409.7" r="1.4" fill="#e272e2"/><circle cx="819.1" cy="454.1" r="2.0" fill="#e272e2"/><circle cx="819.1" cy="454.1" r="2.0" fill="#e272e2"/><circle cx="761.7" cy="462.9" r="1.4" fill="#e272e2"/><circle cx="725.1" cy="469.2" r="1.4" fill="#e272e2"/><circle cx="692.0" cy="475.8" r="2.0" fill="#e272e2"/><circle cx="692.0" cy="475.8" r="2.0" fill="#e272e2"/><circle cx="689.7" cy="465.9" r="1.4" fill="#e272e2"/><circle cx="684.9" cy="458.1" r="1.4" fill="#e272e2"/><circle cx="677.9" cy="452.2" r="1.4" fill="#e272e2"/><circle cx="670.1" cy="446.3" r="1.4" fill="#e272e2"/><circle cx="661.3" cy="438.1" r="1.4" fill="#e272e2"/><circle cx="654.2" cy="426.3" r="1.4" fill="#e272e2"/><circle cx="649.5" cy="414.5" r="1.4" fill="#e272e2"/><circle cx="648.8" cy="406.2" r="1.4" fill="#e272e2"/><circle cx="650.2" cy="395.6" r="1.4" fill="#e272e2"/><circle cx="655.4" cy="388.5" r="1.4" fill="#e272e2"/><circle cx="662.0" cy="382.6" r="1.4" fill="#e272e2"/><circle cx="670.8" cy="375.5" r="1.4" fill="#e272e2"/><circle cx="679.0" cy="370.8" r="1.4" fill="#e272e2"/><circle cx="687.3" cy="364.9" r="1.4" fill="#e272e2"/><circle cx="692.0" cy="355.4" r="1.4" fill="#e272e2"/><circle cx="694.4" cy="345.5" r="2.0" fill="#e272e2"/><path d="M819.5 366.0 V453.4" stroke="#6fb0d8" stroke-width="1" stroke-dasharray="2 1.500"/><path d="M795.2 386.1 H818.3" stroke="#7fe8c8" stroke-width="1.600"/><path d="M795.2 390.4 H818.3" stroke="#4fe0a0" stroke-width="2"/><circle cx="795.2" cy="386.1" r="2" fill="#e272e2"/><circle cx="795.2" cy="390.4" r="1.800" fill="#34c8ea"/><path d="M789.5 400.3 H818.3" stroke="#7fe8c8" stroke-width="1.600"/><path d="M789.5 404.1 H818.3" stroke="#4fe0a0" stroke-width="2"/><circle cx="789.5" cy="400.3" r="2" fill="#e272e2"/><circle cx="789.5" cy="404.1" r="1.800" fill="#34c8ea"/><circle cx="820.0" cy="367.2" r="1.700" fill="#34b8ea"/><circle cx="820.0" cy="370.8" r="1.700" fill="#34b8ea"/><circle cx="820.0" cy="384.9" r="1.700" fill="#34b8ea"/><circle cx="820.0" cy="389.7" r="1.700" fill="#34b8ea"/><circle cx="820.0" cy="395.6" r="1.700" fill="#34b8ea"/><circle cx="820.0" cy="401.5" r="1.700" fill="#34b8ea"/><circle cx="820.0" cy="405.0" r="1.700" fill="#34b8ea"/><circle cx="820.0" cy="409.7" r="1.700" fill="#34b8ea"/><circle cx="820.0" cy="420.4" r="1.700" fill="#34b8ea"/><circle cx="820.0" cy="431.0" r="1.700" fill="#34b8ea"/><circle cx="820.0" cy="449.9" r="1.700" fill="#34b8ea"/><circle cx="820.0" cy="453.4" r="1.700" fill="#34b8ea"/><circle cx="819.1" cy="364.9" r="2.200" fill="#e272e2"/><circle cx="819.1" cy="454.1" r="2.200" fill="#e272e2"/><path d="M691.5 409.3 H792.4 M792.4 409.3 l-6 -2.300" stroke="#5aa8d0" stroke-width="1.100" fill="none"/></svg>
<span class="t" style="left:330.9px;top:321.2px;font-size:10px;line-height:12.0px;color:#4fa3d4;transform:scaleX(0.945);">BACK1</span>
<span class="t" style="left:540.0px;top:328.0px;font-size:10px;line-height:12.0px;color:#4fa3d4;transform:scaleX(0.915);">FRONT</span>
<span class="t" style="left:721.500px;top:419.300px;font-size:10px;line-height:11.400px;color:#5aa8d0;transform-origin:50% 50%;transform:rotate(180deg) scaleX(0.98)">SLEEVE</span>
<div class="a" style="left:868.5px;top:100.0px;width:1.0px;height:388.0px;background:#6a6a6a;"></div>
<div class="a" style="left:869.5px;top:100.0px;width:2.5px;height:558.0px;background:#e6e6e6;"></div>
<div class="a" style="left:212.0px;top:487.5px;width:657.0px;height:171.0px;background:#ebebeb;"></div>
<div class="a" style="left:212.0px;top:488.0px;width:657.0px;height:26.0px;background:#b1b1b1;"></div>
<span class="t" style="left:225.0px;top:492.8px;font-size:12px;line-height:14.4px;color:#595959;transform:scaleX(0.851);">Style Sets</span>
<svg width="1280" height="720"><rect x="217.7" y="492.6" width="1.500" height="1.500" fill="#f2f2f2"/><rect x="216.7" y="491.6" width="1.600" height="1.600" fill="#20242e"/><rect x="217.7" y="495.7" width="1.500" height="1.500" fill="#f2f2f2"/><rect x="216.7" y="494.7" width="1.600" height="1.600" fill="#20242e"/><rect x="217.7" y="498.8" width="1.500" height="1.500" fill="#f2f2f2"/><rect x="216.7" y="497.8" width="1.600" height="1.600" fill="#20242e"/><rect x="217.7" y="501.9" width="1.500" height="1.500" fill="#f2f2f2"/><rect x="216.7" y="500.9" width="1.600" height="1.600" fill="#20242e"/><rect x="217.7" y="505.0" width="1.500" height="1.500" fill="#f2f2f2"/><rect x="216.7" y="504.0" width="1.600" height="1.600" fill="#20242e"/><rect x="217.7" y="508.1" width="1.500" height="1.500" fill="#f2f2f2"/><rect x="216.7" y="507.1" width="1.600" height="1.600" fill="#20242e"/><path d="M841.0 500.0 v-5.500 h3.300 v5.500 M843.7 494.7 v5.300 M839.3 500.4 h6.700 M842.6 500.4 v3.300" stroke="#4a4a4a" stroke-width="1" fill="none"/><path d="M853.3 494.1 l8.600 8.400 M861.9 494.1 l-8.600 8.400" stroke="#3e3e3e" stroke-width="1.600" fill="none"/></svg>
<div class="a" style="left:214.5px;top:514.5px;width:93.5px;height:16.5px;background:#c6c6c6;"></div>
<div class="a" style="left:308.5px;top:514.5px;width:70.5px;height:16.5px;background:#c6c6c6;"></div>
<div class="a" style="left:379.0px;top:514.5px;width:63.5px;height:16.5px;background:#6db3f1;"></div>
<span class="t" style="left:219.0px;top:515.5px;font-size:12px;line-height:14.4px;color:#f4f4f4;transform:scaleX(0.929);">Compare Length</span>
<span class="t" style="left:313.5px;top:515.5px;font-size:12px;line-height:14.4px;color:#f4f4f4;transform:scaleX(0.885);">Pieces Table</span>
<span class="t" style="left:385.0px;top:515.5px;font-size:12px;line-height:14.4px;color:#fff;font-weight:bold;transform:scaleX(0.907);">Style Sets</span>
<div class="a" style="left:221.3px;top:540.5px;width:50.7px;height:17.0px;background:#e3e3e3;border:2px solid #2b72d8;"></div>
<span class="t" style="left:233.5px;top:542.8px;font-size:11.5px;line-height:13.8px;color:#111;transform:scaleX(0.904);">Menu</span>
<span class="t" style="left:223.0px;top:563.6px;font-size:11.5px;line-height:13.8px;color:#1c1c1c;transform:scaleX(0.869);">Style Sets</span>
<div class="a" style="left:290.0px;top:559.5px;width:105.5px;height:18.5px;background:#ffffff;border:1px solid #d4d4d4;"></div>
<div class="a" style="left:292.0px;top:561.5px;width:86.0px;height:14.5px;background:#e6e6e6;"></div>
<svg width="1280" height="720"><path d="M384 566.500 l3.800 3.800 l3.800 -3.800" stroke="#b4b4b4" stroke-width="1.200" fill="none"/></svg>
<div class="a" style="left:411.3px;top:560.0px;width:50.7px;height:17.0px;background:#e3e3e3;border:1px solid #adadad;"></div>
<span class="t" style="left:421.5px;top:562.3px;font-size:11.5px;line-height:13.8px;color:#111;transform:scaleX(0.855);">Create</span>
<div class="a" style="left:471.3px;top:560.0px;width:50.7px;height:17.0px;background:#cfcfcf;border:1px solid #c4c4c4;"></div>
<span class="t" style="left:478.0px;top:562.3px;font-size:11.5px;line-height:13.8px;color:#8a8a8a;transform:scaleX(0.876);">Remove</span>
<div class="a" style="left:532.0px;top:560.0px;width:51.0px;height:17.0px;background:#cfcfcf;border:1px solid #c4c4c4;"></div>
<span class="t" style="left:536.0px;top:562.3px;font-size:11.5px;line-height:13.8px;color:#8a8a8a;transform:scaleX(0.897);">Duplicate</span>
<div class="a" style="left:221.0px;top:587.0px;width:351.5px;height:1.0px;background:#cfcfcf;"></div>
<div class="a" style="left:221.0px;top:588.0px;width:351.5px;height:1.0px;background:#fafafa;"></div>
<span class="t" style="left:220.0px;top:596.9px;font-size:11.5px;line-height:13.8px;color:#1c1c1c;transform:scaleX(0.878);">Description</span>
<div class="a" style="left:290.0px;top:595.8px;width:105.5px;height:18.7px;background:#e9e9e9;border:1px solid #d0d0d0;"></div>
<div class="a" style="left:411.0px;top:596.5px;width:18.0px;height:17.5px;background:#cfcfcf;border:1px solid #c4c4c4;"></div>
<span class="t" style="left:416.5px;top:599.4px;font-size:11px;line-height:13.2px;color:#9a9a9a;transform:scaleX(0.764);">...</span>
<div class="a" style="left:439.3px;top:596.5px;width:68.2px;height:17.5px;background:#cfcfcf;border:1px solid #c4c4c4;"></div>
<span class="t" style="left:447.5px;top:598.3px;font-size:11.5px;line-height:13.8px;color:#8a8a8a;transform:scaleX(0.885);">Add Pieces</span>
<div class="a" style="left:518.0px;top:596.5px;width:68.5px;height:17.5px;background:#cfcfcf;border:1px solid #c4c4c4;overflow:hidden;"></div>
<span class="t" style="left:519.0px;top:598.3px;font-size:11.5px;line-height:13.8px;color:#8a8a8a;transform:scaleX(0.883);">Remove Piece</span>
<div class="a" style="left:220.0px;top:623.0px;width:368.0px;height:33.0px;background:#ececec;border:1px solid #d6d6d6;border-bottom:none;"></div>
<div class="a" style="left:220.0px;top:623.7px;width:16.0px;height:18.8px;background:#f1f1f1;border:1px solid #8c8c8c;"></div>
<div class="a" style="left:235.0px;top:623.7px;width:60.5px;height:18.8px;background:#f1f1f1;border:1px solid #8c8c8c;"></div>
<span class="t" style="left:237.5px;top:626.4px;font-size:11px;line-height:13.2px;color:#1c1c1c;transform:scaleX(0.910);">Piece Name</span>
<div class="a" style="left:294.5px;top:623.7px;width:29.0px;height:18.8px;background:#f1f1f1;border:1px solid #8c8c8c;"></div>
<span class="t" style="left:297.0px;top:626.4px;font-size:11px;line-height:13.2px;color:#1c1c1c;transform:scaleX(0.894);">Code</span>
<div class="a" style="left:322.5px;top:623.7px;width:55.5px;height:18.8px;background:#f1f1f1;border:1px solid #8c8c8c;"></div>
<span class="t" style="left:325.0px;top:626.4px;font-size:11px;line-height:13.2px;color:#1c1c1c;transform:scaleX(0.909);">Description</span>
<div class="a" style="left:377.0px;top:623.7px;width:40.5px;height:18.8px;background:#f1f1f1;border:1px solid #8c8c8c;"></div>
<span class="t" style="left:379.5px;top:626.4px;font-size:11px;line-height:13.2px;color:#1c1c1c;transform:scaleX(0.895);">Material</span>
<div class="a" style="left:416.5px;top:623.7px;width:42.0px;height:18.8px;background:#f1f1f1;border:1px solid #8c8c8c;"></div>
<span class="t" style="left:419.0px;top:626.4px;font-size:11px;line-height:13.2px;color:#1c1c1c;transform:scaleX(0.891);">Quantity</span>
<div class="a" style="left:457.5px;top:623.7px;width:22.5px;height:18.8px;background:#f1f1f1;border:1px solid #8c8c8c;"></div>
<span class="t" style="left:460.0px;top:626.4px;font-size:11px;line-height:13.2px;color:#1c1c1c;transform:scaleX(0.844);">Pair</span>
<div class="a" style="left:479.0px;top:623.7px;width:45.5px;height:18.8px;background:#f1f1f1;border:1px solid #8c8c8c;"></div>
<span class="t" style="left:481.5px;top:626.4px;font-size:11px;line-height:13.2px;color:#1c1c1c;transform:scaleX(0.886);">Opposite</span>
<div class="a" style="left:220.0px;top:623.7px;width:15.0px;height:18.8px;background:#f1f1f1;border:1.500px solid #444;"></div>
<div class="a" style="left:596.0px;top:540.5px;width:264.5px;height:108.5px;background:#ececec;border:1px solid #a8a8a8;"></div>
<div class="a" style="left:869.0px;top:100.0px;width:1.2px;height:558.0px;background:#5a5a5a;"></div>
<div class="a" style="left:870.2px;top:100.0px;width:406.0px;height:22.7px;background:#b1b1b1;"></div>
<div class="a" style="left:870.2px;top:122.7px;width:406.0px;height:52.5px;background:#e4e4e4;"></div>
<span class="t" style="left:884.0px;top:104.5px;font-size:12px;line-height:14.4px;color:#595959;transform:scaleX(0.860);">PFA_Eva.mod</span>
<svg width="1280" height="720"><rect x="876.3" y="104.6" width="1.500" height="1.500" fill="#f2f2f2"/><rect x="875.3" y="103.6" width="1.600" height="1.600" fill="#20242e"/><rect x="876.3" y="107.7" width="1.500" height="1.500" fill="#f2f2f2"/><rect x="875.3" y="106.7" width="1.600" height="1.600" fill="#20242e"/><rect x="876.3" y="110.8" width="1.500" height="1.500" fill="#f2f2f2"/><rect x="875.3" y="109.8" width="1.600" height="1.600" fill="#20242e"/><rect x="876.3" y="113.9" width="1.500" height="1.500" fill="#f2f2f2"/><rect x="875.3" y="112.9" width="1.600" height="1.600" fill="#20242e"/><rect x="876.3" y="117.0" width="1.500" height="1.500" fill="#f2f2f2"/><rect x="875.3" y="116.0" width="1.600" height="1.600" fill="#20242e"/><rect x="876.3" y="120.1" width="1.500" height="1.500" fill="#f2f2f2"/><rect x="875.3" y="119.1" width="1.600" height="1.600" fill="#20242e"/><path d="M1250.1 112.0 v-5.500 h3.300 v5.500 M1252.8 106.7 v5.300 M1248.4 112.4 h6.700 M1251.7 112.4 v3.300" stroke="#4a4a4a" stroke-width="1" fill="none"/><path d="M1262.4 106.1 l8.600 8.400 M1271.0 106.1 l-8.600 8.400" stroke="#3e3e3e" stroke-width="1.600" fill="none"/><rect x="875.2" y="129.1" width="1.7" height="1.7" fill="#2a2a2a"/><rect x="875.2" y="132.4" width="1.7" height="1.7" fill="#2a2a2a"/><rect x="875.2" y="135.7" width="1.7" height="1.7" fill="#2a2a2a"/><rect x="875.2" y="139.0" width="1.7" height="1.7" fill="#2a2a2a"/><g transform="translate(879.5,126.6)"><g fill="#2f9a3a" stroke="#1e7a2a" stroke-width=".5"><path d="M6 2.500 h6 l2.500 4 l-2.800 1.600 l-1.700 -2.800 h-2.500 l-1 1.700 l-2.800 -1.600z"/><path d="M15 8 l2 3.500 l-3 5 h-3.500 v-3.200 h2 l1 -1.800 l-1.300 -2.200z"/><path d="M8.500 16.500 h-5 l-2.500 -4.500 l2 -3.500 l2.800 1.600 l-1.300 2.200 l1 1.700 h3z"/></g></g><g transform="translate(902.0,126.6)"><path d="M6 2 h10.500 v13 h-7.500 l-3 -2z" fill="#dce8f8" stroke="#2b67b8" stroke-width="1.100"/><path d="M11.500 2 v13" stroke="#2b67b8" stroke-width="1"/><rect x="1" y="1" width="8" height="8" fill="#f4f4f4"/><path d="M1.500 1.500 l7 7 M8.500 1.500 l-7 7" stroke="#d0182a" stroke-width="2.200"/></g><path d="M923.4 134.2 h5.6 l-2.8 3 z" fill="#1a1a1a"/><g transform="translate(933.0,126.6)"><path d="M4 1.500 h12.500 v14 h-12.500z" fill="#dce8f8" stroke="#2b67b8" stroke-width="1.100"/><path d="M12 1.500 v14" stroke="#2b67b8" stroke-width="1"/><circle cx="6.500" cy="7" r="2.800" fill="#f4d2a4" stroke="#a87838" stroke-width=".6"/><path d="M1.500 17 q0 -6 5 -6 q5 0 5 6z" fill="#7b3fc4"/></g><rect x="953.500" y="125.500" width="21" height="20.500" fill="#f6f6f6" stroke="#b8b8b8"/><g transform="translate(955.0,126.6)"><path d="M3.500 8 q0 -4 4 -4 h4 v-2.200 l4 3.500 l-4 3.500 v-2.200 h-4 q-1.500 0 -1.500 1.500z" fill="#52c060" stroke="#1e7a2a" stroke-width=".4"/><path d="M14.500 10 q0 4 -4 4 h-4 v2.200 l-4 -3.500 l4 -3.500 v2.200 h4 q1.500 0 1.500 -1.500z" fill="#52c060" stroke="#1e7a2a" stroke-width=".4"/></g><g transform="translate(976.0,126.6)"><path d="M6 2.500 h6 v6.500 h3.500 l-6.500 7 l-6.500 -7 h3.500z" fill="#5cc85a"/></g><g transform="translate(997.0,126.6)"><rect x="1" y="1.500" width="16" height="15" fill="#eef3fb" stroke="#2b67b8" stroke-width="1.200"/><path d="M5 4 l9 5 l-9 5z" fill="#2a9a3a" stroke="#1e7a2a" stroke-width=".6"/></g><path d="M1020.4 126.6 v18" stroke="#b4b4b4" stroke-width="1"/><path d="M1021.4 126.6 v18" stroke="#f2f2f2" stroke-width="1"/><g transform="translate(1023.0,126.6)"><rect x="3" y="2" width="11" height="14" rx="2" fill="#a9ccf2" stroke="#2b67b8" stroke-width="1.300"/><path d="M8.500 2 v14 M3 5 h11 M3 13 h11" stroke="#2b67b8" stroke-width="1"/><path d="M14 9 h4" stroke="#7ab0e8" stroke-width="1"/></g><g transform="translate(1046.0,126.6)"><rect x="1" y="1" width="16.500" height="16.500" fill="#dff3e6" stroke="#2a8a58" stroke-width="1" stroke-dasharray="2 1.200"/><rect x="4.500" y="2.500" width="9.500" height="13.500" rx="1.500" fill="#a9ccf2" stroke="#2b67b8" stroke-width="1.300"/><path d="M9.200 2.500 v13.500 M4.500 5.500 h9.500 M4.500 13 h9.500" stroke="#2b67b8" stroke-width="1"/></g><g transform="translate(1068.0,126.6)"><rect x="1" y="7" width="10.500" height="9.500" fill="#f8e8c8" stroke="#8a5a1c" stroke-width=".8"/><g fill="#b0621c"><rect x="1.500" y="7.500" width="2.500" height="2.200"/><rect x="6.500" y="7.500" width="2.500" height="2.200"/><rect x="4" y="9.700" width="2.500" height="2.200"/><rect x="9" y="9.700" width="2.300" height="2.200"/><rect x="1.500" y="11.900" width="2.500" height="2.200"/><rect x="6.500" y="11.900" width="2.500" height="2.200"/><rect x="4" y="14.100" width="2.500" height="2.200"/><rect x="9" y="14.100" width="2.300" height="2.200"/></g><path d="M9 5.500 l3 -3 l-1.500 -1.500 h6 v6 l-1.500 -1.500 l-3 3z" fill="#2f9a3a" stroke="#1e7a2a" stroke-width=".5"/></g><path d="M1091.0 126.6 v18" stroke="#b4b4b4" stroke-width="1"/><path d="M1092.0 126.6 v18" stroke="#f2f2f2" stroke-width="1"/><g transform="translate(1096.0,126.6)"><path d="M9 1.500 v9 l-7 5 M9 10.500 l7 5" fill="none" stroke="#1e7a34" stroke-width="2"/></g><path d="M1117.5 134.2 h5.6 l-2.8 3 z" fill="#1a1a1a"/><path d="M1140.8 131.1 l2.500 -2.300 l2.500 2.300 M1140.8 133.6 l2.500 -2.300 l2.500 2.300" stroke="#222" stroke-width="1" fill="none"/><path d="M1140.5 138.7 h5.6 l-2.8 3 z" fill="#1a1a1a"/><rect x="1155.5" y="129.1" width="1.7" height="1.7" fill="#2a2a2a"/><rect x="1155.5" y="132.4" width="1.7" height="1.7" fill="#2a2a2a"/><rect x="1155.5" y="135.7" width="1.7" height="1.7" fill="#2a2a2a"/><rect x="1155.5" y="139.0" width="1.7" height="1.7" fill="#2a2a2a"/><g transform="translate(1160.0,126.6)"><circle cx="7" cy="5.500" r="3.300" fill="#f4d2a4" stroke="#a87838" stroke-width=".6"/><path d="M1 16.500 q0 -7 6 -7 q6 0 6 7z" fill="#7b3fc4"/><path d="M14.500 5 v10 M14.500 5.500 h2.500 M14.500 8 h2" stroke="#c8962c" stroke-width="1.600"/></g><g transform="translate(1181.0,126.6)"><rect x="1.500" y="2" width="15" height="14" rx="2" fill="#eaf2fd" stroke="#2b67b8" stroke-width="1.200" stroke-dasharray="2 1"/><path d="M5 4 v11 M8 4 v11 M11 4 v11 M14 4 v11 M3 6.500 h13 M3 9.500 h13 M3 12.500 h13" stroke="#3a78c8" stroke-width=".8" stroke-dasharray="1 1"/></g><g transform="translate(1202.5,126.6)"><rect x="1.500" y="2" width="15" height="14" rx="2" fill="#c8f0e0" stroke="#2b67b8" stroke-width="1.200" stroke-dasharray="2 1"/><path d="M5 4 v11 M8 4 v11 M11 4 v11 M14 4 v11 M3 6.500 h13 M3 9.500 h13 M3 12.500 h13" stroke="#2a8a8a" stroke-width=".9"/></g><g transform="translate(1224.0,126.6)"><rect x="1.500" y="2" width="15" height="14" rx="1.500" fill="#3a78c8" stroke="#1d4a8f" stroke-width="1.200"/><path d="M9 2 v14 M1.500 9 h15" stroke="#bcd6f6" stroke-width="1.100"/><path d="M3 8 l5 -5 M10.500 15 l5 -5" stroke="#8ab4ea" stroke-width=".8"/></g><g transform="translate(1245.5,126.6)"><path d="M2 1.500 h9.500 l4.500 4.500 v10.500 h-14z" fill="#f4f8fe" stroke="#1d4a8f" stroke-width="1.100"/><circle cx="8.500" cy="8" r="2.400" fill="#f4d2a4" stroke="#a87838" stroke-width=".5"/><path d="M4.500 15.500 q0 -5 4 -5 q4 0 4 5z" fill="#7b3fc4"/></g><path d="M1268.6 134.2 h5.6 l-2.8 3 z" fill="#1a1a1a"/><rect x="875.2" y="153.9" width="1.7" height="1.7" fill="#2a2a2a"/><rect x="875.2" y="157.2" width="1.7" height="1.7" fill="#2a2a2a"/><rect x="875.2" y="160.5" width="1.7" height="1.7" fill="#2a2a2a"/><rect x="875.2" y="163.8" width="1.7" height="1.7" fill="#2a2a2a"/><g transform="translate(879.7,151.4)"><rect x="2" y="2.500" width="14" height="13" fill="none" stroke="#223a70" stroke-width="1" stroke-dasharray="2.500 2"/><circle cx="9" cy="9" r="5" fill="#c4ddf6" stroke="#2b67b8" stroke-width="1"/></g><path d="M902.2 159.0 h5.6 l-2.8 3 z" fill="#1a1a1a"/><g transform="translate(911.5,151.4)"><path d="M1.500 3 l3 -1.500 h12 v12 l-3 3 h-12z" fill="#a8e0d0" stroke="#2b67b8" stroke-width="1.200"/><path d="M1.500 3 h12 v13.500 M13.500 3 l3 -1.500" fill="none" stroke="#2b67b8" stroke-width="1"/><circle cx="9" cy="10" r="2.100" fill="#d8282a"/><path d="M5.5 10 h3" stroke="#d8282a" stroke-width="1.200"/></g><g transform="translate(933.0,151.4)"><path d="M2 2 h9.500 l4.500 4.500 v10 h-14z" fill="#a8e0d0" stroke="#2b67b8" stroke-width="1.200"/><circle cx="8.5" cy="7.5" r="2.100" fill="#d8282a"/><path d="M5.0 7.5 h3" stroke="#d8282a" stroke-width="1.200"/></g><g transform="translate(954.5,151.4)"><path d="M3 5 l6 -3 l7 2.500 v8 l-6 4 l-7 -3.500z" fill="#8cc8e8" stroke="#2b67b8" stroke-width="1.100"/><path d="M3 5 l7 3 l6 -3.500 M10 8 v8.500" fill="none" stroke="#2b67b8" stroke-width="1"/><path d="M3 5 l7 3 v8.500 l-7 -3.500z" fill="#a8e0c0"/><circle cx="3.5" cy="10" r="2.100" fill="#d8282a"/><path d="M0.0 10 h3" stroke="#d8282a" stroke-width="1.200"/></g><g transform="translate(975.7,151.4)"><path d="M3 5 l6 -3 l7 2.500 v8 l-6 4 l-7 -3.500z" fill="#8cc8e8" stroke="#2b67b8" stroke-width="1.100"/><path d="M3 5 l7 3 l6 -3.500 M10 8 v8.500" fill="none" stroke="#2b67b8" stroke-width="1"/><path d="M10 8 l6 -3.500 v8 l-6 4z" fill="#a8e0c0"/><circle cx="13.5" cy="10.5" r="2.100" fill="#d8282a"/><path d="M10.0 10.5 h3" stroke="#d8282a" stroke-width="1.200"/></g><g transform="translate(997.5,151.4)"><path d="M3 4 l3 -2.500 h11 v8 l-3 3 h-11z" fill="#5a9ae0" stroke="#2b67b8" stroke-width="1"/><path d="M2 9 h12 l2 -2 v6 l-3 3 h-11z" fill="#b8e8d8" stroke="#6ab0c8" stroke-width=".8"/><circle cx="8.500" cy="14" r="2.200" fill="#d8282a"/><path d="M8.500 10 v3" stroke="#d8282a" stroke-width="1.200"/></g><path d="M1024.5 155.9 l2.500 -2.300 l2.500 2.300 M1024.5 158.4 l2.500 -2.300 l2.500 2.300" stroke="#222" stroke-width="1" fill="none"/><path d="M1024.2 163.5 h5.6 l-2.8 3 z" fill="#1a1a1a"/><rect x="1039.2" y="153.9" width="1.7" height="1.7" fill="#2a2a2a"/><rect x="1039.2" y="157.2" width="1.7" height="1.7" fill="#2a2a2a"/><rect x="1039.2" y="160.5" width="1.7" height="1.7" fill="#2a2a2a"/><rect x="1039.2" y="163.8" width="1.7" height="1.7" fill="#2a2a2a"/><g transform="translate(1043.0,151.4)"><path d="M3 15 q-2 -5 2 -8 l8 -4 q3 -0.500 3 2 l-3 2 v3 q-2 1 -3 4 q-3 3 -7 1z" fill="#f2f6fb" stroke="#6a8ab0" stroke-width=".9"/><circle cx="6.500" cy="12" r="2.300" fill="#1c1c1c"/><path d="M2 13 q-1 3 2 3" stroke="#2b67b8" stroke-width="1.300" fill="none"/></g><path d="M1066.0 159.0 h5.6 l-2.8 3 z" fill="#1a1a1a"/><g transform="translate(1076.0,151.4)"><path d="M3.500 3 l6 7.500" stroke="#c05a4a" stroke-width="1.200"/><circle cx="11.500" cy="12.500" r="3.300" fill="#e0202a" stroke="#a01018" stroke-width=".6"/></g><path d="M1097.5 159.0 h5.6 l-2.8 3 z" fill="#1a1a1a"/><g transform="translate(1107.0,151.4)"><rect x="1.200" y="1.200" width="15.600" height="15.600" fill="#3a78c8" stroke="#1d4a8f" stroke-width=".8"/><path d="M3 5 l3 -2 l3 3 l-2 3 l-3 -1z M10 3 l4 1 l1 3 l-3 1z M4 11 l3 -1 l2 3 l-3 2z M10 10 l3 -1 l2 4 l-4 2z" fill="none" stroke="#cfe2fa" stroke-width=".9"/></g><path d="M1129.8 159.0 h5.6 l-2.8 3 z" fill="#1a1a1a"/><g transform="translate(1138.0,151.4)"><path d="M6 3.500 h6 v3 h-3 v4 h-5 v3 M9 10.500 h6 M11 13.500 v3 h-5" stroke="#c6c6c6" stroke-width="1.800" fill="none"/></g><rect x="1165.2" y="153.9" width="1.7" height="1.7" fill="#2a2a2a"/><rect x="1165.2" y="157.2" width="1.7" height="1.7" fill="#2a2a2a"/><rect x="1165.2" y="160.5" width="1.7" height="1.7" fill="#2a2a2a"/><rect x="1165.2" y="163.8" width="1.7" height="1.7" fill="#2a2a2a"/><g transform="translate(1169.5,151.4)"><circle cx="9" cy="9" r="6.300" fill="#cdcdcd"/><circle cx="7.500" cy="7" r="3" fill="#dcdcdc"/></g><g transform="translate(1190.5,151.4)"><ellipse cx="10" cy="13.500" rx="6" ry="2" fill="#d2d2d2"/><circle cx="8.500" cy="8" r="5.600" fill="#cdcdcd"/><circle cx="7" cy="6.500" r="2.600" fill="#dedede"/></g><g transform="translate(1213.0,151.4)"><path d="M2 12 l9 -9.500 l5 4.500 l-9 9.500z" fill="#cfe2fa" stroke="#2b67b8" stroke-width="1.100"/><path d="M2 12 l5 4.500" stroke="#8ab820" stroke-width="2.200"/><path d="M11 2.500 l5 4.500" stroke="#4a86d4" stroke-width="2"/></g><g transform="translate(1234.5,151.4)"><rect x="1.200" y="1.500" width="15.600" height="15" fill="#3a8ae0"/><rect x="1.200" y="9" width="15.600" height="3" fill="#a8d8f4"/><rect x="1.200" y="12" width="15.600" height="4.500" fill="#4ac040"/><circle cx="12.500" cy="6" r="1.800" fill="#f4e04a"/></g><g transform="translate(1256.0,151.4)"><path d="M1.500 5 h3 l1.500 -2 h4 l1.500 2 h5 v11 h-15z" fill="#4a8ee0" stroke="#1d4a8f" stroke-width="1"/><circle cx="9" cy="10.500" r="3.600" fill="#dcebfb" stroke="#1d4a8f" stroke-width="1"/><rect x="6.500" y="8.500" width="5" height="4" fill="none" stroke="#1d4a8f" stroke-width=".8"/></g></svg>
<div class="a" style="left:870.2px;top:175.2px;width:406.0px;height:483.0px;background:#f9f9ff;"></div>
<div class="a" style="left:870.2px;top:175.2px;width:406.0px;height:1.3px;background:#7a7a7a;"></div>
<div class="a" style="left:870.2px;top:175.2px;width:1.3px;height:483.0px;background:#5a5a5a;"></div>
<svg width="1280" height="720"><clipPath id="lf"><rect x="871.600" y="597" width="285.100" height="58.500"/></clipPath><path d="M894 513.800 H1255 L1276.200 556.700 V597.800 H1156.700 V655.500 H871.600 V556.700z" fill="#c4c4c4"/><path d="M890.8 520 H1258.1" stroke="#3c3c3c" stroke-width=".8"/><path d="M886.7 527.8 H1261.9" stroke="#3c3c3c" stroke-width=".8"/><path d="M883.2 534.4 H1265.2" stroke="#3c3c3c" stroke-width=".8"/><path d="M879.2 542.2 H1269.0" stroke="#3c3c3c" stroke-width=".8"/><path d="M875 551 H1273" stroke="#3c3c3c" stroke-width=".9" stroke-dasharray="7 2 1 2"/><rect x="871.600" y="567.800" width="404.600" height="10" fill="#d2d2d2"/><path d="M871.600 567.800 H1276.200 M871.600 577.800 H1276.200" stroke="#3c3c3c" stroke-width=".8"/><path d="M871.600 590 H1276.200" stroke="#8a8a8a" stroke-width=".6" stroke-dasharray="9 3"/><path d="M913.9 515.7 L910.7 518.3" stroke="#555" stroke-width=".8"/><path d="M931.7 515.7 L928.9 518.3" stroke="#555" stroke-width=".8"/><path d="M949.6 515.7 L947.0 518.3" stroke="#555" stroke-width=".8"/><path d="M967.4 515.7 L965.2 518.3" stroke="#555" stroke-width=".8"/><path d="M985.2 515.7 L983.4 518.3" stroke="#555" stroke-width=".8"/><path d="M1003.0 515.7 L1001.6 518.3" stroke="#555" stroke-width=".8"/><path d="M1020.8 515.7 L1019.8 518.3" stroke="#555" stroke-width=".8"/><path d="M1038.7 515.7 L1037.9 518.3" stroke="#555" stroke-width=".8"/><path d="M1056.5 515.7 L1056.1 518.3" stroke="#555" stroke-width=".8"/><path d="M1092.1 515.7 L1092.5 518.3" stroke="#555" stroke-width=".8"/><path d="M1109.9 515.7 L1110.7 518.3" stroke="#555" stroke-width=".8"/><path d="M1127.8 515.7 L1128.8 518.3" stroke="#555" stroke-width=".8"/><path d="M1145.6 515.7 L1147.0 518.3" stroke="#555" stroke-width=".8"/><path d="M1163.4 515.7 L1165.2 518.3" stroke="#555" stroke-width=".8"/><path d="M1181.2 515.7 L1183.4 518.3" stroke="#555" stroke-width=".8"/><path d="M1199.0 515.7 L1201.6 518.3" stroke="#555" stroke-width=".8"/><path d="M1216.9 515.7 L1219.7 518.3" stroke="#555" stroke-width=".8"/><path d="M1234.7 515.7 L1237.9 518.3" stroke="#555" stroke-width=".8"/><path d="M1252.5 515.7 L1256.1 518.3" stroke="#555" stroke-width=".8"/><path d="M909.4 522.7 L906.2 525.3" stroke="#555" stroke-width=".8"/><path d="M927.7 522.7 L924.9 525.3" stroke="#555" stroke-width=".8"/><path d="M946.1 522.7 L943.5 525.3" stroke="#555" stroke-width=".8"/><path d="M964.4 522.7 L962.2 525.3" stroke="#555" stroke-width=".8"/><path d="M982.7 522.7 L980.9 525.3" stroke="#555" stroke-width=".8"/><path d="M1001.0 522.7 L999.6 525.3" stroke="#555" stroke-width=".8"/><path d="M1019.3 522.7 L1018.3 525.3" stroke="#555" stroke-width=".8"/><path d="M1037.7 522.7 L1036.9 525.3" stroke="#555" stroke-width=".8"/><path d="M1056.0 522.7 L1055.6 525.3" stroke="#555" stroke-width=".8"/><path d="M1092.6 522.7 L1093.0 525.3" stroke="#555" stroke-width=".8"/><path d="M1110.9 522.7 L1111.7 525.3" stroke="#555" stroke-width=".8"/><path d="M1129.3 522.7 L1130.3 525.3" stroke="#555" stroke-width=".8"/><path d="M1147.6 522.7 L1149.0 525.3" stroke="#555" stroke-width=".8"/><path d="M1165.9 522.7 L1167.7 525.3" stroke="#555" stroke-width=".8"/><path d="M1184.2 522.7 L1186.4 525.3" stroke="#555" stroke-width=".8"/><path d="M1202.5 522.7 L1205.1 525.3" stroke="#555" stroke-width=".8"/><path d="M1220.9 522.7 L1223.7 525.3" stroke="#555" stroke-width=".8"/><path d="M1239.2 522.7 L1242.4 525.3" stroke="#555" stroke-width=".8"/><path d="M904.9 529.7 L901.7 532.3" stroke="#555" stroke-width=".8"/><path d="M923.7 529.7 L920.9 532.3" stroke="#555" stroke-width=".8"/><path d="M942.6 529.7 L940.0 532.3" stroke="#555" stroke-width=".8"/><path d="M961.4 529.7 L959.2 532.3" stroke="#555" stroke-width=".8"/><path d="M980.2 529.7 L978.4 532.3" stroke="#555" stroke-width=".8"/><path d="M999.0 529.7 L997.6 532.3" stroke="#555" stroke-width=".8"/><path d="M1017.8 529.7 L1016.8 532.3" stroke="#555" stroke-width=".8"/><path d="M1036.7 529.7 L1035.9 532.3" stroke="#555" stroke-width=".8"/><path d="M1055.5 529.7 L1055.1 532.3" stroke="#555" stroke-width=".8"/><path d="M1093.1 529.7 L1093.5 532.3" stroke="#555" stroke-width=".8"/><path d="M1111.9 529.7 L1112.7 532.3" stroke="#555" stroke-width=".8"/><path d="M1130.8 529.7 L1131.8 532.3" stroke="#555" stroke-width=".8"/><path d="M1149.6 529.7 L1151.0 532.3" stroke="#555" stroke-width=".8"/><path d="M1168.4 529.7 L1170.2 532.3" stroke="#555" stroke-width=".8"/><path d="M1187.2 529.7 L1189.4 532.3" stroke="#555" stroke-width=".8"/><path d="M1206.0 529.7 L1208.6 532.3" stroke="#555" stroke-width=".8"/><path d="M1224.9 529.7 L1227.7 532.3" stroke="#555" stroke-width=".8"/><path d="M1243.7 529.7 L1246.9 532.3" stroke="#555" stroke-width=".8"/><path d="M900.4 536.7 L897.2 539.3" stroke="#555" stroke-width=".8"/><path d="M919.7 536.7 L916.9 539.3" stroke="#555" stroke-width=".8"/><path d="M939.1 536.7 L936.5 539.3" stroke="#555" stroke-width=".8"/><path d="M958.4 536.7 L956.2 539.3" stroke="#555" stroke-width=".8"/><path d="M977.7 536.7 L975.9 539.3" stroke="#555" stroke-width=".8"/><path d="M997.0 536.7 L995.6 539.3" stroke="#555" stroke-width=".8"/><path d="M1016.3 536.7 L1015.3 539.3" stroke="#555" stroke-width=".8"/><path d="M1035.7 536.7 L1034.9 539.3" stroke="#555" stroke-width=".8"/><path d="M1055.0 536.7 L1054.6 539.3" stroke="#555" stroke-width=".8"/><path d="M1093.6 536.7 L1094.0 539.3" stroke="#555" stroke-width=".8"/><path d="M1112.9 536.7 L1113.7 539.3" stroke="#555" stroke-width=".8"/><path d="M1132.3 536.7 L1133.3 539.3" stroke="#555" stroke-width=".8"/><path d="M1151.6 536.7 L1153.0 539.3" stroke="#555" stroke-width=".8"/><path d="M1170.9 536.7 L1172.7 539.3" stroke="#555" stroke-width=".8"/><path d="M1190.2 536.7 L1192.4 539.3" stroke="#555" stroke-width=".8"/><path d="M1209.5 536.7 L1212.1 539.3" stroke="#555" stroke-width=".8"/><path d="M1228.9 536.7 L1231.7 539.3" stroke="#555" stroke-width=".8"/><path d="M1248.2 536.7 L1251.4 539.3" stroke="#555" stroke-width=".8"/><path d="M895.9 544.5 L892.7 548.5" stroke="#555" stroke-width=".8"/><path d="M915.7 544.5 L912.9 548.5" stroke="#555" stroke-width=".8"/><path d="M935.6 544.5 L933.0 548.5" stroke="#555" stroke-width=".8"/><path d="M955.4 544.5 L953.2 548.5" stroke="#555" stroke-width=".8"/><path d="M975.2 544.5 L973.4 548.5" stroke="#555" stroke-width=".8"/><path d="M995.0 544.5 L993.6 548.5" stroke="#555" stroke-width=".8"/><path d="M1014.8 544.5 L1013.8 548.5" stroke="#555" stroke-width=".8"/><path d="M1034.7 544.5 L1033.9 548.5" stroke="#555" stroke-width=".8"/><path d="M1054.5 544.5 L1054.1 548.5" stroke="#555" stroke-width=".8"/><path d="M1094.1 544.5 L1094.5 548.5" stroke="#555" stroke-width=".8"/><path d="M1113.9 544.5 L1114.7 548.5" stroke="#555" stroke-width=".8"/><path d="M1133.8 544.5 L1134.8 548.5" stroke="#555" stroke-width=".8"/><path d="M1153.6 544.5 L1155.0 548.5" stroke="#555" stroke-width=".8"/><path d="M1173.4 544.5 L1175.2 548.5" stroke="#555" stroke-width=".8"/><path d="M1193.2 544.5 L1195.4 548.5" stroke="#555" stroke-width=".8"/><path d="M1213.0 544.5 L1215.6 548.5" stroke="#555" stroke-width=".8"/><path d="M1232.9 544.5 L1235.7 548.5" stroke="#555" stroke-width=".8"/><path d="M1252.7 544.5 L1255.9 548.5" stroke="#555" stroke-width=".8"/><path d="M888.7 556.4 L885.5 561.6" stroke="#555" stroke-width=".8"/><path d="M909.3 556.4 L906.5 561.6" stroke="#555" stroke-width=".8"/><path d="M930.0 556.4 L927.4 561.6" stroke="#555" stroke-width=".8"/><path d="M950.6 556.4 L948.4 561.6" stroke="#555" stroke-width=".8"/><path d="M971.2 556.4 L969.4 561.6" stroke="#555" stroke-width=".8"/><path d="M991.8 556.4 L990.4 561.6" stroke="#555" stroke-width=".8"/><path d="M1012.4 556.4 L1011.4 561.6" stroke="#555" stroke-width=".8"/><path d="M1033.1 556.4 L1032.3 561.6" stroke="#555" stroke-width=".8"/><path d="M1053.7 556.4 L1053.3 561.6" stroke="#555" stroke-width=".8"/><path d="M1094.9 556.4 L1095.3 561.6" stroke="#555" stroke-width=".8"/><path d="M1115.5 556.4 L1116.3 561.6" stroke="#555" stroke-width=".8"/><path d="M1136.2 556.4 L1137.2 561.6" stroke="#555" stroke-width=".8"/><path d="M1156.8 556.4 L1158.2 561.6" stroke="#555" stroke-width=".8"/><path d="M1177.4 556.4 L1179.2 561.6" stroke="#555" stroke-width=".8"/><path d="M1198.0 556.4 L1200.2 561.6" stroke="#555" stroke-width=".8"/><path d="M1218.6 556.4 L1221.2 561.6" stroke="#555" stroke-width=".8"/><path d="M1239.3 556.4 L1242.1 561.6" stroke="#555" stroke-width=".8"/><path d="M1259.9 556.4 L1263.1 561.6" stroke="#555" stroke-width=".8"/><path d="M882.4 587.4 L879.2 592.6" stroke="#555" stroke-width=".8"/><path d="M903.7 587.4 L900.9 592.6" stroke="#555" stroke-width=".8"/><path d="M925.1 587.4 L922.5 592.6" stroke="#555" stroke-width=".8"/><path d="M946.4 587.4 L944.2 592.6" stroke="#555" stroke-width=".8"/><path d="M967.7 587.4 L965.9 592.6" stroke="#555" stroke-width=".8"/><path d="M989.0 587.4 L987.6 592.6" stroke="#555" stroke-width=".8"/><path d="M1010.3 587.4 L1009.3 592.6" stroke="#555" stroke-width=".8"/><path d="M1031.7 587.4 L1030.9 592.6" stroke="#555" stroke-width=".8"/><path d="M1053.0 587.4 L1052.6 592.6" stroke="#555" stroke-width=".8"/><path d="M1095.6 587.4 L1096.0 592.6" stroke="#555" stroke-width=".8"/><path d="M1116.9 587.4 L1117.7 592.6" stroke="#555" stroke-width=".8"/><path d="M1138.3 587.4 L1139.3 592.6" stroke="#555" stroke-width=".8"/><path d="M1159.6 587.4 L1161.0 592.6" stroke="#555" stroke-width=".8"/><path d="M1180.9 587.4 L1182.7 592.6" stroke="#555" stroke-width=".8"/><path d="M1202.2 587.4 L1204.4 592.6" stroke="#555" stroke-width=".8"/><path d="M1223.5 587.4 L1226.1 592.6" stroke="#555" stroke-width=".8"/><path d="M1244.9 587.4 L1247.7 592.6" stroke="#555" stroke-width=".8"/><path d="M1266.2 587.4 L1269.4 592.6" stroke="#555" stroke-width=".8"/><rect x="871.600" y="596.800" width="285.100" height="2" fill="#111"/><rect x="871.600" y="602" width="285.100" height="2.300" fill="#e2e2e2"/><path d="M871.600 605.3 H1156.700" stroke="#555" stroke-width=".7" stroke-dasharray="5 2 1 2"/><rect x="871.600" y="607.5" width="285.100" height="2.300" fill="#e2e2e2"/><path d="M871.600 610.8 H1156.700" stroke="#555" stroke-width=".7" stroke-dasharray="6 2 1 2"/><rect x="871.600" y="613" width="285.100" height="2.300" fill="#e2e2e2"/><path d="M871.600 616.3 H1156.700" stroke="#555" stroke-width=".7" stroke-dasharray="7 2 1 2"/><rect x="871.600" y="618.5" width="285.100" height="2.300" fill="#e2e2e2"/><path d="M871.600 621.8 H1156.700" stroke="#555" stroke-width=".7" stroke-dasharray="5 2 1 2"/><rect x="871.600" y="624" width="285.100" height="2.300" fill="#e2e2e2"/><path d="M871.600 627.3 H1156.700" stroke="#555" stroke-width=".7" stroke-dasharray="6 2 1 2"/><rect x="871.600" y="629.5" width="285.100" height="2.300" fill="#e2e2e2"/><path d="M871.600 632.8 H1156.700" stroke="#555" stroke-width=".7" stroke-dasharray="7 2 1 2"/><rect x="871.600" y="635" width="285.100" height="2.300" fill="#e2e2e2"/><path d="M871.600 638.3 H1156.700" stroke="#555" stroke-width=".7" stroke-dasharray="5 2 1 2"/><rect x="871.600" y="640.5" width="285.100" height="2.300" fill="#e2e2e2"/><path d="M871.600 643.8 H1156.700" stroke="#555" stroke-width=".7" stroke-dasharray="6 2 1 2"/><rect x="871.600" y="646" width="285.100" height="2.300" fill="#e2e2e2"/><path d="M871.600 649.3 H1156.700" stroke="#555" stroke-width=".7" stroke-dasharray="7 2 1 2"/><rect x="871.600" y="651.5" width="285.100" height="2.300" fill="#e2e2e2"/><path d="M871.600 654.8 H1156.700" stroke="#555" stroke-width=".7" stroke-dasharray="5 2 1 2"/><path d="M859.3 598.500 L819.3 655.500" stroke="#555" stroke-width=".8" stroke-dasharray="3 2.500" clip-path="url(#lf)"/><path d="M880.8 598.500 L844.8 655.500" stroke="#555" stroke-width=".8" stroke-dasharray="3 2.500" clip-path="url(#lf)"/><path d="M902.3 598.500 L870.3 655.500" stroke="#555" stroke-width=".8" stroke-dasharray="3 2.500" clip-path="url(#lf)"/><path d="M923.8 598.500 L895.8 655.500" stroke="#555" stroke-width=".8" stroke-dasharray="3 2.500" clip-path="url(#lf)"/><path d="M945.3 598.500 L921.3 655.500" stroke="#555" stroke-width=".8" stroke-dasharray="3 2.500" clip-path="url(#lf)"/><path d="M966.8 598.500 L946.8 655.500" stroke="#555" stroke-width=".8" stroke-dasharray="3 2.500" clip-path="url(#lf)"/><path d="M988.3 598.500 L972.3 655.500" stroke="#555" stroke-width=".8" stroke-dasharray="3 2.500" clip-path="url(#lf)"/><path d="M1009.8 598.500 L997.8 655.500" stroke="#555" stroke-width=".8" stroke-dasharray="3 2.500" clip-path="url(#lf)"/><path d="M1031.3 598.500 L1023.3 655.500" stroke="#555" stroke-width=".8" stroke-dasharray="3 2.500" clip-path="url(#lf)"/><path d="M1052.8 598.500 L1048.8 655.500" stroke="#555" stroke-width=".8" stroke-dasharray="3 2.500" clip-path="url(#lf)"/><path d="M1095.8 598.500 L1099.8 655.500" stroke="#555" stroke-width=".8" stroke-dasharray="3 2.500" clip-path="url(#lf)"/><path d="M1117.3 598.500 L1125.3 655.500" stroke="#555" stroke-width=".8" stroke-dasharray="3 2.500" clip-path="url(#lf)"/><path d="M1138.8 598.500 L1150.8 655.500" stroke="#555" stroke-width=".8" stroke-dasharray="3 2.500" clip-path="url(#lf)"/><path d="M1074.3 513.800 V655.500" stroke="#111" stroke-width="1.700" stroke-dasharray="2.600 2.400"/><rect x="871.600" y="636" width="22.400" height="19.500" fill="#050505"/><rect x="1156.700" y="598.800" width="119.500" height="56.700" fill="#ffffff"/></svg>
<span class="t" style="left:1129.0px;top:564.8px;font-size:12.5px;line-height:15.0px;color:#8e8e8e;font-family:'Liberation Mono',monospace;transform:scaleX(1.124);">Size: S</span>
<span class="t" style="left:975.0px;top:635.8px;font-size:12.5px;line-height:15.0px;color:#8e8e8e;font-family:'Liberation Mono',monospace;transform:scaleX(1.118);">Simulation in progress: 7%</span>
<svg width="1280" height="720"><defs><linearGradient id="bd" x1="0" x2="1" y1="0" y2="0"><stop offset="0" stop-color="#e9e9eb"/><stop offset=".25" stop-color="#f7f7f8"/><stop offset=".5" stop-color="#e8e8ea"/><stop offset=".75" stop-color="#f6f6f7"/><stop offset="1" stop-color="#e6e6e9"/></linearGradient><linearGradient id="sl" x1="0" x2="1" y1="0" y2="0"><stop offset="0" stop-color="#f5f5f6"/><stop offset=".6" stop-color="#f0f0f2"/><stop offset="1" stop-color="#e2e2e5"/></linearGradient><linearGradient id="sr" x1="0" x2="1" y1="0" y2="0"><stop offset="0" stop-color="#e0e0e3"/><stop offset=".4" stop-color="#f0f0f2"/><stop offset="1" stop-color="#f5f5f6"/></linearGradient><filter id="bl"><feGaussianBlur stdDeviation="1.600"/></filter><filter id="bl2"><feGaussianBlur stdDeviation=".500"/></filter></defs><path d="M1026.7 275.6 L1018.9 306.7 L1010.6 337.2 L999.4 373.3 L989.2 405.3 L991.1 416.4 L1004.4 422.2 L1013.9 410.8 L1025.8 378.9 L1036.4 351.1 L1038.9 323.3 L1034.4 291.4z" fill="url(#sl)" filter="url(#bl2)"/><path d="M1121.7 274.7 L1128.6 306.7 L1135.6 337.2 L1146.7 373.3 L1158.3 403.9 L1155.6 417.8 L1142.5 421.1 L1135.6 409.4 L1123.1 378.9 L1111.4 345.6 L1110.0 323.3 L1116.1 291.4z" fill="url(#sr)" filter="url(#bl2)"/><path d="M1054.4 266.4 L1034.4 278.9 L1035.0 291.4 L1038.9 317.8 L1040.0 337.2 L1037.8 362.2 L1036.7 384.4 L1033.9 417.8 L1052.2 424.7 L1071.7 427.8 L1093.9 425.6 L1113.9 420.6 L1111.1 384.4 L1110.0 362.2 L1110.6 337.2 L1112.8 315.0 L1116.7 291.4 L1116.7 278.9 L1089.7 266.4 L1073.1 284.4z" fill="url(#bd)" filter="url(#bl2)"/><g filter="url(#bl)" fill="none" stroke-linecap="round"><path d="M1046.7 320.6 C1049.0 319.9 1056.2 315.9 1060.6 316.4 C1065.0 316.9 1071.0 322.2 1073.1 323.3" stroke="#cfcfd3" stroke-width="4"/><path d="M1077.2 323.3 C1079.5 322.2 1086.5 317.1 1091.1 316.4 C1095.7 315.7 1102.7 318.7 1105.0 319.2" stroke="#cfcfd3" stroke-width="4"/><path d="M1073.9 299.7 C1074.2 305.0 1075.7 320.8 1075.8 331.7 C1075.9 342.5 1074.4 352.5 1074.4 365.0 C1074.4 377.5 1075.6 399.7 1075.8 406.7" stroke="#d4d4d8" stroke-width="3.500"/><path d="M1086.9 334.4 C1086.5 338.1 1084.2 348.3 1084.2 356.7 C1084.2 365.0 1086.7 375.2 1086.9 384.4 C1087.2 393.7 1085.8 407.6 1085.6 412.2" stroke="#dadade" stroke-width="4"/><path d="M1063.3 340.0 C1063.8 344.2 1066.1 355.7 1066.1 365.0 C1066.1 374.3 1063.8 390.5 1063.3 395.6" stroke="#fbfbfc" stroke-width="5"/><path d="M1042.5 309.4 L1044.4 331.7" stroke="#d8d8dc" stroke-width="3"/><path d="M1107.8 309.4 L1105.6 331.7" stroke="#d8d8dc" stroke-width="3"/><path d="M1013.3 345.6 C1011.9 351.1 1007.8 368.7 1005.0 378.9 C1002.2 389.1 998.1 402.0 996.7 406.7" stroke="#fafafb" stroke-width="4"/><path d="M1135.6 351.1 C1137.4 356.7 1143.9 374.7 1146.7 384.4 C1149.4 394.2 1151.3 405.3 1152.2 409.4" stroke="#fafafb" stroke-width="4"/></g><path d="M1060.6 262.2 L1068.9 267.2 L1077.8 267.8 L1086.9 262.8 L1088.9 266.7 L1077.8 271.1 L1068.3 271.1 L1057.8 266.7z" fill="#ececee" filter="url(#bl2)"/><path d="M1055.0 265.0 L1042.5 267.8 L1026.1 274.4 L1025.0 281.7 L1029.4 290.0 L1034.4 291.7 L1036.9 285.8 L1046.7 278.9 L1056.4 277.5z" fill="#1c1ce6"/><path d="M1089.2 265.0 L1102.2 267.2 L1121.1 272.8 L1122.8 281.7 L1120.3 288.6 L1115.6 291.7 L1112.8 285.8 L1102.2 278.9 L1090.6 277.5z" fill="#1c1ce6"/><path d="M1053.9 264.4 C1054.1 266.2 1054.2 271.5 1055.0 274.7 C1055.8 278.0 1057.1 281.1 1058.9 283.9 C1060.6 286.7 1063.1 289.6 1065.6 291.7 C1068.0 293.8 1070.7 296.3 1073.3 296.4 C1075.9 296.5 1078.8 294.3 1081.1 292.2 C1083.4 290.1 1085.7 286.8 1087.2 283.9 C1088.8 281.0 1089.8 278.0 1090.3 274.7 C1090.8 271.5 1090.3 266.2 1090.3 264.4 L1086.7 266.7 C1086.4 268.0 1086.0 272.2 1085.0 274.7 C1084.0 277.2 1082.4 279.8 1080.6 281.7 C1078.7 283.6 1076.1 286.1 1073.9 286.1 C1071.7 286.1 1069.1 283.6 1067.2 281.7 C1065.4 279.8 1063.9 277.2 1062.8 274.7 C1061.7 272.2 1060.9 268.0 1060.6 266.7z" fill="#1c1ce6"/><path d="M1031.4 274.7 L1043.9 271.1" stroke="#b8b8f4" stroke-width=".7"/><path d="M1030.0 278.9 L1049.4 272.8" stroke="#b8b8f4" stroke-width=".7"/><path d="M1096.7 270.0 L1110.6 272.8" stroke="#b8b8f4" stroke-width=".7"/><path d="M1100.8 273.9 L1118.9 277.5" stroke="#b8b8f4" stroke-width=".7"/><path d="M1063.3 281.7 L1064.7 288.6" stroke="#b8b8f4" stroke-width=".7"/><path d="M1075.8 289.4 L1077.2 294.4" stroke="#b8b8f4" stroke-width=".7"/><path d="M1034.4 291.7 C1034.6 293.7 1034.8 298.6 1035.6 303.9 C1036.3 309.2 1038.3 320.1 1038.9 323.3" fill="none" stroke="#1c1ce6" stroke-width="1.6" stroke-dasharray="2 1.500" stroke-opacity="1"/><path d="M1039.4 334.4 C1039.0 337.2 1037.1 345.1 1036.9 351.1 C1036.8 357.1 1038.3 365.0 1038.3 370.6 C1038.4 376.1 1037.4 382.1 1037.2 384.4" fill="none" stroke="#1c1ce6" stroke-width="1.6" stroke-dasharray="4 3 1.500 3" stroke-opacity="1"/><path d="M1035.6 351.1 C1033.9 355.7 1029.4 368.9 1025.8 378.9 C1022.2 388.8 1015.9 405.5 1013.9 410.8" fill="none" stroke="#1c1ce6" stroke-width="1" stroke-dasharray="1 3.500" stroke-opacity="1"/><path d="M989.2 405.3 C990.4 405.8 994.0 407.5 996.7 408.3 C999.3 409.1 1002.3 409.4 1005.0 410.0 C1007.7 410.6 1011.5 411.4 1012.8 411.7" fill="none" stroke="#1c1ce6" stroke-width="1.2" stroke-dasharray="2.500 1.500" stroke-opacity="1"/><path d="M1115.6 292.2 C1115.1 294.2 1113.6 299.2 1112.8 303.9 C1111.9 308.6 1110.9 317.8 1110.6 320.6" fill="none" stroke="#1c1ce6" stroke-width="1.4" stroke-dasharray="1.500 2.500" stroke-opacity="1"/><path d="M1110.0 331.7 L1109.4 340.0" fill="none" stroke="#1c1ce6" stroke-width="2" stroke-dasharray="3 2" stroke-opacity="1"/><path d="M1110.0 370.6 L1110.6 381.7" fill="none" stroke="#1c1ce6" stroke-width="1.2" stroke-dasharray="1.500 3" stroke-opacity="1"/><path d="M1118.9 351.1 C1120.3 355.7 1124.4 369.1 1127.2 378.9 C1130.1 388.7 1134.6 404.8 1136.1 410.0" fill="none" stroke="#1c1ce6" stroke-width="1" stroke-dasharray="1 3.500" stroke-opacity="1"/><path d="M1136.1 410.0 C1137.9 409.4 1143.0 407.7 1146.7 406.7 C1150.4 405.6 1156.4 404.4 1158.3 403.9" fill="none" stroke="#1c1ce6" stroke-width="1.2" stroke-dasharray="2.500 1.500" stroke-opacity="1"/><circle cx="1058.3" cy="247.8" r=".700" fill="#b0b0b0"/><circle cx="1090.6" cy="248.3" r=".700" fill="#b0b0b0"/><circle cx="1071.7" cy="259.4" r=".700" fill="#b0b0b0"/></svg>
<svg width="1280" height="720"><defs><filter id="cb"><feGaussianBlur stdDeviation="1.100"/></filter></defs><circle cx="1023.300" cy="498.600" r="24.500" fill="#f2ee58" fill-opacity=".800" filter="url(#cb)"/><path d="M1017.500 491.500 v15 l3.500 -3.200 l2.600 6 l2.500 -1.100 l-2.600 -5.800 l4.700 -0.300z" fill="#fff" stroke="#333" stroke-width="1.100"/></svg>
<div class="a" style="left:1276.2px;top:0.0px;width:3.8px;height:587.0px;background:linear-gradient(#08281a,#0b3d22 20%,#0b4a2a 60%,#0a6a3a 100%);"></div>
<div class="a" style="left:1276.2px;top:587.0px;width:3.8px;height:44.0px;background:#ffffff;"></div>
<div class="a" style="left:1276.2px;top:631.0px;width:3.8px;height:27.0px;background:#c8c8c8;"></div>
<div class="a" style="left:2.0px;top:658.0px;width:1274.2px;height:24.0px;background:#f0f0f0;"></div>
<div class="a" style="left:2.0px;top:658.0px;width:1274.2px;height:1.0px;background:#dcdcdc;"></div>
<div class="a" style="left:0.0px;top:681.5px;width:1280.0px;height:2.0px;background:#8fb6d6;"></div>
<div class="a" style="left:3.0px;top:659.5px;width:684.0px;height:21.5px;background:#f1f1f1;border:1px solid #bcbcbc;border-right-color:#fdfdfd;border-bottom-color:#fdfdfd;"></div>
<div class="a" style="left:787.5px;top:659.5px;width:48.0px;height:21.5px;background:#f1f1f1;border:1px solid #bcbcbc;border-right-color:#fdfdfd;border-bottom-color:#fdfdfd;"></div>
<div class="a" style="left:838.0px;top:659.5px;width:48.0px;height:21.5px;background:#f1f1f1;border:1px solid #bcbcbc;border-right-color:#fdfdfd;border-bottom-color:#fdfdfd;"></div>
<div class="a" style="left:889.0px;top:659.5px;width:152.5px;height:21.5px;background:#f1f1f1;border:1px solid #bcbcbc;border-right-color:#fdfdfd;border-bottom-color:#fdfdfd;"></div>
<div class="a" style="left:1044.0px;top:659.5px;width:51.0px;height:21.5px;background:#f1f1f1;border:1px solid #bcbcbc;border-right-color:#fdfdfd;border-bottom-color:#fdfdfd;"></div>
<div class="a" style="left:1097.5px;top:659.5px;width:94.5px;height:21.5px;background:#f1f1f1;border:1px solid #bcbcbc;border-right-color:#fdfdfd;border-bottom-color:#fdfdfd;"></div>
<div class="a" style="left:1195.0px;top:659.5px;width:80.5px;height:21.5px;background:#f1f1f1;border:1px solid #bcbcbc;border-right-color:#fdfdfd;border-bottom-color:#fdfdfd;"></div>
<span class="t" style="left:1059.5px;top:664.1px;font-size:11.5px;line-height:13.8px;color:#1c1c1c;transform:scaleX(0.821);">SEW</span>
<span class="t" style="left:1211.0px;top:664.1px;font-size:11.5px;line-height:13.8px;color:#1c1c1c;transform:scaleX(0.981);">CM - sq.m</span>
<span class="t" style="left:5.0px;top:663.8px;font-size:12px;line-height:14.4px;color:#1c1c1c;transform:scaleX(0.865);">Ready</span>
<svg width="1280" height="720"><rect x="688.500" y="659" width="97.500" height="22.500" fill="#f8f8f8"/><path d="M698.300 681.500 V677 a11 11 0 0 1 11 -11 h3.300 V681.500z" fill="#c6c6c6"/><path d="M698.300 681.500 V677 a11 11 0 0 1 11 -11" fill="none" stroke="#333" stroke-width=".9"/><path d="M691.500 661.500 L700 671 M708.500 661 L691.500 678.500 M695.0 662.7 L691.5 661.5 L692.4 665.1 M707.5 664.5 L708.5 661.0 L705.0 662.0 M692.5 675.0 L691.5 678.5 L695.0 677.5" stroke="#222" stroke-width="1" fill="none"/><rect x="726.400" y="671.500" width="10.300" height="10" fill="#c6c6c6" stroke="#666" stroke-width=".7"/><path d="M716 668.500 H733 M724.500 660.500 V677.500 M719.2 666.7 L716.0 668.5 L719.2 670.3 M729.8 670.3 L733.0 668.5 L729.8 666.7 M726.3 663.7 L724.5 660.5 L722.7 663.7 M722.7 674.3 L724.5 677.5 L726.3 674.3" stroke="#222" stroke-width="1" fill="none"/><path d="M748 681.500 V677 a11 11 0 0 1 11 -11 h2.600 V681.500z" fill="#c6c6c6"/><path d="M748 683 V677 a11 11 0 0 1 11 -11 l2.500 .300" fill="none" stroke="#333" stroke-width=".9"/><path d="M740.500 661.500 L750 671 L757.500 661.500 M750 671 L741 679 M748.500 659.500 V675 M744.0 662.5 L740.5 661.5 L741.5 665.0 M756.8 665.1 L757.5 661.5 L754.1 662.8 M742.0 675.5 L741.0 679.0 L744.5 678.0" stroke="#222" stroke-width="1" fill="none"/><circle cx="749.500" cy="670" r="2.300" fill="none" stroke="#111" stroke-width="1"/><path d="M766 681.500 a9.500 9.500 0 0 1 18 -6 V681.500z" fill="#c6c6c6"/><path d="M766 679 a9.500 9.500 0 0 1 14 -11" fill="none" stroke="#444" stroke-width=".9"/><path d="M764 680.500 L785 660.500" stroke="#444" stroke-width="1"/><path d="M765.500 681 L786 661.500" stroke="#444" stroke-width="2.600" stroke-dasharray=".9 1.700"/><text x="776" y="681" font-family="Liberation Serif, serif" font-weight="bold" font-size="12.500" fill="#111">D</text></svg>
<div class="a" style="left:0.0px;top:683.5px;width:1280.0px;height:36.5px;background:#06080e;"></div>
<div class="a" style="left:458.5px;top:683.5px;width:45.0px;height:36.5px;background:#3a3b3e;"></div>
<svg width="1280" height="720"><g fill="#fff"><path d="M14.500 696.500 l6.500 -1 v6 h-6.500z M22 695.300 l8.500 -1.300 v7.500 h-8.500z M14.500 702.500 h6.500 v6 l-6.500 -1z M22 702.500 h8.500 v7.500 l-8.500 -1.300z"/></g><circle cx="67" cy="702" r="6.600" fill="none" stroke="#fff" stroke-width="2.200"/><rect x="107.500" y="696.500" width="10" height="11" fill="none" stroke="#fff" stroke-width="1.400"/><path d="M104.500 698.500 h-1.800 v7 h1.800 M120.500 698.500 h1.800 v7 h-1.800" fill="none" stroke="#fff" stroke-width="1.300"/><path d="M149.500 697.500 h18 v13 h-18z" fill="#fff"/><path d="M154.500 697.500 q0 -5 4 -5 q4 0 4 5" fill="none" stroke="#fff" stroke-width="1.500"/><g fill="#06080e"><rect x="154" y="700" width="4" height="3.500"/><rect x="159" y="699.500" width="4.500" height="4"/><rect x="154" y="704.500" width="4" height="3.500"/><rect x="159" y="704.500" width="4.500" height="4"/></g><path d="M195.500 693.500 h7 l2 2.500 h10 v13.500 h-19z" fill="#f4c64a"/><rect x="195.500" y="699" width="19" height="10.500" fill="#fbdc78"/><rect x="200" y="703.500" width="10" height="6" fill="#4aa0e8"/><rect x="202.500" y="706" width="5" height="3.500" fill="#fbdc78"/><circle cx="252" cy="704" r="8.500" fill="#4a9a44"/><circle cx="252" cy="704" r="5" fill="none" stroke="#d8f0c8" stroke-width="1.800"/><path d="M252 704 l7 -6" stroke="#d8f0c8" stroke-width="1.800"/><path d="M242.500 699.500 q3 -8 12 -7 q-2 4 -4 5.500 q-4 2.500 -8 1.500z" fill="#d8282a"/><circle cx="256.500" cy="692" r="2.200" fill="#fff"/><circle cx="297" cy="702" r="10" fill="#1eaae8"/><text x="297" y="707.500" text-anchor="middle" font-family="Liberation Sans, sans-serif" font-weight="bold" font-size="15" fill="#fff">S</text><circle cx="343" cy="702" r="10.500" fill="#1a6ad8"/><rect x="337" y="696.500" width="12" height="8.500" rx="1" fill="#e8f2fe"/><path d="M340 708 h6 M343 705 v3" stroke="#e8f2fe" stroke-width="1.500"/><circle cx="388.500" cy="702" r="10.500" fill="#a878c8"/><circle cx="388.500" cy="702" r="7.500" fill="#e8d8f4"/><path d="M388.500 702 l3 -7 M388.500 702 l-5 2" stroke="#7a3da8" stroke-width="1.600"/><circle cx="396" cy="709.500" r="3" fill="#e0282a"/><path d="M426 706 l6 -13.500 l11 2 l-3 15 l-9 2z" fill="#bfe0e8" stroke="#7ab0c0" stroke-width="1"/><path d="M426 706 l5 5.500 l9 -2" fill="#8ac0d0"/><circle cx="481" cy="702" r="10.500" fill="#c8b060" stroke="#8a7430" stroke-width="1"/><circle cx="481" cy="702" r="7.500" fill="#e0cc84"/><path d="M476 696.500 l10 11 M486 696.500 l-10 11" stroke="#8a1838" stroke-width="1.800"/><circle cx="476.500" cy="708" r="1.600" fill="none" stroke="#3a2ab0" stroke-width="1"/><circle cx="485.500" cy="708" r="1.600" fill="none" stroke="#3a2ab0" stroke-width="1"/><rect x="278" y="718" width="41" height="2" fill="#8ab4e8"/><rect x="324" y="718" width="38" height="2" fill="#8ab4e8"/><rect x="370" y="718" width="38" height="2" fill="#8ab4e8"/><rect x="414" y="718" width="38" height="2" fill="#8ab4e8"/><rect x="460" y="718" width="42" height="2" fill="#8ab4e8"/><path d="M1092 705 l5.500 -5.500 l5.500 5.500" fill="none" stroke="#fff" stroke-width="1.400"/><path d="M1113 699.500 h2.500 l4 -3.500 v12 l-4 -3.500 h-2.500z" fill="none" stroke="#fff" stroke-width="1.200"/><circle cx="1123.500" cy="706.500" r="3.600" fill="#e03a3a"/><path d="M1122 705 l3 3 M1125 705 l-3 3" stroke="#fff" stroke-width="1"/><rect x="1136.500" y="697.500" width="11" height="8" fill="none" stroke="#fff" stroke-width="1.300"/><path d="M1139 709 h6 M1142 705.500 v3.500 M1135 695.500 v6" stroke="#fff" stroke-width="1.300"/><path d="M1158 696 h13 v10 h-13z" fill="none" stroke="#fff" stroke-width="1.300"/><path d="M1160.500 699 h8 M1160.500 701.500 h8 M1160.500 704 h5" stroke="#fff" stroke-width="1"/><circle cx="1170" cy="707.500" r="3" fill="#06080e" stroke="#fff" stroke-width="1"/></svg>
<span class="t" style="left:1181.7px;top:696.0px;font-size:11.5px;line-height:13.8px;color:#fff;transform:scaleX(0.843);">ENG</span>
<span class="t" style="left:1220.7px;top:687.4px;font-size:11.5px;line-height:13.8px;color:#fff;transform:scaleX(0.904);">10:10 PM</span>
<span class="t" style="left:1221.7px;top:703.3px;font-size:11.5px;line-height:13.8px;color:#fff;transform:scaleX(0.950);">1/4/2018</span>
<div class="a" style="left:0.0px;top:0.0px;width:1.5px;height:682.0px;background:#0c2f8f;"></div>
</body>
</html>
